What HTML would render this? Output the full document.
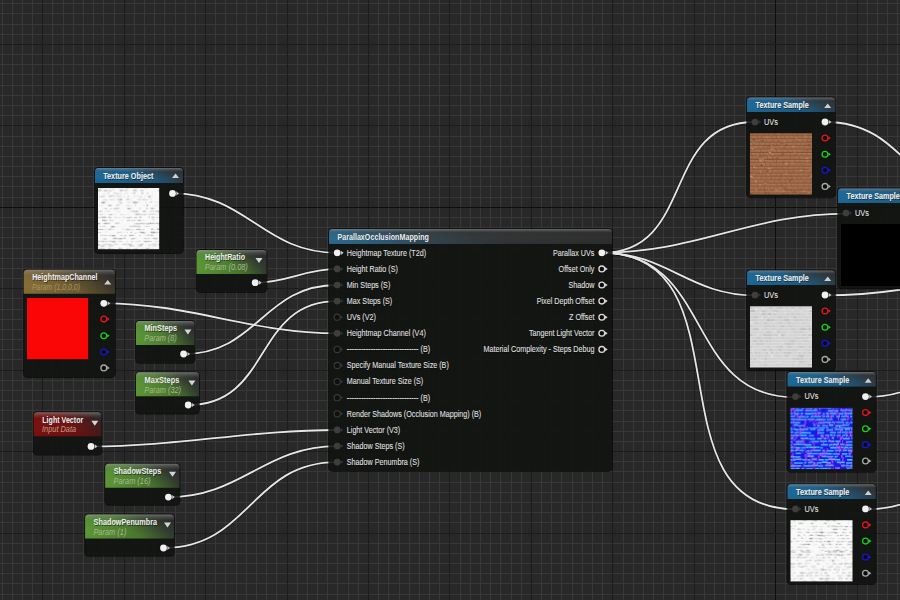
<!DOCTYPE html>
<html><head><meta charset="utf-8"><style>
html,body{margin:0;padding:0;width:900px;height:600px;overflow:hidden;background:#282828;}
svg{position:absolute;left:0;top:0;display:block}
</style></head><body>
<svg width="900" height="600" viewBox="0 0 900 600">
<defs><linearGradient id="gBlue" x1="0" y1="0.7" x2="1" y2="0.3">
<stop offset="0" stop-color="#1d6b9c"/><stop offset="0.5" stop-color="#1f5e86"/><stop offset="0.8" stop-color="#2a3e4a"/><stop offset="1" stop-color="#2e3032"/></linearGradient><linearGradient id="gBlueWide" x1="0" y1="0.6" x2="1" y2="0.4"><stop offset="0" stop-color="#2f6a8e"/><stop offset="0.12" stop-color="#2c5f7e"/><stop offset="0.33" stop-color="#34434c"/><stop offset="0.55" stop-color="#333536"/><stop offset="1" stop-color="#2d2d2d"/></linearGradient><linearGradient id="gGreen" x1="0" y1="0.7" x2="1" y2="0.3">
<stop offset="0" stop-color="#5e9c37"/><stop offset="0.45" stop-color="#4d7e30"/><stop offset="0.8" stop-color="#323c2e"/><stop offset="1" stop-color="#2a2b2a"/></linearGradient><linearGradient id="gGold" x1="0" y1="0.7" x2="1" y2="0.3">
<stop offset="0" stop-color="#8a7136"/><stop offset="0.45" stop-color="#705d32"/><stop offset="0.82" stop-color="#3c362a"/><stop offset="1" stop-color="#2c2b2a"/></linearGradient><linearGradient id="gRed" x1="0" y1="0.7" x2="1" y2="0.3">
<stop offset="0" stop-color="#801010"/><stop offset="0.5" stop-color="#6c1212"/><stop offset="0.85" stop-color="#421c1c"/><stop offset="1" stop-color="#2d2626"/></linearGradient><linearGradient id="gGloss" x1="0" y1="0" x2="0" y2="1">
<stop offset="0" stop-color="#a0a0a0" stop-opacity="0.55"/><stop offset="0.1" stop-color="#909090" stop-opacity="0.3"/><stop offset="0.25" stop-color="#808080" stop-opacity="0.0"/><stop offset="1" stop-color="#000000" stop-opacity="0.08"/></linearGradient><pattern id="tw" patternUnits="userSpaceOnUse" x="0" y="0" width="61.2" height="61.2"><rect width="62" height="62" fill="#f9f9f9"/><rect x="21.9" y="57.2" width="3.2" height="1.2" fill="#6f6f6f" fill-opacity="0.30"/><rect x="28.4" y="48.0" width="4.1" height="1.1" fill="#6f6f6f" fill-opacity="0.39"/><rect x="53.0" y="9.3" width="2.1" height="0.7" fill="#6f6f6f" fill-opacity="0.17"/><rect x="11.1" y="18.3" width="3.8" height="0.9" fill="#6f6f6f" fill-opacity="0.34"/><rect x="37.7" y="6.1" width="1.2" height="0.6" fill="#6f6f6f" fill-opacity="0.38"/><rect x="58.6" y="18.6" width="1.4" height="0.7" fill="#6f6f6f" fill-opacity="0.19"/><rect x="41.3" y="18.4" width="1.5" height="1.3" fill="#6f6f6f" fill-opacity="0.32"/><rect x="22.0" y="36.2" width="1.4" height="0.7" fill="#6f6f6f" fill-opacity="0.11"/><rect x="35.8" y="27.7" width="2.9" height="1.1" fill="#6f6f6f" fill-opacity="0.11"/><rect x="29.3" y="33.7" width="1.9" height="0.9" fill="#6f6f6f" fill-opacity="0.32"/><rect x="57.3" y="3.2" width="4.1" height="0.9" fill="#6f6f6f" fill-opacity="0.22"/><rect x="22.3" y="51.6" width="2.8" height="0.6" fill="#6f6f6f" fill-opacity="0.10"/><rect x="58.2" y="15.5" width="1.2" height="0.8" fill="#6f6f6f" fill-opacity="0.36"/><rect x="21.6" y="42.3" width="2.6" height="1.1" fill="#6f6f6f" fill-opacity="0.12"/><rect x="2.2" y="33.7" width="4.1" height="0.7" fill="#6f6f6f" fill-opacity="0.20"/><rect x="9.0" y="57.3" width="1.8" height="1.1" fill="#6f6f6f" fill-opacity="0.11"/><rect x="48.7" y="30.2" width="3.0" height="1.1" fill="#6f6f6f" fill-opacity="0.19"/><rect x="3.0" y="45.1" width="4.3" height="1.0" fill="#6f6f6f" fill-opacity="0.22"/><rect x="21.0" y="21.6" width="1.7" height="1.1" fill="#6f6f6f" fill-opacity="0.13"/><rect x="30.1" y="60.0" width="3.7" height="0.7" fill="#6f6f6f" fill-opacity="0.33"/><rect x="48.1" y="12.5" width="1.2" height="0.9" fill="#6f6f6f" fill-opacity="0.13"/><rect x="27.6" y="39.2" width="4.3" height="1.2" fill="#6f6f6f" fill-opacity="0.41"/><rect x="42.0" y="42.8" width="1.9" height="0.8" fill="#6f6f6f" fill-opacity="0.24"/><rect x="50.1" y="12.1" width="2.7" height="0.7" fill="#6f6f6f" fill-opacity="0.40"/><rect x="30.0" y="30.1" width="2.6" height="1.0" fill="#6f6f6f" fill-opacity="0.25"/><rect x="47.3" y="6.6" width="3.2" height="1.1" fill="#6f6f6f" fill-opacity="0.34"/><rect x="40.8" y="33.4" width="3.7" height="0.8" fill="#6f6f6f" fill-opacity="0.41"/><rect x="20.7" y="27.8" width="1.4" height="1.2" fill="#6f6f6f" fill-opacity="0.24"/><rect x="16.7" y="24.3" width="1.8" height="1.0" fill="#6f6f6f" fill-opacity="0.31"/><rect x="39.3" y="33.3" width="3.4" height="1.2" fill="#6f6f6f" fill-opacity="0.20"/><rect x="42.0" y="15.7" width="4.2" height="1.3" fill="#6f6f6f" fill-opacity="0.26"/><rect x="12.1" y="48.8" width="2.1" height="1.2" fill="#6f6f6f" fill-opacity="0.18"/><rect x="44.6" y="6.6" width="1.4" height="1.1" fill="#6f6f6f" fill-opacity="0.28"/><rect x="33.7" y="39.2" width="3.8" height="0.8" fill="#6f6f6f" fill-opacity="0.42"/><rect x="26.9" y="18.1" width="3.1" height="0.8" fill="#6f6f6f" fill-opacity="0.31"/><rect x="60.2" y="60.6" width="4.2" height="0.7" fill="#6f6f6f" fill-opacity="0.38"/><rect x="11.1" y="9.3" width="1.5" height="0.6" fill="#6f6f6f" fill-opacity="0.24"/><rect x="4.4" y="36.5" width="1.5" height="1.1" fill="#6f6f6f" fill-opacity="0.21"/><rect x="17.0" y="33.3" width="2.2" height="0.7" fill="#6f6f6f" fill-opacity="0.36"/><rect x="33.5" y="33.8" width="1.9" height="0.8" fill="#6f6f6f" fill-opacity="0.26"/><rect x="21.4" y="54.2" width="1.3" height="0.9" fill="#6f6f6f" fill-opacity="0.27"/><rect x="8.7" y="51.3" width="2.9" height="1.0" fill="#6f6f6f" fill-opacity="0.41"/><rect x="21.4" y="12.5" width="3.9" height="0.6" fill="#6f6f6f" fill-opacity="0.12"/><rect x="32.9" y="54.7" width="1.9" height="1.2" fill="#6f6f6f" fill-opacity="0.27"/><rect x="13.8" y="39.3" width="1.8" height="1.3" fill="#6f6f6f" fill-opacity="0.21"/><rect x="15.8" y="15.5" width="4.2" height="0.9" fill="#6f6f6f" fill-opacity="0.22"/><rect x="18.8" y="30.8" width="4.1" height="0.7" fill="#6f6f6f" fill-opacity="0.09"/><rect x="15.0" y="57.8" width="0.9" height="0.7" fill="#6f6f6f" fill-opacity="0.22"/><rect x="16.7" y="45.4" width="4.1" height="1.1" fill="#6f6f6f" fill-opacity="0.17"/><rect x="44.0" y="24.7" width="1.8" height="0.9" fill="#6f6f6f" fill-opacity="0.42"/><rect x="36.8" y="48.5" width="3.4" height="0.7" fill="#6f6f6f" fill-opacity="0.34"/><rect x="43.2" y="27.2" width="2.9" height="1.1" fill="#6f6f6f" fill-opacity="0.09"/><rect x="45.4" y="33.3" width="2.9" height="0.6" fill="#6f6f6f" fill-opacity="0.17"/><rect x="6.6" y="42.5" width="3.2" height="0.7" fill="#6f6f6f" fill-opacity="0.23"/><rect x="42.0" y="39.5" width="4.1" height="1.1" fill="#6f6f6f" fill-opacity="0.37"/><rect x="41.6" y="36.4" width="3.3" height="1.2" fill="#6f6f6f" fill-opacity="0.24"/><rect x="0.2" y="6.2" width="3.5" height="1.0" fill="#6f6f6f" fill-opacity="0.30"/><rect x="8.7" y="45.7" width="2.5" height="1.0" fill="#6f6f6f" fill-opacity="0.25"/><rect x="26.0" y="30.4" width="2.7" height="0.6" fill="#6f6f6f" fill-opacity="0.33"/><rect x="48.3" y="24.7" width="3.1" height="0.6" fill="#6f6f6f" fill-opacity="0.33"/><rect x="42.8" y="6.8" width="1.0" height="1.2" fill="#6f6f6f" fill-opacity="0.16"/><rect x="6.8" y="60.7" width="3.9" height="1.3" fill="#6f6f6f" fill-opacity="0.32"/><rect x="37.2" y="42.1" width="2.2" height="0.7" fill="#6f6f6f" fill-opacity="0.29"/><rect x="40.3" y="3.4" width="3.4" height="0.8" fill="#6f6f6f" fill-opacity="0.28"/><rect x="53.6" y="9.6" width="1.3" height="0.9" fill="#6f6f6f" fill-opacity="0.19"/><rect x="21.6" y="57.4" width="3.1" height="1.2" fill="#6f6f6f" fill-opacity="0.13"/><rect x="38.5" y="27.1" width="2.6" height="1.2" fill="#6f6f6f" fill-opacity="0.27"/><rect x="3.9" y="57.2" width="1.6" height="1.2" fill="#6f6f6f" fill-opacity="0.18"/><rect x="52.7" y="12.6" width="2.4" height="0.9" fill="#6f6f6f" fill-opacity="0.13"/><rect x="5.2" y="0.5" width="3.1" height="0.7" fill="#6f6f6f" fill-opacity="0.13"/><rect x="23.8" y="57.4" width="2.4" height="1.3" fill="#6f6f6f" fill-opacity="0.12"/><rect x="44.2" y="48.0" width="1.0" height="0.7" fill="#6f6f6f" fill-opacity="0.40"/><rect x="5.1" y="21.6" width="4.0" height="0.9" fill="#6f6f6f" fill-opacity="0.16"/><rect x="51.0" y="57.3" width="1.8" height="1.3" fill="#6f6f6f" fill-opacity="0.32"/><rect x="44.1" y="36.3" width="2.1" height="0.8" fill="#6f6f6f" fill-opacity="0.30"/><rect x="36.2" y="33.4" width="2.8" height="1.1" fill="#6f6f6f" fill-opacity="0.22"/><rect x="11.4" y="9.0" width="1.5" height="0.9" fill="#6f6f6f" fill-opacity="0.40"/><rect x="28.7" y="33.0" width="3.9" height="1.0" fill="#6f6f6f" fill-opacity="0.23"/><rect x="11.7" y="42.4" width="3.1" height="0.6" fill="#6f6f6f" fill-opacity="0.38"/><rect x="15.5" y="45.1" width="1.8" height="0.7" fill="#6f6f6f" fill-opacity="0.18"/><rect x="54.7" y="21.0" width="2.0" height="1.1" fill="#6f6f6f" fill-opacity="0.19"/><rect x="41.1" y="3.6" width="2.5" height="1.3" fill="#6f6f6f" fill-opacity="0.12"/><rect x="41.1" y="30.2" width="3.4" height="0.7" fill="#6f6f6f" fill-opacity="0.15"/><rect x="40.0" y="0.5" width="3.0" height="1.2" fill="#6f6f6f" fill-opacity="0.32"/><rect x="22.0" y="27.1" width="1.0" height="1.3" fill="#6f6f6f" fill-opacity="0.24"/><rect x="12.7" y="21.1" width="1.0" height="1.0" fill="#6f6f6f" fill-opacity="0.33"/><rect x="3.7" y="24.0" width="3.5" height="0.9" fill="#6f6f6f" fill-opacity="0.10"/><rect x="51.1" y="51.7" width="2.8" height="1.3" fill="#6f6f6f" fill-opacity="0.32"/><rect x="30.0" y="21.7" width="4.1" height="0.6" fill="#6f6f6f" fill-opacity="0.17"/><rect x="47.7" y="3.4" width="1.0" height="1.2" fill="#6f6f6f" fill-opacity="0.23"/><rect x="2.3" y="60.0" width="4.2" height="0.7" fill="#6f6f6f" fill-opacity="0.25"/><rect x="14.3" y="36.2" width="4.0" height="1.2" fill="#6f6f6f" fill-opacity="0.11"/><rect x="52.3" y="15.5" width="1.6" height="0.6" fill="#6f6f6f" fill-opacity="0.27"/><rect x="46.9" y="45.3" width="2.6" height="0.7" fill="#6f6f6f" fill-opacity="0.09"/><rect x="54.4" y="27.6" width="4.3" height="1.0" fill="#6f6f6f" fill-opacity="0.13"/><rect x="47.1" y="45.1" width="3.7" height="0.8" fill="#6f6f6f" fill-opacity="0.13"/><rect x="42.5" y="6.4" width="3.6" height="1.3" fill="#6f6f6f" fill-opacity="0.31"/><rect x="42.7" y="24.0" width="1.0" height="0.7" fill="#6f6f6f" fill-opacity="0.18"/><rect x="4.4" y="33.7" width="3.5" height="0.9" fill="#6f6f6f" fill-opacity="0.34"/><rect x="39.9" y="0.7" width="3.5" height="1.0" fill="#6f6f6f" fill-opacity="0.23"/><rect x="1.1" y="60.6" width="1.0" height="0.9" fill="#6f6f6f" fill-opacity="0.12"/><rect x="19.6" y="36.4" width="1.9" height="0.7" fill="#6f6f6f" fill-opacity="0.25"/><rect x="3.9" y="30.2" width="3.5" height="1.0" fill="#6f6f6f" fill-opacity="0.09"/><rect x="50.4" y="3.8" width="2.3" height="0.8" fill="#6f6f6f" fill-opacity="0.40"/><rect x="26.2" y="0.2" width="2.1" height="0.8" fill="#6f6f6f" fill-opacity="0.09"/><rect x="10.0" y="54.5" width="4.2" height="0.8" fill="#6f6f6f" fill-opacity="0.29"/><rect x="27.2" y="60.6" width="4.1" height="1.2" fill="#6f6f6f" fill-opacity="0.12"/><rect x="13.9" y="30.4" width="2.9" height="0.7" fill="#6f6f6f" fill-opacity="0.10"/><rect x="59.1" y="15.4" width="2.9" height="0.7" fill="#6f6f6f" fill-opacity="0.36"/><rect x="12.7" y="39.5" width="0.8" height="1.2" fill="#6f6f6f" fill-opacity="0.16"/><rect x="13.2" y="33.3" width="1.8" height="0.7" fill="#6f6f6f" fill-opacity="0.27"/><rect x="47.9" y="33.6" width="2.1" height="1.2" fill="#6f6f6f" fill-opacity="0.36"/><rect x="24.5" y="3.5" width="1.3" height="1.2" fill="#6f6f6f" fill-opacity="0.25"/><rect x="24.2" y="3.1" width="3.4" height="0.8" fill="#6f6f6f" fill-opacity="0.39"/><rect x="28.7" y="30.4" width="2.7" height="0.7" fill="#6f6f6f" fill-opacity="0.15"/><rect x="36.9" y="0.1" width="3.0" height="1.2" fill="#6f6f6f" fill-opacity="0.09"/><rect x="31.3" y="0.5" width="2.6" height="1.0" fill="#6f6f6f" fill-opacity="0.32"/><rect x="49.7" y="42.8" width="4.0" height="1.1" fill="#6f6f6f" fill-opacity="0.31"/><rect x="25.4" y="51.1" width="4.2" height="0.6" fill="#6f6f6f" fill-opacity="0.34"/><rect x="4.7" y="18.2" width="1.1" height="0.8" fill="#6f6f6f" fill-opacity="0.28"/><rect x="56.7" y="39.2" width="1.8" height="1.1" fill="#6f6f6f" fill-opacity="0.11"/><rect x="58.4" y="6.5" width="3.9" height="1.1" fill="#6f6f6f" fill-opacity="0.37"/><rect x="12.7" y="57.5" width="2.6" height="1.2" fill="#6f6f6f" fill-opacity="0.16"/><rect x="59.1" y="51.3" width="3.1" height="0.9" fill="#6f6f6f" fill-opacity="0.34"/><rect x="55.5" y="48.7" width="2.9" height="0.9" fill="#6f6f6f" fill-opacity="0.12"/><rect x="60.0" y="51.6" width="1.7" height="0.7" fill="#6f6f6f" fill-opacity="0.18"/><rect x="4.8" y="24.6" width="4.1" height="0.7" fill="#6f6f6f" fill-opacity="0.22"/><rect x="3.8" y="15.2" width="2.8" height="1.2" fill="#6f6f6f" fill-opacity="0.38"/><rect x="25.9" y="39.3" width="2.7" height="1.2" fill="#6f6f6f" fill-opacity="0.19"/><rect x="54.3" y="24.1" width="2.0" height="0.9" fill="#6f6f6f" fill-opacity="0.13"/><rect x="36.8" y="27.5" width="1.4" height="0.7" fill="#6f6f6f" fill-opacity="0.28"/><rect x="20.1" y="60.6" width="1.1" height="1.3" fill="#6f6f6f" fill-opacity="0.13"/><rect x="19.4" y="48.8" width="3.8" height="1.1" fill="#6f6f6f" fill-opacity="0.40"/><rect x="37.5" y="21.7" width="3.6" height="1.2" fill="#6f6f6f" fill-opacity="0.08"/><rect x="20.5" y="15.1" width="2.1" height="1.1" fill="#6f6f6f" fill-opacity="0.28"/><rect x="49.8" y="42.6" width="3.6" height="1.1" fill="#6f6f6f" fill-opacity="0.39"/><rect x="58.9" y="54.5" width="1.2" height="0.7" fill="#6f6f6f" fill-opacity="0.11"/><rect x="10.5" y="18.3" width="3.9" height="1.3" fill="#6f6f6f" fill-opacity="0.34"/><rect x="33.2" y="21.3" width="2.1" height="0.7" fill="#6f6f6f" fill-opacity="0.28"/><rect x="0.2" y="33.1" width="2.1" height="0.8" fill="#6f6f6f" fill-opacity="0.33"/><rect x="44.0" y="45.6" width="1.8" height="0.7" fill="#6f6f6f" fill-opacity="0.24"/><rect x="11.9" y="33.6" width="2.0" height="0.7" fill="#6f6f6f" fill-opacity="0.39"/><rect x="48.1" y="60.6" width="2.8" height="0.8" fill="#6f6f6f" fill-opacity="0.20"/><rect x="3.1" y="6.4" width="2.3" height="0.8" fill="#6f6f6f" fill-opacity="0.31"/><rect x="59.0" y="6.1" width="2.7" height="0.9" fill="#6f6f6f" fill-opacity="0.14"/><rect x="14.9" y="36.7" width="2.4" height="0.7" fill="#6f6f6f" fill-opacity="0.11"/><rect x="1.0" y="12.3" width="1.7" height="0.9" fill="#6f6f6f" fill-opacity="0.21"/><rect x="59.3" y="48.1" width="1.5" height="1.2" fill="#6f6f6f" fill-opacity="0.09"/><rect x="17.0" y="48.1" width="4.1" height="1.1" fill="#6f6f6f" fill-opacity="0.25"/><rect x="47.0" y="3.1" width="2.6" height="1.2" fill="#6f6f6f" fill-opacity="0.40"/><rect x="35.8" y="60.5" width="1.6" height="0.9" fill="#6f6f6f" fill-opacity="0.33"/><rect x="23.1" y="39.7" width="4.3" height="1.1" fill="#6f6f6f" fill-opacity="0.38"/><rect x="11.6" y="12.2" width="3.7" height="0.7" fill="#6f6f6f" fill-opacity="0.21"/><rect x="16.5" y="36.3" width="2.4" height="0.8" fill="#6f6f6f" fill-opacity="0.31"/><rect x="46.2" y="9.6" width="1.1" height="1.1" fill="#6f6f6f" fill-opacity="0.10"/><rect x="12.0" y="39.7" width="0.9" height="1.2" fill="#6f6f6f" fill-opacity="0.41"/><rect x="28.6" y="57.4" width="1.1" height="0.9" fill="#6f6f6f" fill-opacity="0.29"/><rect x="26.2" y="0.1" width="1.7" height="1.1" fill="#6f6f6f" fill-opacity="0.21"/><rect x="31.6" y="18.1" width="4.2" height="1.1" fill="#6f6f6f" fill-opacity="0.11"/><rect x="24.4" y="9.1" width="1.9" height="1.2" fill="#6f6f6f" fill-opacity="0.27"/><rect x="14.7" y="42.8" width="2.8" height="0.8" fill="#6f6f6f" fill-opacity="0.27"/><rect x="29.4" y="36.1" width="3.3" height="0.6" fill="#6f6f6f" fill-opacity="0.34"/><rect x="43.7" y="39.2" width="1.6" height="0.8" fill="#6f6f6f" fill-opacity="0.35"/><rect x="23.5" y="21.0" width="2.0" height="0.6" fill="#6f6f6f" fill-opacity="0.18"/><rect x="7.5" y="42.1" width="4.0" height="1.0" fill="#6f6f6f" fill-opacity="0.18"/><rect x="57.9" y="54.7" width="4.3" height="0.8" fill="#6f6f6f" fill-opacity="0.14"/><rect x="3.4" y="6.5" width="1.5" height="1.0" fill="#6f6f6f" fill-opacity="0.12"/><rect x="33.7" y="48.2" width="3.7" height="0.7" fill="#6f6f6f" fill-opacity="0.20"/><rect x="34.4" y="45.0" width="2.8" height="0.6" fill="#6f6f6f" fill-opacity="0.33"/><rect x="8.8" y="9.3" width="4.2" height="0.8" fill="#6f6f6f" fill-opacity="0.18"/><rect x="16.0" y="12.6" width="3.7" height="1.0" fill="#6f6f6f" fill-opacity="0.21"/><rect x="42.8" y="60.6" width="2.9" height="1.2" fill="#6f6f6f" fill-opacity="0.39"/><rect x="34.5" y="15.5" width="4.0" height="0.8" fill="#6f6f6f" fill-opacity="0.13"/><rect x="50.3" y="42.0" width="2.5" height="1.2" fill="#6f6f6f" fill-opacity="0.10"/><rect x="25.2" y="54.3" width="2.7" height="0.9" fill="#6f6f6f" fill-opacity="0.28"/><rect x="6.8" y="51.8" width="1.0" height="1.1" fill="#6f6f6f" fill-opacity="0.12"/><rect x="18.5" y="6.6" width="2.6" height="1.0" fill="#6f6f6f" fill-opacity="0.37"/><rect x="16.7" y="60.5" width="2.2" height="0.8" fill="#6f6f6f" fill-opacity="0.24"/><rect x="46.3" y="27.0" width="2.6" height="1.2" fill="#6f6f6f" fill-opacity="0.24"/><rect x="57.5" y="12.5" width="1.9" height="1.0" fill="#6f6f6f" fill-opacity="0.24"/><rect x="4.8" y="12.3" width="2.3" height="1.0" fill="#6f6f6f" fill-opacity="0.30"/><rect x="55.8" y="15.2" width="1.4" height="1.0" fill="#6f6f6f" fill-opacity="0.40"/><rect x="8.8" y="33.7" width="1.7" height="0.9" fill="#6f6f6f" fill-opacity="0.26"/><rect x="40.4" y="18.4" width="2.3" height="1.1" fill="#6f6f6f" fill-opacity="0.36"/><rect x="12.0" y="27.5" width="2.3" height="1.2" fill="#6f6f6f" fill-opacity="0.26"/><rect x="39.1" y="45.5" width="4.1" height="0.7" fill="#6f6f6f" fill-opacity="0.34"/><rect x="53.1" y="30.1" width="1.8" height="1.1" fill="#6f6f6f" fill-opacity="0.14"/><rect x="38.8" y="51.3" width="3.3" height="0.8" fill="#6f6f6f" fill-opacity="0.22"/><rect x="19.0" y="30.7" width="1.8" height="0.8" fill="#6f6f6f" fill-opacity="0.42"/><rect x="18.4" y="39.1" width="1.4" height="1.3" fill="#6f6f6f" fill-opacity="0.35"/><rect x="28.2" y="48.3" width="1.1" height="0.9" fill="#6f6f6f" fill-opacity="0.40"/><rect x="6.6" y="51.2" width="2.6" height="1.3" fill="#6f6f6f" fill-opacity="0.40"/><rect x="10.4" y="42.3" width="1.7" height="1.0" fill="#6f6f6f" fill-opacity="0.12"/><rect x="33.1" y="60.8" width="2.3" height="0.8" fill="#6f6f6f" fill-opacity="0.27"/><rect x="53.8" y="39.0" width="4.2" height="0.7" fill="#6f6f6f" fill-opacity="0.30"/><rect x="19.9" y="15.7" width="3.6" height="1.0" fill="#6f6f6f" fill-opacity="0.13"/><rect x="39.1" y="3.7" width="1.9" height="1.0" fill="#6f6f6f" fill-opacity="0.35"/><rect x="17.3" y="60.4" width="3.4" height="0.8" fill="#6f6f6f" fill-opacity="0.24"/><rect x="36.4" y="57.1" width="2.4" height="1.3" fill="#6f6f6f" fill-opacity="0.34"/><rect x="8.1" y="42.8" width="1.4" height="0.7" fill="#6f6f6f" fill-opacity="0.23"/><rect x="41.3" y="57.4" width="3.6" height="0.9" fill="#6f6f6f" fill-opacity="0.18"/><rect x="42.6" y="24.5" width="2.7" height="1.0" fill="#6f6f6f" fill-opacity="0.15"/><rect x="36.1" y="0.3" width="3.0" height="0.9" fill="#6f6f6f" fill-opacity="0.38"/><rect x="20.4" y="57.2" width="3.9" height="0.7" fill="#6f6f6f" fill-opacity="0.23"/><rect x="47.2" y="39.3" width="1.8" height="0.7" fill="#6f6f6f" fill-opacity="0.40"/><rect x="57.6" y="3.0" width="1.9" height="1.2" fill="#6f6f6f" fill-opacity="0.31"/><rect x="36.1" y="39.7" width="2.4" height="1.2" fill="#6f6f6f" fill-opacity="0.26"/><rect x="37.5" y="30.6" width="3.6" height="0.7" fill="#6f6f6f" fill-opacity="0.25"/><rect x="29.4" y="0.4" width="2.4" height="0.9" fill="#6f6f6f" fill-opacity="0.16"/><rect x="7.3" y="0.4" width="1.5" height="1.3" fill="#6f6f6f" fill-opacity="0.37"/><rect x="24.4" y="21.5" width="1.2" height="0.9" fill="#6f6f6f" fill-opacity="0.37"/><rect x="0.6" y="60.2" width="3.1" height="1.0" fill="#6f6f6f" fill-opacity="0.33"/><rect x="35.5" y="48.3" width="1.6" height="0.7" fill="#6f6f6f" fill-opacity="0.27"/><rect x="27.1" y="51.6" width="3.2" height="0.6" fill="#6f6f6f" fill-opacity="0.17"/><rect x="3.5" y="0.1" width="0.9" height="1.1" fill="#6f6f6f" fill-opacity="0.12"/><rect x="54.8" y="42.7" width="2.4" height="0.8" fill="#6f6f6f" fill-opacity="0.11"/><rect x="50.9" y="57.5" width="2.9" height="1.1" fill="#6f6f6f" fill-opacity="0.37"/><rect x="39.7" y="57.2" width="2.4" height="1.0" fill="#6f6f6f" fill-opacity="0.41"/><rect x="32.6" y="30.2" width="3.9" height="0.7" fill="#6f6f6f" fill-opacity="0.22"/><rect x="18.3" y="3.3" width="3.4" height="0.9" fill="#6f6f6f" fill-opacity="0.14"/><rect x="42.0" y="9.7" width="1.6" height="0.9" fill="#6f6f6f" fill-opacity="0.24"/><rect x="16.7" y="39.8" width="2.6" height="0.7" fill="#6f6f6f" fill-opacity="0.32"/><rect x="53.1" y="24.6" width="4.0" height="1.2" fill="#6f6f6f" fill-opacity="0.22"/><rect x="43.5" y="51.7" width="2.4" height="0.7" fill="#6f6f6f" fill-opacity="0.19"/><rect x="52.9" y="24.6" width="1.0" height="1.2" fill="#6f6f6f" fill-opacity="0.41"/><rect x="5.8" y="15.3" width="2.9" height="0.9" fill="#6f6f6f" fill-opacity="0.13"/><rect x="33.2" y="27.1" width="3.3" height="1.3" fill="#6f6f6f" fill-opacity="0.33"/><rect x="50.5" y="51.4" width="3.9" height="1.1" fill="#6f6f6f" fill-opacity="0.38"/><rect x="0.4" y="45.1" width="1.0" height="1.0" fill="#6f6f6f" fill-opacity="0.34"/><rect x="34.9" y="45.2" width="3.9" height="0.8" fill="#6f6f6f" fill-opacity="0.41"/><rect x="26.0" y="39.1" width="2.3" height="1.2" fill="#6f6f6f" fill-opacity="0.16"/><rect x="31.4" y="27.1" width="3.5" height="0.9" fill="#6f6f6f" fill-opacity="0.11"/><rect x="5.8" y="60.5" width="3.4" height="0.9" fill="#6f6f6f" fill-opacity="0.19"/><rect x="41.3" y="3.2" width="1.2" height="1.0" fill="#6f6f6f" fill-opacity="0.11"/><rect x="41.6" y="60.7" width="1.1" height="0.9" fill="#6f6f6f" fill-opacity="0.38"/><rect x="9.2" y="18.4" width="1.8" height="0.9" fill="#6f6f6f" fill-opacity="0.11"/><rect x="17.7" y="48.2" width="1.1" height="0.8" fill="#6f6f6f" fill-opacity="0.40"/><rect x="9.7" y="27.3" width="3.0" height="0.9" fill="#6f6f6f" fill-opacity="0.42"/><rect x="6.3" y="18.3" width="1.9" height="1.2" fill="#6f6f6f" fill-opacity="0.25"/><rect x="27.6" y="3.5" width="3.9" height="0.6" fill="#6f6f6f" fill-opacity="0.16"/><rect x="28.1" y="27.2" width="3.9" height="1.0" fill="#6f6f6f" fill-opacity="0.26"/><rect x="34.8" y="6.7" width="2.4" height="1.1" fill="#6f6f6f" fill-opacity="0.29"/><rect x="7.6" y="36.7" width="1.0" height="0.8" fill="#6f6f6f" fill-opacity="0.10"/><rect x="57.3" y="33.3" width="1.2" height="0.6" fill="#6f6f6f" fill-opacity="0.13"/><rect x="6.6" y="27.0" width="3.4" height="1.2" fill="#6f6f6f" fill-opacity="0.11"/><rect x="17.8" y="6.2" width="2.3" height="0.8" fill="#6f6f6f" fill-opacity="0.23"/><rect x="20.3" y="27.1" width="3.2" height="1.0" fill="#6f6f6f" fill-opacity="0.37"/><rect x="51.7" y="42.5" width="1.4" height="0.9" fill="#6f6f6f" fill-opacity="0.19"/><rect x="26.7" y="57.1" width="1.8" height="1.2" fill="#6f6f6f" fill-opacity="0.20"/><rect x="23.8" y="60.8" width="3.8" height="1.3" fill="#6f6f6f" fill-opacity="0.13"/><rect x="17.0" y="51.4" width="1.4" height="0.9" fill="#6f6f6f" fill-opacity="0.40"/><rect x="11.9" y="36.3" width="1.3" height="1.2" fill="#6f6f6f" fill-opacity="0.26"/><rect x="2.2" y="9.2" width="3.7" height="1.1" fill="#6f6f6f" fill-opacity="0.17"/><rect x="40.7" y="45.7" width="0.9" height="0.7" fill="#6f6f6f" fill-opacity="0.27"/><rect x="37.3" y="9.3" width="1.4" height="1.3" fill="#6f6f6f" fill-opacity="0.10"/><rect x="29.0" y="45.0" width="1.5" height="1.2" fill="#6f6f6f" fill-opacity="0.42"/><rect x="13.5" y="30.6" width="2.4" height="0.6" fill="#6f6f6f" fill-opacity="0.12"/><rect x="42.3" y="18.1" width="1.2" height="1.2" fill="#6f6f6f" fill-opacity="0.30"/><rect x="51.0" y="54.7" width="3.5" height="0.8" fill="#6f6f6f" fill-opacity="0.14"/><rect x="23.9" y="24.2" width="1.6" height="1.3" fill="#6f6f6f" fill-opacity="0.37"/><rect x="14.2" y="27.4" width="1.0" height="1.1" fill="#6f6f6f" fill-opacity="0.34"/><rect x="40.6" y="51.2" width="1.1" height="0.9" fill="#6f6f6f" fill-opacity="0.32"/><rect x="7.3" y="0.4" width="1.1" height="0.8" fill="#6f6f6f" fill-opacity="0.21"/><rect x="51.1" y="57.4" width="3.4" height="1.0" fill="#6f6f6f" fill-opacity="0.19"/><rect x="16.3" y="36.3" width="1.6" height="1.2" fill="#6f6f6f" fill-opacity="0.28"/><rect x="0.5" y="42.1" width="2.8" height="0.8" fill="#6f6f6f" fill-opacity="0.09"/><rect x="14.5" y="27.1" width="2.1" height="1.1" fill="#6f6f6f" fill-opacity="0.16"/><rect x="56.2" y="12.2" width="1.2" height="1.0" fill="#6f6f6f" fill-opacity="0.32"/><rect x="53.2" y="57.4" width="3.0" height="1.1" fill="#6f6f6f" fill-opacity="0.11"/><rect x="48.8" y="15.5" width="3.1" height="1.1" fill="#6f6f6f" fill-opacity="0.30"/><rect x="31.8" y="54.4" width="3.7" height="0.8" fill="#6f6f6f" fill-opacity="0.27"/><rect x="48.0" y="57.1" width="2.1" height="1.2" fill="#6f6f6f" fill-opacity="0.37"/><rect x="8.2" y="57.5" width="2.4" height="1.0" fill="#6f6f6f" fill-opacity="0.15"/><rect x="51.4" y="9.5" width="4.0" height="0.7" fill="#6f6f6f" fill-opacity="0.27"/><rect x="9.8" y="18.2" width="2.2" height="1.2" fill="#6f6f6f" fill-opacity="0.11"/><rect x="6.9" y="33.2" width="1.7" height="1.0" fill="#6f6f6f" fill-opacity="0.40"/><rect x="15.7" y="36.4" width="2.5" height="0.9" fill="#6f6f6f" fill-opacity="0.13"/><rect x="3.8" y="45.8" width="4.3" height="0.9" fill="#6f6f6f" fill-opacity="0.29"/><rect x="40.4" y="18.4" width="2.0" height="1.1" fill="#6f6f6f" fill-opacity="0.21"/><rect x="41.3" y="57.6" width="1.4" height="0.9" fill="#6f6f6f" fill-opacity="0.36"/><rect x="47.9" y="21.5" width="3.1" height="0.8" fill="#6f6f6f" fill-opacity="0.41"/><rect x="31.9" y="39.4" width="3.3" height="1.1" fill="#6f6f6f" fill-opacity="0.24"/><rect x="34.6" y="45.4" width="4.3" height="0.8" fill="#6f6f6f" fill-opacity="0.32"/><rect x="47.4" y="12.1" width="3.1" height="1.0" fill="#6f6f6f" fill-opacity="0.35"/><rect x="42.6" y="12.0" width="3.2" height="0.7" fill="#6f6f6f" fill-opacity="0.12"/><rect x="3.9" y="3.7" width="2.3" height="1.2" fill="#6f6f6f" fill-opacity="0.40"/><rect x="47.0" y="0.3" width="2.7" height="1.1" fill="#6f6f6f" fill-opacity="0.30"/><rect x="59.2" y="30.6" width="2.5" height="0.9" fill="#6f6f6f" fill-opacity="0.30"/><rect x="47.0" y="51.3" width="2.9" height="0.6" fill="#6f6f6f" fill-opacity="0.42"/><rect x="56.7" y="18.2" width="1.8" height="0.8" fill="#6f6f6f" fill-opacity="0.36"/><rect x="4.1" y="21.4" width="2.5" height="1.2" fill="#6f6f6f" fill-opacity="0.16"/><rect x="22.2" y="39.2" width="0.8" height="0.7" fill="#6f6f6f" fill-opacity="0.13"/><rect x="14.3" y="30.2" width="4.0" height="1.1" fill="#6f6f6f" fill-opacity="0.42"/><rect x="29.2" y="9.5" width="1.2" height="1.0" fill="#6f6f6f" fill-opacity="0.17"/><rect x="52.7" y="12.5" width="1.2" height="0.8" fill="#6f6f6f" fill-opacity="0.13"/><rect x="57.7" y="21.3" width="1.0" height="1.2" fill="#6f6f6f" fill-opacity="0.23"/><rect x="50.9" y="0.1" width="2.6" height="0.9" fill="#6f6f6f" fill-opacity="0.11"/><rect x="18.7" y="9.0" width="2.4" height="1.2" fill="#6f6f6f" fill-opacity="0.39"/><rect x="58.8" y="12.3" width="3.8" height="0.8" fill="#6f6f6f" fill-opacity="0.23"/><rect x="29.3" y="48.0" width="3.4" height="1.3" fill="#6f6f6f" fill-opacity="0.12"/><rect x="14.9" y="48.6" width="2.3" height="0.7" fill="#6f6f6f" fill-opacity="0.16"/><rect x="31.9" y="48.5" width="3.2" height="1.1" fill="#6f6f6f" fill-opacity="0.26"/><rect x="43.4" y="33.2" width="0.9" height="1.0" fill="#6f6f6f" fill-opacity="0.22"/><rect x="14.2" y="42.3" width="1.9" height="0.9" fill="#6f6f6f" fill-opacity="0.15"/><rect x="4.2" y="45.4" width="1.1" height="1.2" fill="#6f6f6f" fill-opacity="0.28"/><rect x="26.4" y="27.8" width="3.2" height="0.9" fill="#6f6f6f" fill-opacity="0.10"/><rect x="26.0" y="15.0" width="3.7" height="1.0" fill="#6f6f6f" fill-opacity="0.15"/><rect x="47.3" y="21.5" width="2.3" height="0.8" fill="#6f6f6f" fill-opacity="0.40"/><rect x="47.8" y="60.4" width="1.3" height="1.3" fill="#6f6f6f" fill-opacity="0.37"/><rect x="28.6" y="45.1" width="1.1" height="0.9" fill="#6f6f6f" fill-opacity="0.31"/><rect x="57.0" y="33.7" width="3.3" height="0.7" fill="#6f6f6f" fill-opacity="0.18"/><rect x="18.7" y="60.3" width="2.6" height="1.1" fill="#6f6f6f" fill-opacity="0.21"/><rect x="23.2" y="15.7" width="2.2" height="1.0" fill="#6f6f6f" fill-opacity="0.23"/><rect x="45.9" y="21.5" width="4.1" height="0.6" fill="#6f6f6f" fill-opacity="0.38"/><rect x="55.5" y="9.6" width="2.3" height="1.0" fill="#6f6f6f" fill-opacity="0.38"/><rect x="11.9" y="9.3" width="1.6" height="0.7" fill="#6f6f6f" fill-opacity="0.10"/><rect x="21.3" y="30.8" width="2.2" height="0.8" fill="#6f6f6f" fill-opacity="0.35"/><rect x="14.1" y="45.3" width="3.9" height="1.2" fill="#6f6f6f" fill-opacity="0.34"/><rect x="39.0" y="30.2" width="2.1" height="0.8" fill="#6f6f6f" fill-opacity="0.19"/><rect x="42.6" y="57.3" width="3.5" height="0.7" fill="#6f6f6f" fill-opacity="0.15"/><rect x="48.3" y="36.4" width="4.1" height="1.0" fill="#6f6f6f" fill-opacity="0.28"/><rect x="25.4" y="57.2" width="1.3" height="0.6" fill="#6f6f6f" fill-opacity="0.31"/><rect x="47.0" y="30.6" width="3.8" height="1.2" fill="#6f6f6f" fill-opacity="0.27"/><rect x="54.3" y="39.5" width="1.2" height="1.0" fill="#6f6f6f" fill-opacity="0.31"/><rect x="60.0" y="15.6" width="1.9" height="1.1" fill="#6f6f6f" fill-opacity="0.15"/><rect x="8.5" y="36.6" width="3.7" height="0.8" fill="#6f6f6f" fill-opacity="0.29"/><rect x="16.2" y="42.3" width="2.0" height="1.3" fill="#6f6f6f" fill-opacity="0.30"/><rect x="47.3" y="45.5" width="1.6" height="1.1" fill="#6f6f6f" fill-opacity="0.35"/><rect x="36.5" y="6.5" width="4.2" height="1.0" fill="#6f6f6f" fill-opacity="0.37"/><rect x="25.7" y="12.4" width="2.4" height="0.9" fill="#6f6f6f" fill-opacity="0.34"/><rect x="51.7" y="54.2" width="4.3" height="1.2" fill="#6f6f6f" fill-opacity="0.30"/><rect x="35.1" y="18.5" width="1.2" height="0.7" fill="#6f6f6f" fill-opacity="0.33"/><rect x="38.2" y="33.2" width="2.9" height="0.8" fill="#6f6f6f" fill-opacity="0.10"/><rect x="46.3" y="9.1" width="1.6" height="1.1" fill="#6f6f6f" fill-opacity="0.32"/><rect x="6.1" y="24.6" width="2.6" height="0.7" fill="#6f6f6f" fill-opacity="0.29"/><rect x="54.5" y="21.5" width="2.6" height="0.9" fill="#6f6f6f" fill-opacity="0.12"/><rect x="37.1" y="12.4" width="4.0" height="1.0" fill="#6f6f6f" fill-opacity="0.25"/><rect x="52.7" y="60.1" width="3.0" height="0.7" fill="#6f6f6f" fill-opacity="0.10"/><rect x="60.3" y="3.3" width="2.9" height="0.9" fill="#6f6f6f" fill-opacity="0.25"/><rect x="19.9" y="39.7" width="2.0" height="1.1" fill="#6f6f6f" fill-opacity="0.31"/><rect x="44.1" y="39.1" width="4.1" height="1.1" fill="#6f6f6f" fill-opacity="0.32"/><rect x="49.2" y="0.2" width="2.7" height="1.3" fill="#6f6f6f" fill-opacity="0.19"/><rect x="4.9" y="60.3" width="1.8" height="0.7" fill="#6f6f6f" fill-opacity="0.11"/><rect x="51.8" y="6.1" width="1.3" height="0.7" fill="#6f6f6f" fill-opacity="0.40"/><rect x="51.0" y="45.3" width="2.1" height="1.0" fill="#6f6f6f" fill-opacity="0.15"/><rect x="40.4" y="18.1" width="4.2" height="0.8" fill="#6f6f6f" fill-opacity="0.10"/><rect x="36.2" y="39.7" width="1.6" height="1.0" fill="#6f6f6f" fill-opacity="0.41"/><rect x="0.7" y="54.5" width="2.3" height="0.7" fill="#6f6f6f" fill-opacity="0.37"/><rect x="30.2" y="33.6" width="2.5" height="0.9" fill="#6f6f6f" fill-opacity="0.11"/><rect x="49.2" y="30.1" width="0.9" height="1.2" fill="#6f6f6f" fill-opacity="0.11"/><rect x="50.2" y="0.5" width="1.1" height="0.7" fill="#6f6f6f" fill-opacity="0.37"/><rect x="14.4" y="0.4" width="2.4" height="0.6" fill="#6f6f6f" fill-opacity="0.16"/><rect x="46.6" y="33.1" width="3.3" height="0.9" fill="#6f6f6f" fill-opacity="0.17"/><rect x="34.5" y="33.8" width="2.9" height="0.8" fill="#6f6f6f" fill-opacity="0.15"/><rect x="7.6" y="15.7" width="2.9" height="1.0" fill="#6f6f6f" fill-opacity="0.09"/><rect x="29.3" y="24.7" width="0.9" height="0.6" fill="#6f6f6f" fill-opacity="0.34"/><rect x="55.9" y="12.1" width="1.7" height="0.8" fill="#6f6f6f" fill-opacity="0.12"/><rect x="12.3" y="30.2" width="3.1" height="1.0" fill="#6f6f6f" fill-opacity="0.31"/><rect x="26.3" y="33.1" width="1.4" height="0.8" fill="#6f6f6f" fill-opacity="0.20"/><rect x="57.8" y="15.8" width="2.7" height="1.3" fill="#6f6f6f" fill-opacity="0.35"/><rect x="59.1" y="9.7" width="1.2" height="0.7" fill="#6f6f6f" fill-opacity="0.33"/><rect x="52.2" y="33.2" width="4.1" height="1.3" fill="#6f6f6f" fill-opacity="0.16"/><rect x="14.3" y="45.6" width="1.4" height="0.7" fill="#6f6f6f" fill-opacity="0.37"/><rect x="12.3" y="33.5" width="3.1" height="1.3" fill="#6f6f6f" fill-opacity="0.10"/><rect x="22.6" y="30.3" width="2.8" height="0.6" fill="#6f6f6f" fill-opacity="0.24"/><rect x="42.0" y="54.8" width="3.2" height="1.0" fill="#6f6f6f" fill-opacity="0.42"/><rect x="23.7" y="42.6" width="3.5" height="0.7" fill="#6f6f6f" fill-opacity="0.33"/><rect x="57.6" y="54.4" width="4.3" height="1.3" fill="#6f6f6f" fill-opacity="0.40"/><rect x="22.1" y="3.7" width="2.3" height="0.9" fill="#6f6f6f" fill-opacity="0.42"/><rect x="15.3" y="18.1" width="1.2" height="0.7" fill="#6f6f6f" fill-opacity="0.33"/><rect x="22.7" y="18.1" width="1.1" height="1.2" fill="#6f6f6f" fill-opacity="0.27"/><rect x="44.3" y="57.7" width="3.4" height="0.8" fill="#6f6f6f" fill-opacity="0.23"/><rect x="60.3" y="36.2" width="2.3" height="0.8" fill="#6f6f6f" fill-opacity="0.41"/><rect x="59.4" y="6.1" width="2.1" height="1.2" fill="#6f6f6f" fill-opacity="0.25"/><rect x="28.0" y="24.3" width="2.3" height="1.2" fill="#6f6f6f" fill-opacity="0.29"/><rect x="4.8" y="24.6" width="2.0" height="1.1" fill="#6f6f6f" fill-opacity="0.36"/><rect x="54.8" y="60.7" width="2.9" height="0.9" fill="#6f6f6f" fill-opacity="0.27"/><rect x="1.7" y="51.2" width="3.1" height="1.0" fill="#6f6f6f" fill-opacity="0.09"/><rect x="39.1" y="45.7" width="2.0" height="0.8" fill="#6f6f6f" fill-opacity="0.30"/><rect x="9.6" y="51.0" width="1.1" height="1.1" fill="#6f6f6f" fill-opacity="0.20"/><rect x="32.8" y="57.3" width="2.8" height="1.1" fill="#6f6f6f" fill-opacity="0.17"/><rect x="55.3" y="21.1" width="3.3" height="0.7" fill="#6f6f6f" fill-opacity="0.23"/><rect x="14.6" y="60.4" width="1.4" height="1.3" fill="#6f6f6f" fill-opacity="0.10"/><rect x="48.1" y="12.1" width="2.9" height="0.6" fill="#6f6f6f" fill-opacity="0.18"/><rect x="59.0" y="18.7" width="3.0" height="1.3" fill="#6f6f6f" fill-opacity="0.29"/><rect x="26.9" y="0.1" width="3.3" height="0.7" fill="#6f6f6f" fill-opacity="0.11"/><rect x="39.7" y="42.7" width="1.0" height="1.1" fill="#6f6f6f" fill-opacity="0.42"/><rect x="41.7" y="42.2" width="2.0" height="0.9" fill="#6f6f6f" fill-opacity="0.28"/><rect x="57.1" y="24.6" width="1.3" height="0.7" fill="#6f6f6f" fill-opacity="0.31"/><rect x="13.8" y="39.7" width="4.1" height="1.2" fill="#6f6f6f" fill-opacity="0.31"/><rect x="29.9" y="45.3" width="2.2" height="0.9" fill="#6f6f6f" fill-opacity="0.19"/><rect x="61.0" y="45.0" width="3.5" height="0.6" fill="#6f6f6f" fill-opacity="0.37"/><rect x="54.2" y="24.3" width="4.1" height="0.6" fill="#6f6f6f" fill-opacity="0.29"/><rect x="5.2" y="36.2" width="2.7" height="1.0" fill="#6f6f6f" fill-opacity="0.36"/><rect x="48.6" y="45.2" width="2.2" height="0.7" fill="#6f6f6f" fill-opacity="0.35"/><rect x="56.1" y="54.7" width="1.5" height="1.0" fill="#6f6f6f" fill-opacity="0.11"/><rect x="26.3" y="30.5" width="3.7" height="0.7" fill="#6f6f6f" fill-opacity="0.17"/><rect x="41.7" y="33.2" width="3.0" height="0.9" fill="#6f6f6f" fill-opacity="0.31"/><rect x="40.7" y="36.1" width="2.8" height="1.2" fill="#6f6f6f" fill-opacity="0.38"/><rect x="7.7" y="0.3" width="3.9" height="1.3" fill="#6f6f6f" fill-opacity="0.22"/><rect x="24.1" y="21.3" width="1.7" height="1.0" fill="#6f6f6f" fill-opacity="0.40"/><rect x="40.0" y="12.4" width="3.2" height="1.2" fill="#6f6f6f" fill-opacity="0.32"/><rect x="55.8" y="48.2" width="4.2" height="1.1" fill="#6f6f6f" fill-opacity="0.18"/><rect x="53.1" y="54.3" width="2.3" height="1.1" fill="#6f6f6f" fill-opacity="0.34"/><rect x="20.9" y="45.6" width="1.3" height="0.9" fill="#6f6f6f" fill-opacity="0.41"/><rect x="57.6" y="3.1" width="3.9" height="0.7" fill="#6f6f6f" fill-opacity="0.09"/><rect x="1.1" y="54.1" width="2.0" height="1.1" fill="#6f6f6f" fill-opacity="0.24"/><rect x="36.1" y="60.2" width="2.2" height="1.2" fill="#6f6f6f" fill-opacity="0.36"/><rect x="6.0" y="24.6" width="1.5" height="1.1" fill="#6f6f6f" fill-opacity="0.25"/><rect x="8.9" y="0.6" width="3.7" height="0.7" fill="#6f6f6f" fill-opacity="0.13"/><rect x="23.5" y="51.2" width="3.4" height="0.8" fill="#6f6f6f" fill-opacity="0.23"/><rect x="57.5" y="15.1" width="3.9" height="1.3" fill="#6f6f6f" fill-opacity="0.17"/><rect x="43.0" y="18.6" width="1.6" height="1.0" fill="#6f6f6f" fill-opacity="0.28"/><rect x="30.4" y="54.4" width="4.1" height="0.7" fill="#6f6f6f" fill-opacity="0.16"/><rect x="8.6" y="54.6" width="3.3" height="1.2" fill="#6f6f6f" fill-opacity="0.36"/><rect x="13.4" y="27.4" width="1.9" height="1.2" fill="#6f6f6f" fill-opacity="0.26"/><rect x="11.1" y="3.7" width="2.9" height="0.8" fill="#6f6f6f" fill-opacity="0.35"/><rect x="37.5" y="3.5" width="2.5" height="1.2" fill="#6f6f6f" fill-opacity="0.38"/><rect x="43.8" y="0.6" width="1.5" height="0.9" fill="#6f6f6f" fill-opacity="0.17"/><rect x="45.8" y="18.1" width="1.5" height="0.8" fill="#6f6f6f" fill-opacity="0.15"/><rect x="10.8" y="42.0" width="3.1" height="1.1" fill="#6f6f6f" fill-opacity="0.20"/><rect x="25.5" y="57.3" width="1.7" height="1.0" fill="#6f6f6f" fill-opacity="0.39"/><rect x="0.1" y="48.5" width="1.7" height="0.9" fill="#6f6f6f" fill-opacity="0.11"/><rect x="36.6" y="6.1" width="3.2" height="0.7" fill="#6f6f6f" fill-opacity="0.39"/><rect x="26.0" y="12.5" width="2.2" height="1.3" fill="#6f6f6f" fill-opacity="0.40"/><rect x="27.5" y="12.1" width="2.9" height="0.6" fill="#6f6f6f" fill-opacity="0.18"/><rect x="35.7" y="27.4" width="1.0" height="1.2" fill="#6f6f6f" fill-opacity="0.41"/><rect x="44.1" y="33.2" width="1.2" height="1.0" fill="#6f6f6f" fill-opacity="0.20"/><rect x="13.1" y="45.7" width="1.0" height="0.7" fill="#6f6f6f" fill-opacity="0.25"/><rect x="1.3" y="30.6" width="1.1" height="1.1" fill="#6f6f6f" fill-opacity="0.20"/><rect x="7.4" y="24.3" width="2.3" height="1.0" fill="#6f6f6f" fill-opacity="0.10"/><rect x="1.8" y="51.5" width="2.1" height="1.2" fill="#6f6f6f" fill-opacity="0.33"/><rect x="37.2" y="39.3" width="2.0" height="1.0" fill="#6f6f6f" fill-opacity="0.36"/><rect x="26.1" y="33.1" width="1.5" height="1.2" fill="#6f6f6f" fill-opacity="0.26"/><rect x="29.2" y="24.3" width="3.0" height="1.3" fill="#6f6f6f" fill-opacity="0.32"/><rect x="18.6" y="48.2" width="2.9" height="1.1" fill="#6f6f6f" fill-opacity="0.35"/><rect x="11.8" y="18.6" width="3.0" height="0.8" fill="#6f6f6f" fill-opacity="0.39"/><rect x="22.4" y="54.4" width="2.4" height="1.1" fill="#6f6f6f" fill-opacity="0.25"/><rect x="42.1" y="36.6" width="2.7" height="1.0" fill="#6f6f6f" fill-opacity="0.27"/><rect x="38.9" y="27.3" width="1.5" height="0.9" fill="#6f6f6f" fill-opacity="0.25"/><rect x="17.0" y="0.0" width="3.0" height="1.3" fill="#6f6f6f" fill-opacity="0.22"/><rect x="59.0" y="9.6" width="1.5" height="0.7" fill="#6f6f6f" fill-opacity="0.13"/><rect x="19.3" y="60.2" width="1.3" height="1.2" fill="#6f6f6f" fill-opacity="0.15"/><rect x="39.1" y="21.3" width="3.6" height="1.0" fill="#6f6f6f" fill-opacity="0.09"/><rect x="42.7" y="51.4" width="3.3" height="0.9" fill="#6f6f6f" fill-opacity="0.22"/><rect x="57.0" y="3.5" width="1.5" height="1.3" fill="#6f6f6f" fill-opacity="0.11"/><rect x="44.7" y="60.7" width="3.2" height="0.8" fill="#6f6f6f" fill-opacity="0.33"/><rect x="5.9" y="60.7" width="2.7" height="0.7" fill="#6f6f6f" fill-opacity="0.39"/><rect x="28.9" y="48.7" width="3.4" height="1.2" fill="#6f6f6f" fill-opacity="0.26"/><rect x="30.9" y="54.6" width="2.0" height="1.2" fill="#6f6f6f" fill-opacity="0.12"/><rect x="28.7" y="18.0" width="1.1" height="0.9" fill="#6f6f6f" fill-opacity="0.20"/><rect x="11.6" y="21.5" width="1.7" height="0.7" fill="#6f6f6f" fill-opacity="0.16"/><rect x="57.4" y="57.4" width="4.2" height="0.9" fill="#6f6f6f" fill-opacity="0.34"/><rect x="39.7" y="18.8" width="3.8" height="1.2" fill="#6f6f6f" fill-opacity="0.23"/><rect x="3.6" y="48.5" width="2.1" height="0.7" fill="#6f6f6f" fill-opacity="0.25"/><rect x="16.2" y="57.2" width="1.7" height="1.1" fill="#6f6f6f" fill-opacity="0.30"/><rect x="29.5" y="54.5" width="3.9" height="0.7" fill="#6f6f6f" fill-opacity="0.28"/><rect x="9.3" y="57.3" width="1.2" height="0.6" fill="#6f6f6f" fill-opacity="0.33"/><rect x="54.2" y="39.6" width="4.2" height="1.1" fill="#6f6f6f" fill-opacity="0.12"/><rect x="1.8" y="54.2" width="1.7" height="0.8" fill="#6f6f6f" fill-opacity="0.24"/><rect x="29.2" y="48.6" width="4.2" height="1.0" fill="#6f6f6f" fill-opacity="0.18"/><rect x="42.6" y="51.4" width="0.9" height="0.7" fill="#6f6f6f" fill-opacity="0.24"/><rect x="17.0" y="33.1" width="1.7" height="1.1" fill="#6f6f6f" fill-opacity="0.34"/><rect x="50.3" y="51.3" width="2.2" height="0.9" fill="#6f6f6f" fill-opacity="0.14"/><rect x="23.5" y="3.3" width="3.5" height="0.8" fill="#6f6f6f" fill-opacity="0.11"/><rect x="53.3" y="60.0" width="2.0" height="0.9" fill="#6f6f6f" fill-opacity="0.35"/><rect x="7.9" y="48.3" width="1.8" height="1.0" fill="#6f6f6f" fill-opacity="0.39"/><rect x="24.9" y="54.8" width="1.0" height="0.8" fill="#6f6f6f" fill-opacity="0.21"/><rect x="6.8" y="3.3" width="0.9" height="0.9" fill="#6f6f6f" fill-opacity="0.41"/><rect x="10.2" y="12.8" width="1.9" height="0.8" fill="#6f6f6f" fill-opacity="0.15"/><rect x="15.5" y="0.6" width="3.9" height="1.1" fill="#6f6f6f" fill-opacity="0.27"/><rect x="55.2" y="54.6" width="3.9" height="1.0" fill="#6f6f6f" fill-opacity="0.13"/><rect x="10.5" y="6.5" width="4.0" height="1.1" fill="#6f6f6f" fill-opacity="0.38"/><rect x="14.6" y="18.4" width="2.5" height="0.9" fill="#6f6f6f" fill-opacity="0.14"/><rect x="28.5" y="51.3" width="2.6" height="1.2" fill="#6f6f6f" fill-opacity="0.33"/><rect x="14.6" y="15.4" width="3.6" height="0.7" fill="#6f6f6f" fill-opacity="0.18"/><rect x="11.1" y="6.0" width="2.9" height="1.0" fill="#6f6f6f" fill-opacity="0.22"/><rect x="13.2" y="3.2" width="2.2" height="1.2" fill="#6f6f6f" fill-opacity="0.33"/><rect x="20.4" y="39.4" width="2.6" height="0.6" fill="#6f6f6f" fill-opacity="0.31"/><rect x="49.1" y="51.5" width="1.8" height="1.0" fill="#6f6f6f" fill-opacity="0.14"/></pattern><pattern id="tw2" patternUnits="userSpaceOnUse" x="0" y="0" width="61.2" height="61.2"><rect width="62" height="62" fill="#f9f9f9"/><rect x="16.3" y="42.5" width="1.5" height="1.1" fill="#6f6f6f" fill-opacity="0.20"/><rect x="4.9" y="42.7" width="2.7" height="1.0" fill="#6f6f6f" fill-opacity="0.10"/><rect x="57.7" y="36.1" width="4.1" height="0.9" fill="#6f6f6f" fill-opacity="0.14"/><rect x="30.9" y="3.1" width="4.0" height="1.0" fill="#6f6f6f" fill-opacity="0.34"/><rect x="54.1" y="36.6" width="4.0" height="0.7" fill="#6f6f6f" fill-opacity="0.16"/><rect x="47.1" y="39.7" width="4.0" height="0.9" fill="#6f6f6f" fill-opacity="0.20"/><rect x="54.1" y="3.2" width="3.9" height="0.6" fill="#6f6f6f" fill-opacity="0.21"/><rect x="14.4" y="45.1" width="3.4" height="1.2" fill="#6f6f6f" fill-opacity="0.41"/><rect x="35.3" y="0.1" width="3.9" height="0.7" fill="#6f6f6f" fill-opacity="0.09"/><rect x="56.0" y="6.1" width="2.6" height="1.0" fill="#6f6f6f" fill-opacity="0.26"/><rect x="24.3" y="18.3" width="3.0" height="0.7" fill="#6f6f6f" fill-opacity="0.28"/><rect x="43.9" y="15.8" width="0.9" height="0.8" fill="#6f6f6f" fill-opacity="0.31"/><rect x="44.9" y="12.6" width="2.8" height="0.6" fill="#6f6f6f" fill-opacity="0.38"/><rect x="14.4" y="36.8" width="2.9" height="0.6" fill="#6f6f6f" fill-opacity="0.21"/><rect x="47.3" y="48.5" width="1.1" height="0.8" fill="#6f6f6f" fill-opacity="0.37"/><rect x="12.8" y="54.3" width="1.5" height="1.3" fill="#6f6f6f" fill-opacity="0.33"/><rect x="20.1" y="36.6" width="2.3" height="0.7" fill="#6f6f6f" fill-opacity="0.23"/><rect x="18.7" y="30.7" width="1.8" height="1.0" fill="#6f6f6f" fill-opacity="0.10"/><rect x="49.3" y="36.6" width="2.5" height="1.1" fill="#6f6f6f" fill-opacity="0.17"/><rect x="14.1" y="6.3" width="4.2" height="0.9" fill="#6f6f6f" fill-opacity="0.21"/><rect x="40.7" y="51.3" width="1.4" height="1.2" fill="#6f6f6f" fill-opacity="0.17"/><rect x="49.4" y="3.8" width="1.7" height="0.7" fill="#6f6f6f" fill-opacity="0.12"/><rect x="3.7" y="12.0" width="1.5" height="0.9" fill="#6f6f6f" fill-opacity="0.29"/><rect x="29.3" y="33.2" width="1.8" height="1.3" fill="#6f6f6f" fill-opacity="0.34"/><rect x="4.0" y="27.6" width="2.4" height="1.1" fill="#6f6f6f" fill-opacity="0.34"/><rect x="49.0" y="36.5" width="3.1" height="0.8" fill="#6f6f6f" fill-opacity="0.28"/><rect x="6.1" y="57.4" width="1.0" height="1.0" fill="#6f6f6f" fill-opacity="0.14"/><rect x="9.9" y="60.7" width="3.6" height="1.2" fill="#6f6f6f" fill-opacity="0.15"/><rect x="34.1" y="45.4" width="2.2" height="0.7" fill="#6f6f6f" fill-opacity="0.25"/><rect x="57.4" y="24.4" width="0.9" height="1.3" fill="#6f6f6f" fill-opacity="0.38"/><rect x="32.1" y="51.2" width="3.0" height="1.2" fill="#6f6f6f" fill-opacity="0.38"/><rect x="18.3" y="54.4" width="3.3" height="1.1" fill="#6f6f6f" fill-opacity="0.12"/><rect x="29.9" y="45.4" width="3.0" height="0.6" fill="#6f6f6f" fill-opacity="0.29"/><rect x="28.0" y="33.2" width="2.1" height="1.3" fill="#6f6f6f" fill-opacity="0.28"/><rect x="2.2" y="45.7" width="2.9" height="1.0" fill="#6f6f6f" fill-opacity="0.31"/><rect x="4.9" y="39.5" width="0.9" height="1.1" fill="#6f6f6f" fill-opacity="0.11"/><rect x="28.7" y="0.3" width="2.7" height="0.6" fill="#6f6f6f" fill-opacity="0.34"/><rect x="19.6" y="30.1" width="2.4" height="0.9" fill="#6f6f6f" fill-opacity="0.13"/><rect x="50.8" y="36.8" width="1.2" height="0.8" fill="#6f6f6f" fill-opacity="0.16"/><rect x="13.5" y="12.2" width="1.2" height="0.7" fill="#6f6f6f" fill-opacity="0.40"/><rect x="45.2" y="6.3" width="2.4" height="1.0" fill="#6f6f6f" fill-opacity="0.21"/><rect x="0.3" y="60.1" width="3.5" height="1.1" fill="#6f6f6f" fill-opacity="0.09"/><rect x="1.4" y="24.8" width="1.2" height="1.2" fill="#6f6f6f" fill-opacity="0.10"/><rect x="19.2" y="24.4" width="3.9" height="1.0" fill="#6f6f6f" fill-opacity="0.31"/><rect x="48.8" y="12.2" width="4.2" height="1.2" fill="#6f6f6f" fill-opacity="0.39"/><rect x="56.1" y="0.7" width="4.2" height="0.7" fill="#6f6f6f" fill-opacity="0.19"/><rect x="19.6" y="21.3" width="2.8" height="1.2" fill="#6f6f6f" fill-opacity="0.38"/><rect x="16.9" y="39.2" width="2.4" height="1.0" fill="#6f6f6f" fill-opacity="0.27"/><rect x="20.1" y="42.3" width="1.0" height="0.7" fill="#6f6f6f" fill-opacity="0.19"/><rect x="43.4" y="0.2" width="3.1" height="0.7" fill="#6f6f6f" fill-opacity="0.29"/><rect x="58.7" y="30.8" width="2.9" height="1.3" fill="#6f6f6f" fill-opacity="0.31"/><rect x="33.1" y="36.2" width="2.0" height="0.6" fill="#6f6f6f" fill-opacity="0.27"/><rect x="44.4" y="45.2" width="3.5" height="1.2" fill="#6f6f6f" fill-opacity="0.25"/><rect x="17.4" y="42.6" width="2.7" height="0.6" fill="#6f6f6f" fill-opacity="0.09"/><rect x="9.1" y="30.0" width="1.4" height="0.7" fill="#6f6f6f" fill-opacity="0.36"/><rect x="24.1" y="36.5" width="3.9" height="1.0" fill="#6f6f6f" fill-opacity="0.13"/><rect x="16.5" y="33.3" width="1.9" height="0.9" fill="#6f6f6f" fill-opacity="0.15"/><rect x="10.9" y="57.6" width="1.4" height="0.8" fill="#6f6f6f" fill-opacity="0.38"/><rect x="52.8" y="24.4" width="3.2" height="1.2" fill="#6f6f6f" fill-opacity="0.34"/><rect x="31.5" y="24.2" width="2.5" height="1.3" fill="#6f6f6f" fill-opacity="0.14"/><rect x="21.2" y="12.6" width="2.9" height="1.0" fill="#6f6f6f" fill-opacity="0.40"/><rect x="32.8" y="0.5" width="4.1" height="1.1" fill="#6f6f6f" fill-opacity="0.24"/><rect x="33.1" y="30.2" width="4.0" height="0.8" fill="#6f6f6f" fill-opacity="0.15"/><rect x="51.6" y="54.3" width="4.3" height="1.3" fill="#6f6f6f" fill-opacity="0.32"/><rect x="22.7" y="45.3" width="3.6" height="1.2" fill="#6f6f6f" fill-opacity="0.23"/><rect x="56.0" y="18.4" width="4.2" height="0.7" fill="#6f6f6f" fill-opacity="0.20"/><rect x="59.1" y="21.6" width="1.5" height="1.0" fill="#6f6f6f" fill-opacity="0.40"/><rect x="13.6" y="51.3" width="4.3" height="0.6" fill="#6f6f6f" fill-opacity="0.32"/><rect x="12.2" y="54.5" width="3.7" height="0.8" fill="#6f6f6f" fill-opacity="0.13"/><rect x="4.7" y="27.3" width="3.7" height="0.8" fill="#6f6f6f" fill-opacity="0.24"/><rect x="51.2" y="3.3" width="3.9" height="1.1" fill="#6f6f6f" fill-opacity="0.30"/><rect x="23.3" y="48.7" width="3.4" height="1.2" fill="#6f6f6f" fill-opacity="0.25"/><rect x="60.9" y="36.0" width="1.3" height="0.9" fill="#6f6f6f" fill-opacity="0.34"/><rect x="31.3" y="60.5" width="2.5" height="0.8" fill="#6f6f6f" fill-opacity="0.21"/><rect x="60.9" y="33.4" width="3.4" height="1.1" fill="#6f6f6f" fill-opacity="0.24"/><rect x="0.9" y="9.2" width="2.4" height="0.7" fill="#6f6f6f" fill-opacity="0.19"/><rect x="40.8" y="21.0" width="2.3" height="0.8" fill="#6f6f6f" fill-opacity="0.40"/><rect x="55.8" y="33.3" width="2.7" height="0.6" fill="#6f6f6f" fill-opacity="0.33"/><rect x="12.8" y="18.1" width="1.7" height="1.2" fill="#6f6f6f" fill-opacity="0.23"/><rect x="43.0" y="33.4" width="1.1" height="1.1" fill="#6f6f6f" fill-opacity="0.32"/><rect x="34.9" y="15.0" width="2.6" height="1.2" fill="#6f6f6f" fill-opacity="0.21"/><rect x="21.3" y="18.7" width="2.6" height="1.2" fill="#6f6f6f" fill-opacity="0.10"/><rect x="27.9" y="51.3" width="1.8" height="1.2" fill="#6f6f6f" fill-opacity="0.26"/><rect x="21.9" y="9.0" width="3.3" height="1.1" fill="#6f6f6f" fill-opacity="0.22"/><rect x="4.0" y="33.4" width="4.1" height="0.9" fill="#6f6f6f" fill-opacity="0.40"/><rect x="7.2" y="15.1" width="3.3" height="0.8" fill="#6f6f6f" fill-opacity="0.25"/><rect x="23.8" y="27.3" width="4.1" height="1.3" fill="#6f6f6f" fill-opacity="0.41"/><rect x="1.8" y="45.1" width="1.8" height="0.6" fill="#6f6f6f" fill-opacity="0.12"/><rect x="26.9" y="54.0" width="1.2" height="1.0" fill="#6f6f6f" fill-opacity="0.32"/><rect x="4.5" y="15.8" width="2.6" height="0.8" fill="#6f6f6f" fill-opacity="0.37"/><rect x="12.1" y="39.7" width="2.5" height="1.1" fill="#6f6f6f" fill-opacity="0.24"/><rect x="19.2" y="48.5" width="3.2" height="1.1" fill="#6f6f6f" fill-opacity="0.24"/><rect x="43.3" y="54.4" width="3.7" height="0.7" fill="#6f6f6f" fill-opacity="0.34"/><rect x="29.2" y="30.1" width="2.9" height="1.0" fill="#6f6f6f" fill-opacity="0.13"/><rect x="25.2" y="60.4" width="2.5" height="0.7" fill="#6f6f6f" fill-opacity="0.26"/><rect x="35.6" y="27.4" width="3.8" height="1.0" fill="#6f6f6f" fill-opacity="0.17"/><rect x="0.4" y="51.1" width="3.9" height="1.0" fill="#6f6f6f" fill-opacity="0.23"/><rect x="60.9" y="48.8" width="1.9" height="0.7" fill="#6f6f6f" fill-opacity="0.32"/><rect x="19.4" y="30.6" width="2.5" height="1.2" fill="#6f6f6f" fill-opacity="0.19"/><rect x="58.6" y="27.7" width="1.7" height="1.2" fill="#6f6f6f" fill-opacity="0.29"/><rect x="25.2" y="45.1" width="2.4" height="1.2" fill="#6f6f6f" fill-opacity="0.24"/><rect x="10.0" y="3.8" width="3.2" height="0.7" fill="#6f6f6f" fill-opacity="0.11"/><rect x="52.8" y="6.6" width="1.8" height="0.9" fill="#6f6f6f" fill-opacity="0.18"/><rect x="10.4" y="3.4" width="3.7" height="0.8" fill="#6f6f6f" fill-opacity="0.42"/><rect x="49.7" y="9.6" width="1.7" height="0.9" fill="#6f6f6f" fill-opacity="0.16"/><rect x="32.8" y="18.4" width="2.2" height="1.1" fill="#6f6f6f" fill-opacity="0.17"/><rect x="5.4" y="21.3" width="1.7" height="0.7" fill="#6f6f6f" fill-opacity="0.33"/><rect x="23.3" y="0.5" width="2.4" height="0.7" fill="#6f6f6f" fill-opacity="0.12"/><rect x="33.3" y="57.3" width="3.7" height="0.7" fill="#6f6f6f" fill-opacity="0.20"/><rect x="56.8" y="21.3" width="1.1" height="0.7" fill="#6f6f6f" fill-opacity="0.21"/><rect x="39.4" y="42.8" width="3.2" height="1.0" fill="#6f6f6f" fill-opacity="0.30"/><rect x="15.7" y="0.5" width="2.8" height="0.7" fill="#6f6f6f" fill-opacity="0.11"/><rect x="9.8" y="18.2" width="3.7" height="0.7" fill="#6f6f6f" fill-opacity="0.16"/><rect x="1.1" y="12.6" width="3.2" height="1.0" fill="#6f6f6f" fill-opacity="0.29"/><rect x="43.6" y="36.1" width="3.2" height="1.0" fill="#6f6f6f" fill-opacity="0.24"/><rect x="6.6" y="39.1" width="2.6" height="0.7" fill="#6f6f6f" fill-opacity="0.26"/><rect x="54.3" y="0.3" width="2.8" height="1.1" fill="#6f6f6f" fill-opacity="0.30"/><rect x="29.3" y="0.2" width="2.8" height="0.7" fill="#6f6f6f" fill-opacity="0.31"/><rect x="16.9" y="33.8" width="1.4" height="0.8" fill="#6f6f6f" fill-opacity="0.09"/><rect x="11.7" y="21.7" width="3.5" height="1.1" fill="#6f6f6f" fill-opacity="0.33"/><rect x="43.5" y="0.7" width="1.0" height="1.1" fill="#6f6f6f" fill-opacity="0.15"/><rect x="4.4" y="60.2" width="2.7" height="1.2" fill="#6f6f6f" fill-opacity="0.31"/><rect x="5.7" y="48.2" width="1.6" height="0.6" fill="#6f6f6f" fill-opacity="0.36"/><rect x="40.4" y="15.6" width="2.9" height="0.7" fill="#6f6f6f" fill-opacity="0.39"/><rect x="15.7" y="24.6" width="1.0" height="0.9" fill="#6f6f6f" fill-opacity="0.11"/><rect x="42.5" y="12.6" width="4.1" height="1.2" fill="#6f6f6f" fill-opacity="0.27"/><rect x="3.2" y="15.0" width="0.8" height="1.1" fill="#6f6f6f" fill-opacity="0.32"/><rect x="8.7" y="12.2" width="3.4" height="1.1" fill="#6f6f6f" fill-opacity="0.26"/><rect x="36.6" y="30.8" width="2.9" height="0.8" fill="#6f6f6f" fill-opacity="0.24"/><rect x="28.7" y="24.4" width="1.5" height="0.9" fill="#6f6f6f" fill-opacity="0.24"/><rect x="11.4" y="39.3" width="2.4" height="0.7" fill="#6f6f6f" fill-opacity="0.10"/><rect x="4.3" y="6.7" width="1.7" height="1.2" fill="#6f6f6f" fill-opacity="0.12"/><rect x="13.0" y="24.4" width="3.5" height="0.9" fill="#6f6f6f" fill-opacity="0.18"/><rect x="31.4" y="36.7" width="1.9" height="0.7" fill="#6f6f6f" fill-opacity="0.11"/><rect x="20.3" y="3.7" width="3.9" height="1.2" fill="#6f6f6f" fill-opacity="0.35"/><rect x="25.3" y="42.8" width="2.1" height="1.2" fill="#6f6f6f" fill-opacity="0.31"/><rect x="44.4" y="30.1" width="2.3" height="0.6" fill="#6f6f6f" fill-opacity="0.10"/><rect x="1.6" y="24.4" width="4.3" height="1.3" fill="#6f6f6f" fill-opacity="0.10"/><rect x="3.4" y="39.1" width="2.2" height="0.9" fill="#6f6f6f" fill-opacity="0.11"/><rect x="15.1" y="48.2" width="3.3" height="1.2" fill="#6f6f6f" fill-opacity="0.22"/><rect x="26.1" y="3.6" width="2.0" height="1.0" fill="#6f6f6f" fill-opacity="0.33"/><rect x="57.4" y="60.6" width="2.3" height="1.1" fill="#6f6f6f" fill-opacity="0.25"/><rect x="7.4" y="30.2" width="2.1" height="0.8" fill="#6f6f6f" fill-opacity="0.21"/><rect x="25.7" y="60.1" width="3.1" height="1.3" fill="#6f6f6f" fill-opacity="0.15"/><rect x="15.0" y="33.7" width="2.8" height="0.9" fill="#6f6f6f" fill-opacity="0.39"/><rect x="36.2" y="27.1" width="1.9" height="1.0" fill="#6f6f6f" fill-opacity="0.15"/><rect x="19.7" y="18.4" width="2.9" height="1.0" fill="#6f6f6f" fill-opacity="0.15"/><rect x="3.5" y="3.1" width="2.4" height="1.2" fill="#6f6f6f" fill-opacity="0.39"/><rect x="8.4" y="57.2" width="2.0" height="0.8" fill="#6f6f6f" fill-opacity="0.34"/><rect x="10.2" y="33.7" width="1.2" height="0.7" fill="#6f6f6f" fill-opacity="0.09"/><rect x="46.4" y="18.4" width="3.1" height="1.1" fill="#6f6f6f" fill-opacity="0.22"/><rect x="6.1" y="3.2" width="1.0" height="1.2" fill="#6f6f6f" fill-opacity="0.35"/><rect x="13.8" y="48.6" width="2.1" height="0.8" fill="#6f6f6f" fill-opacity="0.37"/><rect x="4.9" y="0.3" width="3.8" height="1.0" fill="#6f6f6f" fill-opacity="0.41"/><rect x="13.4" y="9.1" width="2.6" height="0.6" fill="#6f6f6f" fill-opacity="0.36"/><rect x="39.1" y="42.6" width="2.4" height="1.3" fill="#6f6f6f" fill-opacity="0.37"/><rect x="31.4" y="36.2" width="2.8" height="1.1" fill="#6f6f6f" fill-opacity="0.27"/><rect x="32.6" y="54.0" width="2.6" height="1.0" fill="#6f6f6f" fill-opacity="0.12"/><rect x="2.8" y="30.1" width="1.0" height="1.3" fill="#6f6f6f" fill-opacity="0.14"/><rect x="36.9" y="51.0" width="1.6" height="1.0" fill="#6f6f6f" fill-opacity="0.33"/><rect x="43.9" y="51.8" width="1.6" height="0.7" fill="#6f6f6f" fill-opacity="0.15"/><rect x="1.6" y="6.6" width="1.5" height="1.0" fill="#6f6f6f" fill-opacity="0.19"/><rect x="5.6" y="6.0" width="4.1" height="0.7" fill="#6f6f6f" fill-opacity="0.17"/><rect x="15.0" y="51.6" width="3.4" height="1.2" fill="#6f6f6f" fill-opacity="0.09"/><rect x="23.0" y="57.1" width="1.4" height="0.7" fill="#6f6f6f" fill-opacity="0.39"/><rect x="40.1" y="54.1" width="3.0" height="0.7" fill="#6f6f6f" fill-opacity="0.36"/><rect x="28.8" y="30.1" width="2.9" height="0.6" fill="#6f6f6f" fill-opacity="0.26"/><rect x="30.2" y="27.3" width="4.1" height="1.2" fill="#6f6f6f" fill-opacity="0.40"/><rect x="6.5" y="6.3" width="3.2" height="1.2" fill="#6f6f6f" fill-opacity="0.19"/><rect x="9.4" y="54.1" width="2.4" height="0.8" fill="#6f6f6f" fill-opacity="0.16"/><rect x="1.3" y="6.2" width="4.2" height="0.7" fill="#6f6f6f" fill-opacity="0.35"/><rect x="37.2" y="0.3" width="1.6" height="0.8" fill="#6f6f6f" fill-opacity="0.38"/><rect x="27.9" y="6.6" width="0.9" height="1.1" fill="#6f6f6f" fill-opacity="0.41"/><rect x="41.9" y="30.5" width="1.1" height="1.3" fill="#6f6f6f" fill-opacity="0.10"/><rect x="41.2" y="45.6" width="2.3" height="1.0" fill="#6f6f6f" fill-opacity="0.40"/><rect x="21.7" y="45.4" width="1.9" height="1.1" fill="#6f6f6f" fill-opacity="0.32"/><rect x="30.5" y="12.6" width="2.4" height="0.7" fill="#6f6f6f" fill-opacity="0.30"/><rect x="56.7" y="39.0" width="4.0" height="0.7" fill="#6f6f6f" fill-opacity="0.34"/><rect x="44.4" y="0.7" width="3.6" height="0.7" fill="#6f6f6f" fill-opacity="0.18"/><rect x="31.3" y="51.4" width="2.3" height="1.1" fill="#6f6f6f" fill-opacity="0.37"/><rect x="35.1" y="39.2" width="3.1" height="0.7" fill="#6f6f6f" fill-opacity="0.10"/><rect x="49.3" y="48.7" width="1.2" height="0.8" fill="#6f6f6f" fill-opacity="0.24"/><rect x="41.1" y="3.6" width="1.7" height="0.7" fill="#6f6f6f" fill-opacity="0.29"/><rect x="39.8" y="9.2" width="3.9" height="0.6" fill="#6f6f6f" fill-opacity="0.11"/><rect x="48.4" y="6.6" width="1.5" height="1.2" fill="#6f6f6f" fill-opacity="0.15"/><rect x="7.6" y="30.5" width="3.7" height="0.8" fill="#6f6f6f" fill-opacity="0.36"/><rect x="44.9" y="48.5" width="4.2" height="1.1" fill="#6f6f6f" fill-opacity="0.22"/><rect x="13.6" y="51.6" width="4.2" height="0.8" fill="#6f6f6f" fill-opacity="0.13"/><rect x="47.9" y="39.7" width="3.4" height="0.7" fill="#6f6f6f" fill-opacity="0.24"/><rect x="35.4" y="9.0" width="2.8" height="0.8" fill="#6f6f6f" fill-opacity="0.20"/><rect x="9.2" y="24.5" width="3.1" height="0.6" fill="#6f6f6f" fill-opacity="0.16"/><rect x="46.0" y="3.3" width="3.4" height="1.0" fill="#6f6f6f" fill-opacity="0.24"/><rect x="15.0" y="21.1" width="3.1" height="1.0" fill="#6f6f6f" fill-opacity="0.35"/><rect x="27.6" y="57.5" width="4.2" height="1.1" fill="#6f6f6f" fill-opacity="0.11"/><rect x="25.9" y="57.3" width="3.9" height="0.9" fill="#6f6f6f" fill-opacity="0.22"/><rect x="24.1" y="48.7" width="3.2" height="1.3" fill="#6f6f6f" fill-opacity="0.11"/><rect x="26.9" y="27.6" width="0.9" height="0.9" fill="#6f6f6f" fill-opacity="0.14"/><rect x="41.1" y="18.3" width="3.3" height="1.2" fill="#6f6f6f" fill-opacity="0.27"/><rect x="58.5" y="51.3" width="1.5" height="0.9" fill="#6f6f6f" fill-opacity="0.16"/><rect x="55.5" y="57.1" width="3.1" height="1.2" fill="#6f6f6f" fill-opacity="0.12"/><rect x="24.3" y="51.7" width="2.3" height="1.0" fill="#6f6f6f" fill-opacity="0.40"/><rect x="16.9" y="18.3" width="0.8" height="1.0" fill="#6f6f6f" fill-opacity="0.11"/><rect x="11.1" y="24.6" width="1.7" height="0.8" fill="#6f6f6f" fill-opacity="0.12"/><rect x="31.3" y="51.4" width="1.5" height="0.8" fill="#6f6f6f" fill-opacity="0.23"/><rect x="37.1" y="3.6" width="4.3" height="1.0" fill="#6f6f6f" fill-opacity="0.20"/><rect x="57.1" y="60.1" width="3.7" height="1.2" fill="#6f6f6f" fill-opacity="0.10"/><rect x="45.9" y="27.5" width="1.2" height="1.1" fill="#6f6f6f" fill-opacity="0.22"/><rect x="25.6" y="18.2" width="3.0" height="1.2" fill="#6f6f6f" fill-opacity="0.38"/><rect x="32.7" y="48.3" width="1.0" height="1.0" fill="#6f6f6f" fill-opacity="0.17"/><rect x="40.2" y="60.6" width="1.6" height="1.1" fill="#6f6f6f" fill-opacity="0.25"/><rect x="49.6" y="27.3" width="3.1" height="1.1" fill="#6f6f6f" fill-opacity="0.39"/><rect x="24.0" y="39.4" width="2.8" height="0.7" fill="#6f6f6f" fill-opacity="0.33"/><rect x="28.5" y="9.2" width="2.4" height="1.0" fill="#6f6f6f" fill-opacity="0.09"/><rect x="23.3" y="57.5" width="1.3" height="1.0" fill="#6f6f6f" fill-opacity="0.26"/><rect x="1.8" y="6.0" width="2.2" height="0.8" fill="#6f6f6f" fill-opacity="0.32"/><rect x="60.2" y="3.7" width="4.2" height="0.8" fill="#6f6f6f" fill-opacity="0.27"/><rect x="50.1" y="12.6" width="0.8" height="0.8" fill="#6f6f6f" fill-opacity="0.10"/><rect x="37.7" y="39.2" width="4.3" height="1.1" fill="#6f6f6f" fill-opacity="0.40"/><rect x="49.8" y="24.0" width="3.9" height="1.1" fill="#6f6f6f" fill-opacity="0.12"/><rect x="45.3" y="51.4" width="1.9" height="1.2" fill="#6f6f6f" fill-opacity="0.29"/><rect x="52.6" y="24.2" width="1.4" height="0.7" fill="#6f6f6f" fill-opacity="0.21"/><rect x="45.4" y="42.4" width="2.6" height="0.6" fill="#6f6f6f" fill-opacity="0.12"/><rect x="44.1" y="45.3" width="1.9" height="0.7" fill="#6f6f6f" fill-opacity="0.32"/><rect x="40.5" y="57.3" width="1.1" height="0.7" fill="#6f6f6f" fill-opacity="0.22"/><rect x="23.6" y="51.6" width="1.7" height="1.0" fill="#6f6f6f" fill-opacity="0.23"/><rect x="28.7" y="21.6" width="2.7" height="1.0" fill="#6f6f6f" fill-opacity="0.20"/><rect x="47.6" y="42.8" width="2.7" height="1.0" fill="#6f6f6f" fill-opacity="0.15"/><rect x="35.6" y="36.2" width="3.7" height="0.7" fill="#6f6f6f" fill-opacity="0.39"/><rect x="28.8" y="21.7" width="3.2" height="0.8" fill="#6f6f6f" fill-opacity="0.42"/><rect x="46.1" y="21.5" width="4.0" height="1.3" fill="#6f6f6f" fill-opacity="0.28"/><rect x="10.7" y="0.7" width="4.2" height="0.9" fill="#6f6f6f" fill-opacity="0.38"/><rect x="18.6" y="15.4" width="1.7" height="1.0" fill="#6f6f6f" fill-opacity="0.34"/><rect x="22.9" y="45.3" width="2.0" height="0.8" fill="#6f6f6f" fill-opacity="0.34"/><rect x="24.2" y="3.5" width="3.5" height="0.9" fill="#6f6f6f" fill-opacity="0.31"/><rect x="44.4" y="0.4" width="1.4" height="1.0" fill="#6f6f6f" fill-opacity="0.17"/><rect x="46.8" y="0.1" width="1.1" height="1.0" fill="#6f6f6f" fill-opacity="0.15"/><rect x="31.3" y="30.6" width="2.8" height="1.2" fill="#6f6f6f" fill-opacity="0.16"/><rect x="44.0" y="36.5" width="4.0" height="0.7" fill="#6f6f6f" fill-opacity="0.22"/><rect x="6.2" y="51.1" width="1.6" height="0.8" fill="#6f6f6f" fill-opacity="0.30"/><rect x="17.1" y="30.5" width="3.5" height="0.8" fill="#6f6f6f" fill-opacity="0.28"/><rect x="47.6" y="12.4" width="3.1" height="1.0" fill="#6f6f6f" fill-opacity="0.09"/><rect x="37.4" y="42.3" width="2.8" height="1.0" fill="#6f6f6f" fill-opacity="0.39"/><rect x="50.1" y="18.1" width="3.8" height="0.6" fill="#6f6f6f" fill-opacity="0.27"/><rect x="9.4" y="54.3" width="4.1" height="0.8" fill="#6f6f6f" fill-opacity="0.42"/><rect x="5.1" y="30.6" width="0.9" height="1.1" fill="#6f6f6f" fill-opacity="0.16"/><rect x="14.0" y="9.0" width="2.1" height="0.7" fill="#6f6f6f" fill-opacity="0.40"/><rect x="28.8" y="48.0" width="3.0" height="0.7" fill="#6f6f6f" fill-opacity="0.29"/><rect x="52.6" y="30.6" width="3.8" height="0.9" fill="#6f6f6f" fill-opacity="0.16"/><rect x="48.0" y="6.8" width="2.5" height="1.2" fill="#6f6f6f" fill-opacity="0.17"/><rect x="57.8" y="0.7" width="4.1" height="1.2" fill="#6f6f6f" fill-opacity="0.33"/><rect x="13.5" y="45.1" width="2.8" height="1.2" fill="#6f6f6f" fill-opacity="0.20"/><rect x="43.5" y="54.7" width="1.6" height="0.8" fill="#6f6f6f" fill-opacity="0.40"/><rect x="32.5" y="0.7" width="2.8" height="0.9" fill="#6f6f6f" fill-opacity="0.32"/><rect x="24.8" y="24.1" width="2.6" height="0.8" fill="#6f6f6f" fill-opacity="0.37"/><rect x="39.6" y="45.6" width="0.9" height="0.7" fill="#6f6f6f" fill-opacity="0.15"/><rect x="53.0" y="21.1" width="1.9" height="1.0" fill="#6f6f6f" fill-opacity="0.26"/><rect x="11.4" y="60.7" width="3.1" height="1.0" fill="#6f6f6f" fill-opacity="0.35"/><rect x="34.1" y="48.2" width="4.1" height="0.9" fill="#6f6f6f" fill-opacity="0.15"/><rect x="42.1" y="60.7" width="1.4" height="0.8" fill="#6f6f6f" fill-opacity="0.39"/><rect x="43.1" y="3.8" width="4.3" height="1.2" fill="#6f6f6f" fill-opacity="0.41"/><rect x="26.7" y="15.4" width="1.7" height="0.8" fill="#6f6f6f" fill-opacity="0.32"/><rect x="1.6" y="24.6" width="3.7" height="0.7" fill="#6f6f6f" fill-opacity="0.11"/><rect x="8.3" y="45.2" width="1.1" height="1.0" fill="#6f6f6f" fill-opacity="0.39"/><rect x="52.0" y="33.3" width="1.3" height="0.7" fill="#6f6f6f" fill-opacity="0.28"/><rect x="55.4" y="51.4" width="2.4" height="1.3" fill="#6f6f6f" fill-opacity="0.36"/><rect x="24.3" y="21.5" width="2.1" height="0.8" fill="#6f6f6f" fill-opacity="0.31"/><rect x="29.9" y="33.2" width="1.8" height="0.8" fill="#6f6f6f" fill-opacity="0.15"/><rect x="54.4" y="42.7" width="1.6" height="1.0" fill="#6f6f6f" fill-opacity="0.29"/><rect x="18.7" y="42.3" width="1.0" height="1.2" fill="#6f6f6f" fill-opacity="0.34"/><rect x="13.5" y="0.7" width="1.4" height="1.0" fill="#6f6f6f" fill-opacity="0.42"/><rect x="29.4" y="27.5" width="3.0" height="0.6" fill="#6f6f6f" fill-opacity="0.24"/><rect x="39.1" y="36.4" width="3.8" height="1.2" fill="#6f6f6f" fill-opacity="0.35"/><rect x="54.1" y="57.5" width="2.1" height="1.1" fill="#6f6f6f" fill-opacity="0.25"/><rect x="37.2" y="39.3" width="4.2" height="1.2" fill="#6f6f6f" fill-opacity="0.32"/><rect x="51.4" y="15.8" width="4.3" height="0.9" fill="#6f6f6f" fill-opacity="0.42"/><rect x="46.8" y="51.5" width="3.9" height="0.6" fill="#6f6f6f" fill-opacity="0.38"/><rect x="43.3" y="27.2" width="1.4" height="1.2" fill="#6f6f6f" fill-opacity="0.36"/><rect x="9.5" y="42.2" width="1.4" height="0.8" fill="#6f6f6f" fill-opacity="0.15"/><rect x="2.4" y="57.0" width="4.0" height="1.0" fill="#6f6f6f" fill-opacity="0.25"/><rect x="32.0" y="15.7" width="3.8" height="1.2" fill="#6f6f6f" fill-opacity="0.23"/><rect x="19.9" y="36.1" width="1.5" height="1.2" fill="#6f6f6f" fill-opacity="0.24"/><rect x="44.6" y="0.6" width="4.0" height="1.2" fill="#6f6f6f" fill-opacity="0.12"/><rect x="15.0" y="27.1" width="3.3" height="1.0" fill="#6f6f6f" fill-opacity="0.22"/><rect x="13.5" y="12.5" width="0.9" height="0.9" fill="#6f6f6f" fill-opacity="0.18"/><rect x="40.3" y="57.3" width="2.8" height="0.9" fill="#6f6f6f" fill-opacity="0.21"/><rect x="28.3" y="27.7" width="3.3" height="1.3" fill="#6f6f6f" fill-opacity="0.16"/><rect x="32.5" y="3.3" width="1.2" height="0.7" fill="#6f6f6f" fill-opacity="0.20"/><rect x="36.3" y="36.1" width="2.5" height="0.9" fill="#6f6f6f" fill-opacity="0.25"/><rect x="41.2" y="51.3" width="1.4" height="0.8" fill="#6f6f6f" fill-opacity="0.20"/><rect x="42.2" y="33.5" width="2.6" height="1.1" fill="#6f6f6f" fill-opacity="0.24"/><rect x="43.9" y="0.3" width="3.9" height="1.1" fill="#6f6f6f" fill-opacity="0.30"/><rect x="40.2" y="18.0" width="1.0" height="0.7" fill="#6f6f6f" fill-opacity="0.23"/><rect x="31.0" y="6.3" width="3.0" height="0.6" fill="#6f6f6f" fill-opacity="0.22"/><rect x="50.5" y="45.7" width="3.3" height="0.7" fill="#6f6f6f" fill-opacity="0.26"/><rect x="39.1" y="60.6" width="3.5" height="1.1" fill="#6f6f6f" fill-opacity="0.22"/><rect x="37.9" y="60.2" width="2.5" height="1.1" fill="#6f6f6f" fill-opacity="0.23"/><rect x="10.4" y="51.5" width="3.5" height="0.8" fill="#6f6f6f" fill-opacity="0.20"/><rect x="17.3" y="18.2" width="3.1" height="0.7" fill="#6f6f6f" fill-opacity="0.25"/><rect x="42.2" y="24.7" width="3.7" height="0.8" fill="#6f6f6f" fill-opacity="0.15"/><rect x="45.4" y="12.3" width="1.8" height="0.7" fill="#6f6f6f" fill-opacity="0.20"/><rect x="27.3" y="3.4" width="4.1" height="0.6" fill="#6f6f6f" fill-opacity="0.28"/><rect x="19.2" y="9.8" width="1.9" height="1.1" fill="#6f6f6f" fill-opacity="0.24"/><rect x="34.4" y="3.2" width="2.1" height="1.2" fill="#6f6f6f" fill-opacity="0.39"/><rect x="25.0" y="30.2" width="2.2" height="0.9" fill="#6f6f6f" fill-opacity="0.17"/><rect x="29.4" y="33.4" width="1.0" height="1.0" fill="#6f6f6f" fill-opacity="0.16"/><rect x="56.5" y="12.5" width="4.1" height="1.2" fill="#6f6f6f" fill-opacity="0.38"/><rect x="15.8" y="15.3" width="2.5" height="1.0" fill="#6f6f6f" fill-opacity="0.38"/><rect x="42.1" y="48.6" width="1.9" height="1.1" fill="#6f6f6f" fill-opacity="0.16"/><rect x="34.4" y="42.3" width="3.3" height="1.2" fill="#6f6f6f" fill-opacity="0.23"/><rect x="38.4" y="6.1" width="3.0" height="0.6" fill="#6f6f6f" fill-opacity="0.20"/><rect x="6.6" y="27.5" width="1.0" height="0.6" fill="#6f6f6f" fill-opacity="0.23"/><rect x="14.9" y="33.1" width="1.7" height="0.7" fill="#6f6f6f" fill-opacity="0.31"/><rect x="3.1" y="3.7" width="3.5" height="1.2" fill="#6f6f6f" fill-opacity="0.32"/><rect x="7.4" y="0.8" width="3.5" height="0.8" fill="#6f6f6f" fill-opacity="0.34"/><rect x="41.0" y="33.7" width="2.6" height="0.7" fill="#6f6f6f" fill-opacity="0.37"/><rect x="23.4" y="48.2" width="0.8" height="1.0" fill="#6f6f6f" fill-opacity="0.38"/><rect x="26.8" y="6.1" width="2.5" height="1.1" fill="#6f6f6f" fill-opacity="0.30"/><rect x="51.7" y="36.8" width="1.8" height="0.9" fill="#6f6f6f" fill-opacity="0.10"/><rect x="13.3" y="48.2" width="3.4" height="0.9" fill="#6f6f6f" fill-opacity="0.34"/><rect x="2.1" y="42.2" width="1.2" height="1.3" fill="#6f6f6f" fill-opacity="0.17"/><rect x="40.9" y="60.1" width="3.0" height="1.3" fill="#6f6f6f" fill-opacity="0.37"/><rect x="0.6" y="51.2" width="1.0" height="1.3" fill="#6f6f6f" fill-opacity="0.22"/><rect x="60.9" y="48.4" width="2.9" height="1.0" fill="#6f6f6f" fill-opacity="0.13"/><rect x="7.7" y="45.2" width="1.7" height="0.8" fill="#6f6f6f" fill-opacity="0.13"/><rect x="39.6" y="57.1" width="1.1" height="0.8" fill="#6f6f6f" fill-opacity="0.27"/><rect x="51.3" y="48.4" width="1.7" height="1.2" fill="#6f6f6f" fill-opacity="0.32"/><rect x="48.8" y="36.5" width="3.7" height="0.7" fill="#6f6f6f" fill-opacity="0.40"/><rect x="60.4" y="36.1" width="0.8" height="1.1" fill="#6f6f6f" fill-opacity="0.41"/><rect x="7.1" y="54.4" width="3.3" height="1.0" fill="#6f6f6f" fill-opacity="0.18"/><rect x="58.4" y="48.5" width="3.1" height="1.1" fill="#6f6f6f" fill-opacity="0.29"/><rect x="30.4" y="54.5" width="2.2" height="0.9" fill="#6f6f6f" fill-opacity="0.10"/><rect x="6.0" y="30.7" width="1.5" height="1.2" fill="#6f6f6f" fill-opacity="0.09"/><rect x="26.3" y="45.8" width="3.5" height="1.0" fill="#6f6f6f" fill-opacity="0.38"/><rect x="14.2" y="51.2" width="1.7" height="0.8" fill="#6f6f6f" fill-opacity="0.33"/><rect x="5.9" y="21.7" width="4.3" height="1.1" fill="#6f6f6f" fill-opacity="0.34"/><rect x="0.0" y="27.2" width="3.5" height="1.0" fill="#6f6f6f" fill-opacity="0.14"/><rect x="9.9" y="0.2" width="3.6" height="1.1" fill="#6f6f6f" fill-opacity="0.14"/><rect x="23.0" y="27.7" width="4.2" height="0.7" fill="#6f6f6f" fill-opacity="0.24"/><rect x="10.0" y="42.2" width="3.3" height="1.0" fill="#6f6f6f" fill-opacity="0.26"/><rect x="28.6" y="51.3" width="1.8" height="0.7" fill="#6f6f6f" fill-opacity="0.42"/><rect x="26.1" y="9.3" width="2.6" height="1.1" fill="#6f6f6f" fill-opacity="0.21"/><rect x="51.8" y="48.4" width="3.1" height="0.9" fill="#6f6f6f" fill-opacity="0.16"/><rect x="24.3" y="57.5" width="1.2" height="0.7" fill="#6f6f6f" fill-opacity="0.30"/><rect x="33.7" y="18.7" width="1.1" height="1.1" fill="#6f6f6f" fill-opacity="0.38"/><rect x="23.2" y="6.7" width="3.6" height="1.0" fill="#6f6f6f" fill-opacity="0.11"/><rect x="2.2" y="24.7" width="1.3" height="0.8" fill="#6f6f6f" fill-opacity="0.24"/><rect x="14.7" y="48.8" width="1.7" height="1.3" fill="#6f6f6f" fill-opacity="0.42"/><rect x="30.5" y="24.3" width="3.2" height="1.0" fill="#6f6f6f" fill-opacity="0.38"/><rect x="46.0" y="57.6" width="4.1" height="0.7" fill="#6f6f6f" fill-opacity="0.28"/><rect x="36.6" y="9.6" width="2.3" height="1.2" fill="#6f6f6f" fill-opacity="0.38"/><rect x="15.2" y="15.2" width="0.9" height="0.8" fill="#6f6f6f" fill-opacity="0.18"/><rect x="10.5" y="36.8" width="2.7" height="0.7" fill="#6f6f6f" fill-opacity="0.11"/><rect x="36.9" y="0.6" width="3.8" height="1.2" fill="#6f6f6f" fill-opacity="0.23"/><rect x="2.6" y="42.0" width="3.1" height="1.1" fill="#6f6f6f" fill-opacity="0.29"/><rect x="4.1" y="54.3" width="3.1" height="0.9" fill="#6f6f6f" fill-opacity="0.24"/><rect x="23.6" y="24.3" width="0.9" height="0.9" fill="#6f6f6f" fill-opacity="0.10"/><rect x="47.4" y="39.1" width="2.9" height="1.0" fill="#6f6f6f" fill-opacity="0.16"/><rect x="54.1" y="42.2" width="1.3" height="1.0" fill="#6f6f6f" fill-opacity="0.40"/><rect x="6.3" y="54.5" width="4.1" height="1.0" fill="#6f6f6f" fill-opacity="0.12"/><rect x="42.1" y="51.8" width="2.5" height="0.8" fill="#6f6f6f" fill-opacity="0.39"/><rect x="29.0" y="27.7" width="1.0" height="1.1" fill="#6f6f6f" fill-opacity="0.22"/><rect x="31.4" y="42.7" width="3.3" height="1.2" fill="#6f6f6f" fill-opacity="0.21"/><rect x="38.8" y="6.4" width="2.0" height="1.0" fill="#6f6f6f" fill-opacity="0.30"/><rect x="49.7" y="45.5" width="2.1" height="1.2" fill="#6f6f6f" fill-opacity="0.31"/><rect x="23.6" y="9.3" width="3.4" height="0.7" fill="#6f6f6f" fill-opacity="0.18"/><rect x="1.4" y="39.0" width="3.3" height="1.1" fill="#6f6f6f" fill-opacity="0.37"/><rect x="51.9" y="51.6" width="3.8" height="1.3" fill="#6f6f6f" fill-opacity="0.39"/><rect x="25.9" y="42.3" width="3.3" height="1.2" fill="#6f6f6f" fill-opacity="0.26"/><rect x="60.4" y="12.3" width="1.0" height="0.9" fill="#6f6f6f" fill-opacity="0.14"/><rect x="54.9" y="27.1" width="1.9" height="1.2" fill="#6f6f6f" fill-opacity="0.23"/><rect x="10.3" y="51.4" width="2.1" height="0.9" fill="#6f6f6f" fill-opacity="0.35"/><rect x="57.1" y="6.6" width="2.6" height="0.8" fill="#6f6f6f" fill-opacity="0.09"/><rect x="48.9" y="15.2" width="1.6" height="0.8" fill="#6f6f6f" fill-opacity="0.31"/><rect x="11.7" y="54.1" width="2.9" height="1.0" fill="#6f6f6f" fill-opacity="0.37"/><rect x="5.7" y="48.0" width="1.4" height="1.2" fill="#6f6f6f" fill-opacity="0.40"/><rect x="19.6" y="45.0" width="3.5" height="0.8" fill="#6f6f6f" fill-opacity="0.39"/><rect x="17.3" y="36.5" width="2.0" height="1.2" fill="#6f6f6f" fill-opacity="0.34"/><rect x="37.1" y="48.6" width="1.2" height="1.0" fill="#6f6f6f" fill-opacity="0.18"/><rect x="54.9" y="27.8" width="2.4" height="1.1" fill="#6f6f6f" fill-opacity="0.32"/><rect x="53.8" y="12.4" width="3.5" height="1.3" fill="#6f6f6f" fill-opacity="0.33"/><rect x="61.0" y="6.5" width="1.6" height="1.1" fill="#6f6f6f" fill-opacity="0.36"/><rect x="35.4" y="54.7" width="1.8" height="0.7" fill="#6f6f6f" fill-opacity="0.27"/><rect x="52.1" y="3.1" width="4.0" height="0.8" fill="#6f6f6f" fill-opacity="0.25"/><rect x="56.9" y="15.6" width="3.7" height="1.1" fill="#6f6f6f" fill-opacity="0.30"/><rect x="10.7" y="60.6" width="2.7" height="1.1" fill="#6f6f6f" fill-opacity="0.21"/><rect x="25.8" y="54.8" width="3.1" height="1.3" fill="#6f6f6f" fill-opacity="0.39"/><rect x="60.0" y="27.3" width="3.2" height="0.8" fill="#6f6f6f" fill-opacity="0.27"/><rect x="11.6" y="42.2" width="1.7" height="1.2" fill="#6f6f6f" fill-opacity="0.27"/><rect x="47.0" y="0.1" width="2.8" height="1.0" fill="#6f6f6f" fill-opacity="0.24"/><rect x="14.5" y="24.1" width="1.7" height="0.7" fill="#6f6f6f" fill-opacity="0.33"/><rect x="30.8" y="3.8" width="2.8" height="0.8" fill="#6f6f6f" fill-opacity="0.18"/><rect x="59.3" y="6.0" width="1.2" height="0.8" fill="#6f6f6f" fill-opacity="0.27"/><rect x="20.2" y="42.1" width="4.0" height="1.0" fill="#6f6f6f" fill-opacity="0.14"/><rect x="6.7" y="24.5" width="1.4" height="0.7" fill="#6f6f6f" fill-opacity="0.33"/><rect x="19.9" y="6.7" width="2.6" height="1.0" fill="#6f6f6f" fill-opacity="0.16"/><rect x="32.1" y="51.4" width="3.8" height="1.3" fill="#6f6f6f" fill-opacity="0.21"/><rect x="60.1" y="6.8" width="2.7" height="1.0" fill="#6f6f6f" fill-opacity="0.13"/><rect x="1.4" y="15.0" width="3.8" height="1.0" fill="#6f6f6f" fill-opacity="0.15"/><rect x="41.3" y="3.4" width="2.0" height="1.0" fill="#6f6f6f" fill-opacity="0.17"/><rect x="40.0" y="0.4" width="1.0" height="1.1" fill="#6f6f6f" fill-opacity="0.27"/><rect x="43.8" y="27.0" width="3.0" height="0.8" fill="#6f6f6f" fill-opacity="0.37"/><rect x="4.5" y="21.4" width="1.9" height="1.3" fill="#6f6f6f" fill-opacity="0.41"/><rect x="36.8" y="9.1" width="1.1" height="1.3" fill="#6f6f6f" fill-opacity="0.39"/><rect x="17.7" y="39.1" width="2.9" height="0.7" fill="#6f6f6f" fill-opacity="0.17"/><rect x="47.2" y="42.2" width="4.0" height="1.2" fill="#6f6f6f" fill-opacity="0.11"/><rect x="31.5" y="27.0" width="1.5" height="0.9" fill="#6f6f6f" fill-opacity="0.10"/><rect x="19.0" y="9.5" width="2.9" height="0.7" fill="#6f6f6f" fill-opacity="0.39"/><rect x="23.8" y="45.7" width="2.3" height="1.0" fill="#6f6f6f" fill-opacity="0.25"/><rect x="2.0" y="33.5" width="2.9" height="1.2" fill="#6f6f6f" fill-opacity="0.09"/><rect x="37.3" y="30.8" width="3.6" height="1.0" fill="#6f6f6f" fill-opacity="0.36"/><rect x="10.6" y="24.3" width="2.6" height="1.0" fill="#6f6f6f" fill-opacity="0.35"/><rect x="6.1" y="15.5" width="2.1" height="0.9" fill="#6f6f6f" fill-opacity="0.31"/><rect x="0.1" y="0.5" width="1.1" height="1.0" fill="#6f6f6f" fill-opacity="0.14"/><rect x="55.6" y="51.0" width="1.7" height="0.8" fill="#6f6f6f" fill-opacity="0.24"/><rect x="13.1" y="27.2" width="1.9" height="0.6" fill="#6f6f6f" fill-opacity="0.19"/><rect x="25.8" y="30.5" width="1.5" height="0.7" fill="#6f6f6f" fill-opacity="0.10"/><rect x="40.6" y="3.6" width="4.0" height="1.1" fill="#6f6f6f" fill-opacity="0.34"/><rect x="32.2" y="30.7" width="3.1" height="0.6" fill="#6f6f6f" fill-opacity="0.28"/><rect x="2.8" y="33.0" width="3.3" height="0.8" fill="#6f6f6f" fill-opacity="0.33"/><rect x="9.2" y="48.2" width="1.2" height="1.2" fill="#6f6f6f" fill-opacity="0.10"/><rect x="13.0" y="42.6" width="1.2" height="1.0" fill="#6f6f6f" fill-opacity="0.30"/><rect x="7.5" y="54.6" width="1.6" height="1.0" fill="#6f6f6f" fill-opacity="0.39"/><rect x="42.9" y="39.1" width="3.6" height="0.8" fill="#6f6f6f" fill-opacity="0.13"/><rect x="45.7" y="24.5" width="2.4" height="0.7" fill="#6f6f6f" fill-opacity="0.28"/><rect x="36.8" y="12.4" width="3.7" height="1.1" fill="#6f6f6f" fill-opacity="0.37"/><rect x="43.1" y="60.2" width="2.8" height="0.9" fill="#6f6f6f" fill-opacity="0.18"/><rect x="22.7" y="42.1" width="4.3" height="1.2" fill="#6f6f6f" fill-opacity="0.31"/><rect x="26.9" y="57.1" width="1.6" height="0.7" fill="#6f6f6f" fill-opacity="0.21"/><rect x="38.1" y="18.0" width="2.2" height="1.2" fill="#6f6f6f" fill-opacity="0.36"/><rect x="54.9" y="0.3" width="3.6" height="1.1" fill="#6f6f6f" fill-opacity="0.16"/><rect x="9.0" y="6.3" width="3.2" height="0.7" fill="#6f6f6f" fill-opacity="0.41"/><rect x="33.1" y="33.7" width="1.8" height="1.2" fill="#6f6f6f" fill-opacity="0.13"/><rect x="49.2" y="60.0" width="3.4" height="1.3" fill="#6f6f6f" fill-opacity="0.26"/><rect x="19.7" y="51.3" width="3.3" height="0.8" fill="#6f6f6f" fill-opacity="0.37"/><rect x="2.1" y="45.1" width="1.9" height="0.9" fill="#6f6f6f" fill-opacity="0.35"/><rect x="32.5" y="45.3" width="1.7" height="1.1" fill="#6f6f6f" fill-opacity="0.12"/><rect x="53.8" y="15.0" width="3.3" height="1.3" fill="#6f6f6f" fill-opacity="0.15"/><rect x="3.6" y="12.3" width="1.2" height="0.8" fill="#6f6f6f" fill-opacity="0.37"/><rect x="54.0" y="36.8" width="3.0" height="0.9" fill="#6f6f6f" fill-opacity="0.29"/><rect x="38.0" y="3.3" width="2.3" height="0.7" fill="#6f6f6f" fill-opacity="0.24"/><rect x="32.2" y="0.4" width="2.4" height="0.9" fill="#6f6f6f" fill-opacity="0.39"/><rect x="20.8" y="42.3" width="0.9" height="1.0" fill="#6f6f6f" fill-opacity="0.38"/><rect x="4.0" y="12.5" width="3.2" height="0.7" fill="#6f6f6f" fill-opacity="0.22"/><rect x="39.9" y="54.5" width="2.3" height="1.0" fill="#6f6f6f" fill-opacity="0.34"/><rect x="21.8" y="9.1" width="3.2" height="0.6" fill="#6f6f6f" fill-opacity="0.21"/><rect x="15.4" y="30.1" width="4.0" height="0.8" fill="#6f6f6f" fill-opacity="0.39"/><rect x="33.4" y="54.1" width="2.1" height="1.3" fill="#6f6f6f" fill-opacity="0.38"/><rect x="54.7" y="21.2" width="1.2" height="1.2" fill="#6f6f6f" fill-opacity="0.19"/><rect x="27.3" y="18.6" width="2.9" height="1.1" fill="#6f6f6f" fill-opacity="0.38"/><rect x="30.8" y="54.0" width="3.7" height="0.7" fill="#6f6f6f" fill-opacity="0.17"/><rect x="46.1" y="42.5" width="2.7" height="0.7" fill="#6f6f6f" fill-opacity="0.25"/><rect x="25.0" y="18.3" width="3.2" height="0.9" fill="#6f6f6f" fill-opacity="0.26"/><rect x="30.2" y="18.5" width="2.1" height="1.0" fill="#6f6f6f" fill-opacity="0.29"/><rect x="51.5" y="24.5" width="2.0" height="1.3" fill="#6f6f6f" fill-opacity="0.24"/><rect x="1.4" y="57.2" width="2.5" height="1.0" fill="#6f6f6f" fill-opacity="0.14"/><rect x="10.1" y="9.5" width="3.3" height="1.0" fill="#6f6f6f" fill-opacity="0.34"/><rect x="52.1" y="21.6" width="3.7" height="1.1" fill="#6f6f6f" fill-opacity="0.16"/><rect x="41.4" y="24.4" width="3.7" height="1.1" fill="#6f6f6f" fill-opacity="0.20"/><rect x="42.7" y="15.6" width="1.8" height="1.3" fill="#6f6f6f" fill-opacity="0.10"/><rect x="35.8" y="36.7" width="1.4" height="0.8" fill="#6f6f6f" fill-opacity="0.14"/><rect x="0.7" y="3.6" width="3.0" height="1.0" fill="#6f6f6f" fill-opacity="0.18"/><rect x="36.7" y="21.7" width="4.2" height="1.2" fill="#6f6f6f" fill-opacity="0.11"/><rect x="58.7" y="3.4" width="1.3" height="1.0" fill="#6f6f6f" fill-opacity="0.17"/><rect x="15.3" y="24.3" width="1.5" height="0.7" fill="#6f6f6f" fill-opacity="0.28"/><rect x="32.9" y="6.2" width="1.9" height="1.1" fill="#6f6f6f" fill-opacity="0.33"/><rect x="56.4" y="36.5" width="0.8" height="1.1" fill="#6f6f6f" fill-opacity="0.11"/><rect x="24.9" y="42.3" width="2.0" height="0.8" fill="#6f6f6f" fill-opacity="0.19"/><rect x="52.0" y="39.0" width="1.5" height="0.9" fill="#6f6f6f" fill-opacity="0.10"/><rect x="0.8" y="3.4" width="3.9" height="0.7" fill="#6f6f6f" fill-opacity="0.16"/><rect x="24.9" y="42.1" width="2.6" height="1.2" fill="#6f6f6f" fill-opacity="0.36"/><rect x="47.2" y="39.2" width="1.7" height="0.9" fill="#6f6f6f" fill-opacity="0.10"/><rect x="5.0" y="24.3" width="2.8" height="1.2" fill="#6f6f6f" fill-opacity="0.32"/><rect x="39.0" y="15.6" width="0.9" height="1.0" fill="#6f6f6f" fill-opacity="0.11"/><rect x="8.4" y="15.4" width="4.1" height="0.6" fill="#6f6f6f" fill-opacity="0.28"/><rect x="38.7" y="0.1" width="3.8" height="1.1" fill="#6f6f6f" fill-opacity="0.29"/><rect x="33.7" y="9.1" width="1.7" height="1.3" fill="#6f6f6f" fill-opacity="0.17"/><rect x="10.8" y="60.7" width="3.8" height="0.6" fill="#6f6f6f" fill-opacity="0.25"/><rect x="34.1" y="3.3" width="3.9" height="0.6" fill="#6f6f6f" fill-opacity="0.14"/><rect x="19.7" y="24.5" width="1.2" height="0.7" fill="#6f6f6f" fill-opacity="0.24"/><rect x="30.2" y="30.2" width="2.5" height="1.0" fill="#6f6f6f" fill-opacity="0.36"/></pattern><pattern id="tg" patternUnits="userSpaceOnUse" width="61.2" height="61.2"><rect width="62" height="62" fill="#dcdcdc"/><rect x="0" y="1.5" width="62" height="1" fill="#bdbdbd" fill-opacity="0.5"/><rect x="0" y="4.5" width="62" height="1" fill="#bdbdbd" fill-opacity="0.5"/><rect x="0" y="7.5" width="62" height="1" fill="#bdbdbd" fill-opacity="0.5"/><rect x="0" y="10.5" width="62" height="1" fill="#bdbdbd" fill-opacity="0.5"/><rect x="0" y="13.5" width="62" height="1" fill="#bdbdbd" fill-opacity="0.5"/><rect x="0" y="16.5" width="62" height="1" fill="#bdbdbd" fill-opacity="0.5"/><rect x="0" y="19.5" width="62" height="1" fill="#bdbdbd" fill-opacity="0.5"/><rect x="0" y="22.5" width="62" height="1" fill="#bdbdbd" fill-opacity="0.5"/><rect x="0" y="25.5" width="62" height="1" fill="#bdbdbd" fill-opacity="0.5"/><rect x="0" y="28.5" width="62" height="1" fill="#bdbdbd" fill-opacity="0.5"/><rect x="0" y="31.5" width="62" height="1" fill="#bdbdbd" fill-opacity="0.5"/><rect x="0" y="34.5" width="62" height="1" fill="#bdbdbd" fill-opacity="0.5"/><rect x="0" y="37.5" width="62" height="1" fill="#bdbdbd" fill-opacity="0.5"/><rect x="0" y="40.5" width="62" height="1" fill="#bdbdbd" fill-opacity="0.5"/><rect x="0" y="43.5" width="62" height="1" fill="#bdbdbd" fill-opacity="0.5"/><rect x="0" y="46.5" width="62" height="1" fill="#bdbdbd" fill-opacity="0.5"/><rect x="0" y="49.5" width="62" height="1" fill="#bdbdbd" fill-opacity="0.5"/><rect x="0" y="52.5" width="62" height="1" fill="#bdbdbd" fill-opacity="0.5"/><rect x="0" y="55.5" width="62" height="1" fill="#bdbdbd" fill-opacity="0.5"/><rect x="0" y="58.5" width="62" height="1" fill="#bdbdbd" fill-opacity="0.5"/><rect x="0" y="61.5" width="62" height="1" fill="#bdbdbd" fill-opacity="0.5"/><rect x="19.8" y="13.5" width="2.2" height="1" fill="#a8a8a8" fill-opacity="0.32"/><rect x="50.1" y="10.5" width="2.1" height="1" fill="#a8a8a8" fill-opacity="0.32"/><rect x="31.0" y="4.5" width="1.3" height="1" fill="#a8a8a8" fill-opacity="0.47"/><rect x="14.7" y="52.5" width="2.3" height="1" fill="#a8a8a8" fill-opacity="0.63"/><rect x="7.6" y="22.5" width="2.9" height="1" fill="#a8a8a8" fill-opacity="0.53"/><rect x="3.8" y="55.5" width="2.2" height="1" fill="#a8a8a8" fill-opacity="0.69"/><rect x="2.8" y="13.5" width="1.9" height="1" fill="#a8a8a8" fill-opacity="0.36"/><rect x="7.2" y="28.5" width="2.7" height="1" fill="#a8a8a8" fill-opacity="0.57"/><rect x="6.3" y="55.5" width="2.9" height="1" fill="#a8a8a8" fill-opacity="0.45"/><rect x="33.4" y="7.5" width="2.7" height="1" fill="#a8a8a8" fill-opacity="0.55"/><rect x="30.3" y="52.5" width="2.3" height="1" fill="#a8a8a8" fill-opacity="0.43"/><rect x="35.7" y="43.5" width="2.1" height="1" fill="#a8a8a8" fill-opacity="0.40"/><rect x="11.0" y="22.5" width="1.2" height="1" fill="#a8a8a8" fill-opacity="0.42"/><rect x="30.2" y="31.5" width="3.2" height="1" fill="#a8a8a8" fill-opacity="0.42"/><rect x="59.8" y="10.5" width="2.5" height="1" fill="#a8a8a8" fill-opacity="0.37"/><rect x="20.9" y="46.5" width="2.3" height="1" fill="#a8a8a8" fill-opacity="0.68"/><rect x="4.7" y="52.5" width="2.7" height="1" fill="#a8a8a8" fill-opacity="0.65"/><rect x="19.1" y="34.5" width="2.8" height="1" fill="#a8a8a8" fill-opacity="0.53"/><rect x="27.8" y="7.5" width="3.8" height="1" fill="#a8a8a8" fill-opacity="0.49"/><rect x="40.5" y="4.5" width="3.2" height="1" fill="#a8a8a8" fill-opacity="0.42"/><rect x="35.3" y="43.5" width="1.9" height="1" fill="#a8a8a8" fill-opacity="0.45"/><rect x="40.8" y="1.5" width="3.8" height="1" fill="#a8a8a8" fill-opacity="0.44"/><rect x="37.3" y="46.5" width="1.2" height="1" fill="#a8a8a8" fill-opacity="0.61"/><rect x="7.9" y="22.5" width="2.2" height="1" fill="#a8a8a8" fill-opacity="0.67"/><rect x="30.3" y="16.5" width="2.3" height="1" fill="#a8a8a8" fill-opacity="0.52"/><rect x="53.9" y="40.5" width="3.6" height="1" fill="#a8a8a8" fill-opacity="0.41"/><rect x="25.3" y="34.5" width="3.0" height="1" fill="#a8a8a8" fill-opacity="0.45"/><rect x="14.1" y="7.5" width="1.5" height="1" fill="#a8a8a8" fill-opacity="0.39"/><rect x="14.2" y="46.5" width="3.5" height="1" fill="#a8a8a8" fill-opacity="0.37"/><rect x="17.2" y="13.5" width="2.3" height="1" fill="#a8a8a8" fill-opacity="0.45"/><rect x="34.5" y="13.5" width="3.1" height="1" fill="#a8a8a8" fill-opacity="0.51"/><rect x="37.7" y="4.5" width="2.4" height="1" fill="#a8a8a8" fill-opacity="0.65"/><rect x="58.1" y="52.5" width="2.2" height="1" fill="#a8a8a8" fill-opacity="0.46"/><rect x="6.3" y="61.5" width="2.2" height="1" fill="#a8a8a8" fill-opacity="0.38"/><rect x="60.1" y="43.5" width="1.5" height="1" fill="#a8a8a8" fill-opacity="0.44"/><rect x="3.2" y="1.5" width="2.7" height="1" fill="#a8a8a8" fill-opacity="0.51"/><rect x="57.9" y="58.5" width="1.1" height="1" fill="#a8a8a8" fill-opacity="0.65"/><rect x="37.5" y="13.5" width="2.9" height="1" fill="#a8a8a8" fill-opacity="0.68"/><rect x="36.7" y="46.5" width="1.4" height="1" fill="#a8a8a8" fill-opacity="0.64"/><rect x="60.6" y="43.5" width="2.4" height="1" fill="#a8a8a8" fill-opacity="0.42"/><rect x="8.8" y="31.5" width="3.2" height="1" fill="#a8a8a8" fill-opacity="0.49"/><rect x="42.2" y="49.5" width="1.1" height="1" fill="#a8a8a8" fill-opacity="0.68"/><rect x="32.2" y="13.5" width="3.1" height="1" fill="#a8a8a8" fill-opacity="0.67"/><rect x="46.2" y="28.5" width="3.9" height="1" fill="#a8a8a8" fill-opacity="0.65"/><rect x="42.5" y="25.5" width="2.6" height="1" fill="#a8a8a8" fill-opacity="0.66"/><rect x="21.7" y="22.5" width="2.6" height="1" fill="#a8a8a8" fill-opacity="0.61"/><rect x="20.1" y="22.5" width="2.8" height="1" fill="#a8a8a8" fill-opacity="0.62"/><rect x="46.3" y="19.5" width="3.4" height="1" fill="#a8a8a8" fill-opacity="0.63"/><rect x="45.1" y="22.5" width="1.6" height="1" fill="#a8a8a8" fill-opacity="0.50"/><rect x="44.6" y="1.5" width="3.4" height="1" fill="#a8a8a8" fill-opacity="0.49"/><rect x="11.8" y="58.5" width="3.9" height="1" fill="#a8a8a8" fill-opacity="0.48"/><rect x="57.2" y="34.5" width="3.9" height="1" fill="#a8a8a8" fill-opacity="0.45"/><rect x="13.4" y="22.5" width="2.4" height="1" fill="#a8a8a8" fill-opacity="0.44"/><rect x="29.4" y="58.5" width="3.5" height="1" fill="#a8a8a8" fill-opacity="0.49"/><rect x="39.8" y="61.5" width="1.3" height="1" fill="#a8a8a8" fill-opacity="0.56"/><rect x="55.5" y="19.5" width="2.4" height="1" fill="#a8a8a8" fill-opacity="0.37"/><rect x="48.1" y="31.5" width="1.3" height="1" fill="#a8a8a8" fill-opacity="0.68"/><rect x="44.0" y="43.5" width="2.2" height="1" fill="#a8a8a8" fill-opacity="0.68"/><rect x="44.2" y="16.5" width="4.0" height="1" fill="#a8a8a8" fill-opacity="0.31"/><rect x="36.0" y="43.5" width="3.4" height="1" fill="#a8a8a8" fill-opacity="0.36"/><rect x="50.4" y="46.5" width="3.0" height="1" fill="#a8a8a8" fill-opacity="0.44"/><rect x="33.5" y="13.5" width="1.1" height="1" fill="#a8a8a8" fill-opacity="0.62"/><rect x="44.3" y="10.5" width="2.6" height="1" fill="#a8a8a8" fill-opacity="0.67"/><rect x="26.5" y="19.5" width="3.5" height="1" fill="#a8a8a8" fill-opacity="0.38"/><rect x="15.4" y="28.5" width="2.5" height="1" fill="#a8a8a8" fill-opacity="0.61"/><rect x="19.9" y="52.5" width="2.3" height="1" fill="#a8a8a8" fill-opacity="0.35"/><rect x="55.5" y="34.5" width="3.7" height="1" fill="#a8a8a8" fill-opacity="0.56"/><rect x="49.7" y="49.5" width="2.3" height="1" fill="#a8a8a8" fill-opacity="0.67"/><rect x="30.6" y="52.5" width="1.5" height="1" fill="#a8a8a8" fill-opacity="0.50"/><rect x="53.2" y="16.5" width="2.8" height="1" fill="#a8a8a8" fill-opacity="0.61"/><rect x="9.1" y="13.5" width="2.4" height="1" fill="#a8a8a8" fill-opacity="0.59"/><rect x="33.9" y="31.5" width="3.0" height="1" fill="#a8a8a8" fill-opacity="0.51"/><rect x="29.4" y="10.5" width="3.6" height="1" fill="#a8a8a8" fill-opacity="0.32"/><rect x="11.7" y="4.5" width="3.3" height="1" fill="#a8a8a8" fill-opacity="0.50"/><rect x="34.3" y="7.5" width="2.3" height="1" fill="#a8a8a8" fill-opacity="0.55"/><rect x="30.8" y="49.5" width="1.6" height="1" fill="#a8a8a8" fill-opacity="0.41"/><rect x="31.0" y="46.5" width="2.5" height="1" fill="#a8a8a8" fill-opacity="0.40"/><rect x="31.9" y="25.5" width="3.8" height="1" fill="#a8a8a8" fill-opacity="0.66"/><rect x="12.4" y="43.5" width="1.4" height="1" fill="#a8a8a8" fill-opacity="0.35"/><rect x="27.0" y="7.5" width="3.0" height="1" fill="#a8a8a8" fill-opacity="0.47"/><rect x="13.0" y="28.5" width="3.4" height="1" fill="#a8a8a8" fill-opacity="0.66"/><rect x="9.4" y="61.5" width="3.0" height="1" fill="#a8a8a8" fill-opacity="0.36"/><rect x="53.9" y="43.5" width="1.7" height="1" fill="#a8a8a8" fill-opacity="0.68"/><rect x="24.3" y="46.5" width="1.5" height="1" fill="#a8a8a8" fill-opacity="0.57"/><rect x="13.6" y="40.5" width="4.0" height="1" fill="#a8a8a8" fill-opacity="0.46"/><rect x="25.7" y="34.5" width="2.0" height="1" fill="#a8a8a8" fill-opacity="0.59"/><rect x="1.2" y="52.5" width="2.4" height="1" fill="#a8a8a8" fill-opacity="0.58"/><rect x="23.4" y="49.5" width="2.9" height="1" fill="#a8a8a8" fill-opacity="0.50"/><rect x="3.9" y="22.5" width="3.9" height="1" fill="#a8a8a8" fill-opacity="0.34"/><rect x="16.2" y="4.5" width="3.7" height="1" fill="#a8a8a8" fill-opacity="0.37"/><rect x="46.1" y="40.5" width="3.5" height="1" fill="#a8a8a8" fill-opacity="0.57"/><rect x="57.7" y="37.5" width="1.4" height="1" fill="#a8a8a8" fill-opacity="0.67"/><rect x="34.8" y="31.5" width="1.3" height="1" fill="#a8a8a8" fill-opacity="0.32"/><rect x="42.0" y="40.5" width="3.7" height="1" fill="#a8a8a8" fill-opacity="0.41"/><rect x="1.0" y="7.5" width="3.4" height="1" fill="#a8a8a8" fill-opacity="0.33"/><rect x="52.2" y="7.5" width="1.8" height="1" fill="#a8a8a8" fill-opacity="0.35"/><rect x="0.7" y="52.5" width="2.3" height="1" fill="#a8a8a8" fill-opacity="0.67"/><rect x="37.9" y="4.5" width="2.6" height="1" fill="#a8a8a8" fill-opacity="0.40"/><rect x="6.7" y="16.5" width="1.8" height="1" fill="#a8a8a8" fill-opacity="0.37"/><rect x="56.9" y="61.5" width="1.9" height="1" fill="#a8a8a8" fill-opacity="0.60"/><rect x="17.7" y="49.5" width="3.0" height="1" fill="#a8a8a8" fill-opacity="0.41"/><rect x="49.0" y="25.5" width="1.1" height="1" fill="#a8a8a8" fill-opacity="0.31"/><rect x="30.8" y="19.5" width="2.5" height="1" fill="#a8a8a8" fill-opacity="0.40"/><rect x="27.3" y="61.5" width="2.3" height="1" fill="#a8a8a8" fill-opacity="0.50"/><rect x="50.9" y="37.5" width="3.9" height="1" fill="#a8a8a8" fill-opacity="0.42"/><rect x="13.1" y="22.5" width="2.0" height="1" fill="#a8a8a8" fill-opacity="0.63"/><rect x="43.1" y="61.5" width="1.4" height="1" fill="#a8a8a8" fill-opacity="0.70"/><rect x="59.9" y="13.5" width="1.0" height="1" fill="#a8a8a8" fill-opacity="0.55"/><rect x="53.7" y="40.5" width="1.5" height="1" fill="#a8a8a8" fill-opacity="0.33"/><rect x="51.3" y="49.5" width="3.0" height="1" fill="#a8a8a8" fill-opacity="0.41"/><rect x="14.8" y="28.5" width="1.1" height="1" fill="#a8a8a8" fill-opacity="0.37"/><rect x="16.4" y="1.5" width="1.8" height="1" fill="#a8a8a8" fill-opacity="0.68"/><rect x="59.3" y="52.5" width="2.0" height="1" fill="#a8a8a8" fill-opacity="0.31"/><rect x="53.8" y="19.5" width="2.1" height="1" fill="#a8a8a8" fill-opacity="0.30"/><rect x="23.3" y="46.5" width="1.8" height="1" fill="#a8a8a8" fill-opacity="0.56"/><rect x="15.1" y="1.5" width="1.3" height="1" fill="#a8a8a8" fill-opacity="0.63"/><rect x="8.8" y="55.5" width="1.1" height="1" fill="#a8a8a8" fill-opacity="0.31"/><rect x="18.6" y="22.5" width="1.3" height="1" fill="#a8a8a8" fill-opacity="0.68"/><rect x="52.0" y="13.5" width="3.0" height="1" fill="#a8a8a8" fill-opacity="0.59"/><rect x="53.6" y="37.5" width="3.3" height="1" fill="#a8a8a8" fill-opacity="0.59"/><rect x="30.1" y="28.5" width="3.2" height="1" fill="#a8a8a8" fill-opacity="0.56"/><rect x="2.7" y="49.5" width="2.9" height="1" fill="#a8a8a8" fill-opacity="0.59"/><rect x="49.5" y="13.5" width="3.7" height="1" fill="#a8a8a8" fill-opacity="0.60"/><rect x="34.7" y="1.5" width="3.5" height="1" fill="#a8a8a8" fill-opacity="0.53"/><rect x="54.5" y="61.5" width="1.7" height="1" fill="#a8a8a8" fill-opacity="0.31"/><rect x="8.1" y="34.5" width="3.9" height="1" fill="#a8a8a8" fill-opacity="0.45"/><rect x="27.5" y="4.5" width="2.9" height="1" fill="#a8a8a8" fill-opacity="0.55"/><rect x="41.5" y="46.5" width="1.8" height="1" fill="#a8a8a8" fill-opacity="0.48"/><rect x="4.3" y="49.5" width="3.7" height="1" fill="#a8a8a8" fill-opacity="0.34"/><rect x="32.1" y="46.5" width="1.8" height="1" fill="#a8a8a8" fill-opacity="0.33"/><rect x="16.2" y="19.5" width="1.7" height="1" fill="#a8a8a8" fill-opacity="0.56"/><rect x="28.1" y="37.5" width="1.2" height="1" fill="#a8a8a8" fill-opacity="0.66"/><rect x="17.5" y="4.5" width="2.9" height="1" fill="#a8a8a8" fill-opacity="0.56"/><rect x="4.7" y="13.5" width="2.0" height="1" fill="#a8a8a8" fill-opacity="0.56"/><rect x="42.3" y="58.5" width="2.7" height="1" fill="#a8a8a8" fill-opacity="0.30"/><rect x="3.7" y="25.5" width="3.9" height="1" fill="#a8a8a8" fill-opacity="0.34"/><rect x="13.3" y="46.5" width="1.9" height="1" fill="#a8a8a8" fill-opacity="0.51"/><rect x="28.3" y="43.5" width="3.3" height="1" fill="#a8a8a8" fill-opacity="0.70"/><rect x="33.5" y="28.5" width="3.9" height="1" fill="#a8a8a8" fill-opacity="0.67"/><rect x="1.1" y="43.5" width="1.2" height="1" fill="#a8a8a8" fill-opacity="0.50"/><rect x="60.7" y="25.5" width="2.2" height="1" fill="#a8a8a8" fill-opacity="0.67"/><rect x="56.8" y="7.5" width="2.7" height="1" fill="#a8a8a8" fill-opacity="0.36"/><rect x="32.0" y="34.5" width="1.4" height="1" fill="#a8a8a8" fill-opacity="0.63"/><rect x="31.0" y="10.5" width="3.1" height="1" fill="#a8a8a8" fill-opacity="0.39"/><rect x="54.8" y="46.5" width="2.2" height="1" fill="#a8a8a8" fill-opacity="0.36"/><rect x="57.9" y="43.5" width="2.2" height="1" fill="#a8a8a8" fill-opacity="0.59"/><rect x="25.4" y="37.5" width="1.9" height="1" fill="#a8a8a8" fill-opacity="0.64"/><rect x="0.1" y="31.5" width="3.5" height="1" fill="#a8a8a8" fill-opacity="0.35"/><rect x="56.5" y="1.5" width="3.7" height="1" fill="#a8a8a8" fill-opacity="0.42"/><rect x="22.7" y="37.5" width="2.2" height="1" fill="#a8a8a8" fill-opacity="0.65"/><rect x="4.7" y="40.5" width="3.3" height="1" fill="#a8a8a8" fill-opacity="0.64"/><rect x="17.1" y="4.5" width="3.5" height="1" fill="#a8a8a8" fill-opacity="0.41"/><rect x="57.1" y="22.5" width="3.9" height="1" fill="#a8a8a8" fill-opacity="0.47"/><rect x="19.3" y="34.5" width="3.4" height="1" fill="#a8a8a8" fill-opacity="0.47"/><rect x="1.8" y="61.5" width="2.2" height="1" fill="#a8a8a8" fill-opacity="0.65"/><rect x="33.8" y="19.5" width="3.2" height="1" fill="#a8a8a8" fill-opacity="0.32"/><rect x="44.7" y="43.5" width="2.8" height="1" fill="#a8a8a8" fill-opacity="0.36"/><rect x="53.0" y="46.5" width="1.1" height="1" fill="#a8a8a8" fill-opacity="0.67"/><rect x="7.8" y="46.5" width="2.2" height="1" fill="#a8a8a8" fill-opacity="0.41"/><rect x="15.6" y="61.5" width="1.8" height="1" fill="#a8a8a8" fill-opacity="0.56"/><rect x="18.4" y="52.5" width="3.0" height="1" fill="#a8a8a8" fill-opacity="0.35"/><rect x="39.2" y="7.5" width="1.6" height="1" fill="#a8a8a8" fill-opacity="0.66"/><rect x="30.3" y="22.5" width="2.4" height="1" fill="#a8a8a8" fill-opacity="0.43"/><rect x="46.3" y="40.5" width="1.4" height="1" fill="#a8a8a8" fill-opacity="0.38"/><rect x="5.5" y="31.5" width="2.7" height="1" fill="#a8a8a8" fill-opacity="0.43"/><rect x="22.5" y="55.5" width="1.6" height="1" fill="#a8a8a8" fill-opacity="0.31"/><rect x="53.1" y="37.5" width="2.2" height="1" fill="#a8a8a8" fill-opacity="0.51"/><rect x="23.0" y="31.5" width="3.3" height="1" fill="#a8a8a8" fill-opacity="0.50"/><rect x="35.0" y="34.5" width="1.4" height="1" fill="#a8a8a8" fill-opacity="0.50"/><rect x="38.4" y="19.5" width="1.3" height="1" fill="#a8a8a8" fill-opacity="0.66"/><rect x="23.5" y="61.5" width="2.3" height="1" fill="#a8a8a8" fill-opacity="0.68"/><rect x="51.8" y="1.5" width="1.4" height="1" fill="#a8a8a8" fill-opacity="0.47"/><rect x="46.6" y="46.5" width="3.9" height="1" fill="#a8a8a8" fill-opacity="0.50"/><rect x="4.5" y="49.5" width="3.6" height="1" fill="#a8a8a8" fill-opacity="0.69"/><rect x="15.2" y="10.5" width="1.7" height="1" fill="#a8a8a8" fill-opacity="0.36"/><rect x="59.3" y="10.5" width="3.8" height="1" fill="#a8a8a8" fill-opacity="0.59"/><rect x="39.5" y="43.5" width="1.3" height="1" fill="#a8a8a8" fill-opacity="0.61"/><rect x="0.1" y="13.5" width="1.7" height="1" fill="#a8a8a8" fill-opacity="0.67"/><rect x="39.4" y="28.5" width="3.9" height="1" fill="#a8a8a8" fill-opacity="0.55"/><rect x="32.2" y="40.5" width="3.1" height="1" fill="#a8a8a8" fill-opacity="0.34"/><rect x="4.3" y="49.5" width="3.8" height="1" fill="#a8a8a8" fill-opacity="0.38"/><rect x="15.9" y="58.5" width="1.0" height="1" fill="#a8a8a8" fill-opacity="0.51"/><rect x="60.8" y="25.5" width="3.9" height="1" fill="#a8a8a8" fill-opacity="0.56"/><rect x="53.9" y="46.5" width="2.6" height="1" fill="#a8a8a8" fill-opacity="0.52"/><rect x="1.8" y="40.5" width="3.1" height="1" fill="#a8a8a8" fill-opacity="0.42"/><rect x="1.3" y="46.5" width="3.7" height="1" fill="#a8a8a8" fill-opacity="0.56"/><rect x="4.9" y="22.5" width="3.0" height="1" fill="#a8a8a8" fill-opacity="0.67"/><rect x="13.8" y="4.5" width="3.1" height="1" fill="#a8a8a8" fill-opacity="0.59"/><rect x="22.1" y="37.5" width="1.6" height="1" fill="#a8a8a8" fill-opacity="0.62"/><rect x="45.1" y="49.5" width="1.2" height="1" fill="#a8a8a8" fill-opacity="0.50"/><rect x="12.2" y="19.5" width="1.7" height="1" fill="#a8a8a8" fill-opacity="0.39"/><rect x="46.4" y="28.5" width="1.3" height="1" fill="#a8a8a8" fill-opacity="0.55"/><rect x="37.2" y="22.5" width="2.5" height="1" fill="#a8a8a8" fill-opacity="0.66"/><rect x="3.4" y="58.5" width="1.4" height="1" fill="#a8a8a8" fill-opacity="0.46"/><rect x="13.0" y="58.5" width="1.4" height="1" fill="#a8a8a8" fill-opacity="0.32"/><rect x="3.7" y="37.5" width="2.3" height="1" fill="#a8a8a8" fill-opacity="0.58"/><rect x="19.2" y="10.5" width="4.0" height="1" fill="#a8a8a8" fill-opacity="0.67"/><rect x="20.1" y="16.5" width="3.0" height="1" fill="#a8a8a8" fill-opacity="0.51"/><rect x="28.5" y="28.5" width="3.0" height="1" fill="#a8a8a8" fill-opacity="0.45"/><rect x="22.8" y="31.5" width="2.3" height="1" fill="#a8a8a8" fill-opacity="0.34"/><rect x="4.8" y="4.9" width="1.5" height="1" fill="#f2f2f2" fill-opacity="0.7"/><rect x="25.6" y="54.0" width="1.5" height="1" fill="#f2f2f2" fill-opacity="0.7"/><rect x="34.2" y="46.3" width="1.5" height="1" fill="#f2f2f2" fill-opacity="0.7"/><rect x="23.2" y="46.9" width="1.5" height="1" fill="#f2f2f2" fill-opacity="0.7"/><rect x="18.8" y="49.0" width="1.5" height="1" fill="#f2f2f2" fill-opacity="0.7"/><rect x="5.4" y="43.0" width="1.5" height="1" fill="#f2f2f2" fill-opacity="0.7"/><rect x="11.9" y="33.0" width="1.5" height="1" fill="#f2f2f2" fill-opacity="0.7"/><rect x="27.2" y="19.7" width="1.5" height="1" fill="#f2f2f2" fill-opacity="0.7"/><rect x="45.0" y="28.9" width="1.5" height="1" fill="#f2f2f2" fill-opacity="0.7"/><rect x="38.5" y="15.1" width="1.5" height="1" fill="#f2f2f2" fill-opacity="0.7"/><rect x="38.1" y="24.7" width="1.5" height="1" fill="#f2f2f2" fill-opacity="0.7"/><rect x="22.9" y="28.3" width="1.5" height="1" fill="#f2f2f2" fill-opacity="0.7"/><rect x="49.0" y="3.8" width="1.5" height="1" fill="#f2f2f2" fill-opacity="0.7"/><rect x="11.9" y="3.8" width="1.5" height="1" fill="#f2f2f2" fill-opacity="0.7"/><rect x="36.9" y="22.1" width="1.5" height="1" fill="#f2f2f2" fill-opacity="0.7"/><rect x="20.4" y="58.2" width="1.5" height="1" fill="#f2f2f2" fill-opacity="0.7"/><rect x="2.7" y="45.5" width="1.5" height="1" fill="#f2f2f2" fill-opacity="0.7"/><rect x="42.1" y="56.4" width="1.5" height="1" fill="#f2f2f2" fill-opacity="0.7"/><rect x="18.1" y="44.0" width="1.5" height="1" fill="#f2f2f2" fill-opacity="0.7"/><rect x="36.3" y="49.1" width="1.5" height="1" fill="#f2f2f2" fill-opacity="0.7"/><rect x="57.7" y="4.0" width="1.5" height="1" fill="#f2f2f2" fill-opacity="0.7"/><rect x="50.4" y="6.5" width="1.5" height="1" fill="#f2f2f2" fill-opacity="0.7"/><rect x="43.6" y="28.4" width="1.5" height="1" fill="#f2f2f2" fill-opacity="0.7"/><rect x="47.4" y="48.2" width="1.5" height="1" fill="#f2f2f2" fill-opacity="0.7"/><rect x="55.7" y="49.7" width="1.5" height="1" fill="#f2f2f2" fill-opacity="0.7"/><rect x="8.1" y="30.3" width="1.5" height="1" fill="#f2f2f2" fill-opacity="0.7"/><rect x="0.5" y="56.8" width="1.5" height="1" fill="#f2f2f2" fill-opacity="0.7"/><rect x="18.5" y="42.2" width="1.5" height="1" fill="#f2f2f2" fill-opacity="0.7"/><rect x="9.2" y="14.4" width="1.5" height="1" fill="#f2f2f2" fill-opacity="0.7"/><rect x="52.5" y="28.1" width="1.5" height="1" fill="#f2f2f2" fill-opacity="0.7"/><rect x="47.8" y="36.3" width="1.5" height="1" fill="#f2f2f2" fill-opacity="0.7"/><rect x="31.2" y="23.9" width="1.5" height="1" fill="#f2f2f2" fill-opacity="0.7"/><rect x="9.8" y="24.9" width="1.5" height="1" fill="#f2f2f2" fill-opacity="0.7"/><rect x="39.6" y="29.4" width="1.5" height="1" fill="#f2f2f2" fill-opacity="0.7"/><rect x="33.2" y="9.8" width="1.5" height="1" fill="#f2f2f2" fill-opacity="0.7"/><rect x="26.0" y="6.4" width="1.5" height="1" fill="#f2f2f2" fill-opacity="0.7"/><rect x="4.4" y="38.1" width="1.5" height="1" fill="#f2f2f2" fill-opacity="0.7"/><rect x="12.7" y="25.7" width="1.5" height="1" fill="#f2f2f2" fill-opacity="0.7"/><rect x="60.3" y="59.3" width="1.5" height="1" fill="#f2f2f2" fill-opacity="0.7"/><rect x="10.6" y="8.1" width="1.5" height="1" fill="#f2f2f2" fill-opacity="0.7"/><rect x="28.1" y="54.4" width="1.5" height="1" fill="#f2f2f2" fill-opacity="0.7"/><rect x="14.3" y="32.9" width="1.5" height="1" fill="#f2f2f2" fill-opacity="0.7"/><rect x="47.2" y="46.3" width="1.5" height="1" fill="#f2f2f2" fill-opacity="0.7"/><rect x="47.6" y="17.9" width="1.5" height="1" fill="#f2f2f2" fill-opacity="0.7"/><rect x="17.0" y="16.3" width="1.5" height="1" fill="#f2f2f2" fill-opacity="0.7"/><rect x="15.5" y="15.9" width="1.5" height="1" fill="#f2f2f2" fill-opacity="0.7"/><rect x="26.8" y="11.3" width="1.5" height="1" fill="#f2f2f2" fill-opacity="0.7"/><rect x="14.4" y="17.2" width="1.5" height="1" fill="#f2f2f2" fill-opacity="0.7"/><rect x="55.4" y="11.5" width="1.5" height="1" fill="#f2f2f2" fill-opacity="0.7"/><rect x="4.0" y="15.4" width="1.5" height="1" fill="#f2f2f2" fill-opacity="0.7"/><rect x="15.0" y="32.1" width="1.5" height="1" fill="#f2f2f2" fill-opacity="0.7"/><rect x="39.6" y="6.1" width="1.5" height="1" fill="#f2f2f2" fill-opacity="0.7"/><rect x="28.3" y="2.3" width="1.5" height="1" fill="#f2f2f2" fill-opacity="0.7"/><rect x="0.3" y="53.9" width="1.5" height="1" fill="#f2f2f2" fill-opacity="0.7"/><rect x="14.1" y="27.3" width="1.5" height="1" fill="#f2f2f2" fill-opacity="0.7"/><rect x="22.8" y="53.5" width="1.5" height="1" fill="#f2f2f2" fill-opacity="0.7"/><rect x="14.2" y="3.1" width="1.5" height="1" fill="#f2f2f2" fill-opacity="0.7"/><rect x="36.6" y="50.5" width="1.5" height="1" fill="#f2f2f2" fill-opacity="0.7"/><rect x="11.8" y="4.6" width="1.5" height="1" fill="#f2f2f2" fill-opacity="0.7"/><rect x="31.3" y="10.8" width="1.5" height="1" fill="#f2f2f2" fill-opacity="0.7"/><rect x="36.8" y="47.3" width="1.5" height="1" fill="#f2f2f2" fill-opacity="0.7"/><rect x="40.6" y="0.4" width="1.5" height="1" fill="#f2f2f2" fill-opacity="0.7"/><rect x="38.9" y="43.3" width="1.5" height="1" fill="#f2f2f2" fill-opacity="0.7"/><rect x="21.3" y="2.3" width="1.5" height="1" fill="#f2f2f2" fill-opacity="0.7"/><rect x="20.7" y="2.7" width="1.5" height="1" fill="#f2f2f2" fill-opacity="0.7"/><rect x="61.0" y="2.3" width="1.5" height="1" fill="#f2f2f2" fill-opacity="0.7"/><rect x="44.7" y="55.8" width="1.5" height="1" fill="#f2f2f2" fill-opacity="0.7"/><rect x="49.7" y="49.9" width="1.5" height="1" fill="#f2f2f2" fill-opacity="0.7"/><rect x="24.9" y="22.7" width="1.5" height="1" fill="#f2f2f2" fill-opacity="0.7"/><rect x="37.9" y="4.8" width="1.5" height="1" fill="#f2f2f2" fill-opacity="0.7"/><rect x="1.9" y="30.2" width="1.5" height="1" fill="#f2f2f2" fill-opacity="0.7"/><rect x="29.5" y="24.9" width="1.5" height="1" fill="#f2f2f2" fill-opacity="0.7"/><rect x="48.5" y="40.5" width="1.5" height="1" fill="#f2f2f2" fill-opacity="0.7"/><rect x="9.4" y="32.6" width="1.5" height="1" fill="#f2f2f2" fill-opacity="0.7"/><rect x="39.8" y="24.3" width="1.5" height="1" fill="#f2f2f2" fill-opacity="0.7"/><rect x="16.5" y="60.3" width="1.5" height="1" fill="#f2f2f2" fill-opacity="0.7"/><rect x="40.7" y="25.5" width="1.5" height="1" fill="#f2f2f2" fill-opacity="0.7"/><rect x="3.1" y="45.5" width="1.5" height="1" fill="#f2f2f2" fill-opacity="0.7"/><rect x="53.9" y="25.3" width="1.5" height="1" fill="#f2f2f2" fill-opacity="0.7"/><rect x="1.1" y="46.8" width="1.5" height="1" fill="#f2f2f2" fill-opacity="0.7"/></pattern><pattern id="tb" patternUnits="userSpaceOnUse" width="61.2" height="61.2"><rect width="62" height="62" fill="#a46c4a"/><rect x="0" y="2.5" width="62" height="1.0" fill="#5e3622" fill-opacity="0.55"/><rect x="0" y="0.0" width="62" height="0.8" fill="#cf9a70" fill-opacity="0.35"/><rect x="1.8" y="0.0" width="0.8" height="2.8" fill="#6e4630" fill-opacity="0.42"/><rect x="8.1" y="0.0" width="0.8" height="2.8" fill="#6e4630" fill-opacity="0.39"/><rect x="13.1" y="0.0" width="0.8" height="2.8" fill="#6e4630" fill-opacity="0.43"/><rect x="17.2" y="0.0" width="0.8" height="2.8" fill="#6e4630" fill-opacity="0.40"/><rect x="22.5" y="0.0" width="0.8" height="2.8" fill="#6e4630" fill-opacity="0.49"/><rect x="26.3" y="0.0" width="0.8" height="2.8" fill="#6e4630" fill-opacity="0.34"/><rect x="30.1" y="0.0" width="0.8" height="2.8" fill="#6e4630" fill-opacity="0.49"/><rect x="35.7" y="0.0" width="0.8" height="2.8" fill="#6e4630" fill-opacity="0.26"/><rect x="42.1" y="0.0" width="0.8" height="2.8" fill="#6e4630" fill-opacity="0.54"/><rect x="47.6" y="0.0" width="0.8" height="2.8" fill="#6e4630" fill-opacity="0.43"/><rect x="51.6" y="0.0" width="0.8" height="2.8" fill="#6e4630" fill-opacity="0.25"/><rect x="56.6" y="0.0" width="0.8" height="2.8" fill="#6e4630" fill-opacity="0.27"/><rect x="60.7" y="0.0" width="0.8" height="2.8" fill="#6e4630" fill-opacity="0.32"/><rect x="0" y="5.9" width="62" height="1.0" fill="#5e3622" fill-opacity="0.55"/><rect x="0" y="3.4" width="62" height="0.8" fill="#cf9a70" fill-opacity="0.35"/><rect x="1.9" y="3.4" width="0.8" height="2.8" fill="#6e4630" fill-opacity="0.38"/><rect x="7.9" y="3.4" width="0.8" height="2.8" fill="#6e4630" fill-opacity="0.41"/><rect x="13.3" y="3.4" width="0.8" height="2.8" fill="#6e4630" fill-opacity="0.40"/><rect x="18.8" y="3.4" width="0.8" height="2.8" fill="#6e4630" fill-opacity="0.39"/><rect x="23.1" y="3.4" width="0.8" height="2.8" fill="#6e4630" fill-opacity="0.55"/><rect x="29.6" y="3.4" width="0.8" height="2.8" fill="#6e4630" fill-opacity="0.50"/><rect x="35.2" y="3.4" width="0.8" height="2.8" fill="#6e4630" fill-opacity="0.34"/><rect x="39.4" y="3.4" width="0.8" height="2.8" fill="#6e4630" fill-opacity="0.34"/><rect x="43.1" y="3.4" width="0.8" height="2.8" fill="#6e4630" fill-opacity="0.48"/><rect x="47.8" y="3.4" width="0.8" height="2.8" fill="#6e4630" fill-opacity="0.50"/><rect x="52.5" y="3.4" width="0.8" height="2.8" fill="#6e4630" fill-opacity="0.54"/><rect x="58.5" y="3.4" width="0.8" height="2.8" fill="#6e4630" fill-opacity="0.25"/><rect x="0" y="9.3" width="62" height="1.0" fill="#5e3622" fill-opacity="0.55"/><rect x="0" y="6.8" width="62" height="0.8" fill="#cf9a70" fill-opacity="0.35"/><rect x="3.6" y="6.8" width="0.8" height="2.8" fill="#6e4630" fill-opacity="0.39"/><rect x="10.1" y="6.8" width="0.8" height="2.8" fill="#6e4630" fill-opacity="0.37"/><rect x="13.8" y="6.8" width="0.8" height="2.8" fill="#6e4630" fill-opacity="0.44"/><rect x="19.6" y="6.8" width="0.8" height="2.8" fill="#6e4630" fill-opacity="0.33"/><rect x="23.4" y="6.8" width="0.8" height="2.8" fill="#6e4630" fill-opacity="0.35"/><rect x="29.8" y="6.8" width="0.8" height="2.8" fill="#6e4630" fill-opacity="0.48"/><rect x="33.6" y="6.8" width="0.8" height="2.8" fill="#6e4630" fill-opacity="0.32"/><rect x="37.4" y="6.8" width="0.8" height="2.8" fill="#6e4630" fill-opacity="0.27"/><rect x="43.3" y="6.8" width="0.8" height="2.8" fill="#6e4630" fill-opacity="0.30"/><rect x="48.5" y="6.8" width="0.8" height="2.8" fill="#6e4630" fill-opacity="0.38"/><rect x="52.6" y="6.8" width="0.8" height="2.8" fill="#6e4630" fill-opacity="0.47"/><rect x="56.5" y="6.8" width="0.8" height="2.8" fill="#6e4630" fill-opacity="0.44"/><rect x="60.3" y="6.8" width="0.8" height="2.8" fill="#6e4630" fill-opacity="0.38"/><rect x="0" y="12.7" width="62" height="1.0" fill="#5e3622" fill-opacity="0.55"/><rect x="0" y="10.2" width="62" height="0.8" fill="#cf9a70" fill-opacity="0.35"/><rect x="1.1" y="10.2" width="0.8" height="2.8" fill="#6e4630" fill-opacity="0.54"/><rect x="7.0" y="10.2" width="0.8" height="2.8" fill="#6e4630" fill-opacity="0.34"/><rect x="13.1" y="10.2" width="0.8" height="2.8" fill="#6e4630" fill-opacity="0.31"/><rect x="17.8" y="10.2" width="0.8" height="2.8" fill="#6e4630" fill-opacity="0.51"/><rect x="23.3" y="10.2" width="0.8" height="2.8" fill="#6e4630" fill-opacity="0.28"/><rect x="29.7" y="10.2" width="0.8" height="2.8" fill="#6e4630" fill-opacity="0.31"/><rect x="34.0" y="10.2" width="0.8" height="2.8" fill="#6e4630" fill-opacity="0.48"/><rect x="38.5" y="10.2" width="0.8" height="2.8" fill="#6e4630" fill-opacity="0.34"/><rect x="42.2" y="10.2" width="0.8" height="2.8" fill="#6e4630" fill-opacity="0.28"/><rect x="47.5" y="10.2" width="0.8" height="2.8" fill="#6e4630" fill-opacity="0.32"/><rect x="52.8" y="10.2" width="0.8" height="2.8" fill="#6e4630" fill-opacity="0.36"/><rect x="57.6" y="10.2" width="0.8" height="2.8" fill="#6e4630" fill-opacity="0.54"/><rect x="0" y="16.1" width="62" height="1.0" fill="#5e3622" fill-opacity="0.55"/><rect x="0" y="13.6" width="62" height="0.8" fill="#cf9a70" fill-opacity="0.35"/><rect x="2.3" y="13.6" width="0.8" height="2.8" fill="#6e4630" fill-opacity="0.51"/><rect x="6.3" y="13.6" width="0.8" height="2.8" fill="#6e4630" fill-opacity="0.30"/><rect x="12.6" y="13.6" width="0.8" height="2.8" fill="#6e4630" fill-opacity="0.50"/><rect x="16.8" y="13.6" width="0.8" height="2.8" fill="#6e4630" fill-opacity="0.31"/><rect x="22.5" y="13.6" width="0.8" height="2.8" fill="#6e4630" fill-opacity="0.53"/><rect x="26.6" y="13.6" width="0.8" height="2.8" fill="#6e4630" fill-opacity="0.54"/><rect x="32.8" y="13.6" width="0.8" height="2.8" fill="#6e4630" fill-opacity="0.43"/><rect x="37.5" y="13.6" width="0.8" height="2.8" fill="#6e4630" fill-opacity="0.28"/><rect x="41.2" y="13.6" width="0.8" height="2.8" fill="#6e4630" fill-opacity="0.54"/><rect x="45.4" y="13.6" width="0.8" height="2.8" fill="#6e4630" fill-opacity="0.46"/><rect x="49.6" y="13.6" width="0.8" height="2.8" fill="#6e4630" fill-opacity="0.50"/><rect x="54.9" y="13.6" width="0.8" height="2.8" fill="#6e4630" fill-opacity="0.34"/><rect x="59.0" y="13.6" width="0.8" height="2.8" fill="#6e4630" fill-opacity="0.47"/><rect x="0" y="19.5" width="62" height="1.0" fill="#5e3622" fill-opacity="0.55"/><rect x="0" y="17.0" width="62" height="0.8" fill="#cf9a70" fill-opacity="0.35"/><rect x="0.9" y="17.0" width="0.8" height="2.8" fill="#6e4630" fill-opacity="0.42"/><rect x="7.0" y="17.0" width="0.8" height="2.8" fill="#6e4630" fill-opacity="0.43"/><rect x="11.3" y="17.0" width="0.8" height="2.8" fill="#6e4630" fill-opacity="0.53"/><rect x="15.4" y="17.0" width="0.8" height="2.8" fill="#6e4630" fill-opacity="0.25"/><rect x="19.7" y="17.0" width="0.8" height="2.8" fill="#6e4630" fill-opacity="0.38"/><rect x="23.4" y="17.0" width="0.8" height="2.8" fill="#6e4630" fill-opacity="0.30"/><rect x="28.0" y="17.0" width="0.8" height="2.8" fill="#6e4630" fill-opacity="0.42"/><rect x="31.9" y="17.0" width="0.8" height="2.8" fill="#6e4630" fill-opacity="0.36"/><rect x="38.1" y="17.0" width="0.8" height="2.8" fill="#6e4630" fill-opacity="0.54"/><rect x="43.6" y="17.0" width="0.8" height="2.8" fill="#6e4630" fill-opacity="0.46"/><rect x="48.8" y="17.0" width="0.8" height="2.8" fill="#6e4630" fill-opacity="0.29"/><rect x="52.4" y="17.0" width="0.8" height="2.8" fill="#6e4630" fill-opacity="0.26"/><rect x="58.6" y="17.0" width="0.8" height="2.8" fill="#6e4630" fill-opacity="0.46"/><rect x="0" y="22.9" width="62" height="1.0" fill="#5e3622" fill-opacity="0.55"/><rect x="0" y="20.4" width="62" height="0.8" fill="#cf9a70" fill-opacity="0.35"/><rect x="0.1" y="20.4" width="0.8" height="2.8" fill="#6e4630" fill-opacity="0.44"/><rect x="5.0" y="20.4" width="0.8" height="2.8" fill="#6e4630" fill-opacity="0.47"/><rect x="9.5" y="20.4" width="0.8" height="2.8" fill="#6e4630" fill-opacity="0.55"/><rect x="13.2" y="20.4" width="0.8" height="2.8" fill="#6e4630" fill-opacity="0.41"/><rect x="18.9" y="20.4" width="0.8" height="2.8" fill="#6e4630" fill-opacity="0.52"/><rect x="24.6" y="20.4" width="0.8" height="2.8" fill="#6e4630" fill-opacity="0.46"/><rect x="30.5" y="20.4" width="0.8" height="2.8" fill="#6e4630" fill-opacity="0.52"/><rect x="35.1" y="20.4" width="0.8" height="2.8" fill="#6e4630" fill-opacity="0.46"/><rect x="41.3" y="20.4" width="0.8" height="2.8" fill="#6e4630" fill-opacity="0.51"/><rect x="46.0" y="20.4" width="0.8" height="2.8" fill="#6e4630" fill-opacity="0.49"/><rect x="52.1" y="20.4" width="0.8" height="2.8" fill="#6e4630" fill-opacity="0.42"/><rect x="57.5" y="20.4" width="0.8" height="2.8" fill="#6e4630" fill-opacity="0.36"/><rect x="0" y="26.3" width="62" height="1.0" fill="#5e3622" fill-opacity="0.55"/><rect x="0" y="23.8" width="62" height="0.8" fill="#cf9a70" fill-opacity="0.35"/><rect x="2.4" y="23.8" width="0.8" height="2.8" fill="#6e4630" fill-opacity="0.27"/><rect x="7.9" y="23.8" width="0.8" height="2.8" fill="#6e4630" fill-opacity="0.55"/><rect x="14.0" y="23.8" width="0.8" height="2.8" fill="#6e4630" fill-opacity="0.47"/><rect x="18.7" y="23.8" width="0.8" height="2.8" fill="#6e4630" fill-opacity="0.47"/><rect x="23.9" y="23.8" width="0.8" height="2.8" fill="#6e4630" fill-opacity="0.38"/><rect x="29.9" y="23.8" width="0.8" height="2.8" fill="#6e4630" fill-opacity="0.28"/><rect x="35.7" y="23.8" width="0.8" height="2.8" fill="#6e4630" fill-opacity="0.26"/><rect x="41.0" y="23.8" width="0.8" height="2.8" fill="#6e4630" fill-opacity="0.39"/><rect x="45.2" y="23.8" width="0.8" height="2.8" fill="#6e4630" fill-opacity="0.46"/><rect x="50.2" y="23.8" width="0.8" height="2.8" fill="#6e4630" fill-opacity="0.43"/><rect x="56.4" y="23.8" width="0.8" height="2.8" fill="#6e4630" fill-opacity="0.33"/><rect x="59.9" y="23.8" width="0.8" height="2.8" fill="#6e4630" fill-opacity="0.34"/><rect x="0" y="29.7" width="62" height="1.0" fill="#5e3622" fill-opacity="0.55"/><rect x="0" y="27.2" width="62" height="0.8" fill="#cf9a70" fill-opacity="0.35"/><rect x="0.8" y="27.2" width="0.8" height="2.8" fill="#6e4630" fill-opacity="0.30"/><rect x="7.0" y="27.2" width="0.8" height="2.8" fill="#6e4630" fill-opacity="0.45"/><rect x="11.9" y="27.2" width="0.8" height="2.8" fill="#6e4630" fill-opacity="0.52"/><rect x="16.3" y="27.2" width="0.8" height="2.8" fill="#6e4630" fill-opacity="0.45"/><rect x="20.4" y="27.2" width="0.8" height="2.8" fill="#6e4630" fill-opacity="0.38"/><rect x="26.3" y="27.2" width="0.8" height="2.8" fill="#6e4630" fill-opacity="0.52"/><rect x="32.5" y="27.2" width="0.8" height="2.8" fill="#6e4630" fill-opacity="0.37"/><rect x="37.7" y="27.2" width="0.8" height="2.8" fill="#6e4630" fill-opacity="0.34"/><rect x="41.6" y="27.2" width="0.8" height="2.8" fill="#6e4630" fill-opacity="0.40"/><rect x="47.7" y="27.2" width="0.8" height="2.8" fill="#6e4630" fill-opacity="0.50"/><rect x="53.3" y="27.2" width="0.8" height="2.8" fill="#6e4630" fill-opacity="0.54"/><rect x="57.6" y="27.2" width="0.8" height="2.8" fill="#6e4630" fill-opacity="0.30"/><rect x="0" y="33.1" width="62" height="1.0" fill="#5e3622" fill-opacity="0.55"/><rect x="0" y="30.6" width="62" height="0.8" fill="#cf9a70" fill-opacity="0.35"/><rect x="1.1" y="30.6" width="0.8" height="2.8" fill="#6e4630" fill-opacity="0.31"/><rect x="5.8" y="30.6" width="0.8" height="2.8" fill="#6e4630" fill-opacity="0.44"/><rect x="10.8" y="30.6" width="0.8" height="2.8" fill="#6e4630" fill-opacity="0.34"/><rect x="16.8" y="30.6" width="0.8" height="2.8" fill="#6e4630" fill-opacity="0.54"/><rect x="21.7" y="30.6" width="0.8" height="2.8" fill="#6e4630" fill-opacity="0.27"/><rect x="25.3" y="30.6" width="0.8" height="2.8" fill="#6e4630" fill-opacity="0.51"/><rect x="28.9" y="30.6" width="0.8" height="2.8" fill="#6e4630" fill-opacity="0.46"/><rect x="34.1" y="30.6" width="0.8" height="2.8" fill="#6e4630" fill-opacity="0.34"/><rect x="40.0" y="30.6" width="0.8" height="2.8" fill="#6e4630" fill-opacity="0.26"/><rect x="43.9" y="30.6" width="0.8" height="2.8" fill="#6e4630" fill-opacity="0.39"/><rect x="47.5" y="30.6" width="0.8" height="2.8" fill="#6e4630" fill-opacity="0.50"/><rect x="51.7" y="30.6" width="0.8" height="2.8" fill="#6e4630" fill-opacity="0.29"/><rect x="55.3" y="30.6" width="0.8" height="2.8" fill="#6e4630" fill-opacity="0.44"/><rect x="60.2" y="30.6" width="0.8" height="2.8" fill="#6e4630" fill-opacity="0.44"/><rect x="0" y="36.5" width="62" height="1.0" fill="#5e3622" fill-opacity="0.55"/><rect x="0" y="34.0" width="62" height="0.8" fill="#cf9a70" fill-opacity="0.35"/><rect x="3.2" y="34.0" width="0.8" height="2.8" fill="#6e4630" fill-opacity="0.54"/><rect x="8.8" y="34.0" width="0.8" height="2.8" fill="#6e4630" fill-opacity="0.31"/><rect x="13.7" y="34.0" width="0.8" height="2.8" fill="#6e4630" fill-opacity="0.30"/><rect x="17.2" y="34.0" width="0.8" height="2.8" fill="#6e4630" fill-opacity="0.39"/><rect x="22.9" y="34.0" width="0.8" height="2.8" fill="#6e4630" fill-opacity="0.30"/><rect x="27.2" y="34.0" width="0.8" height="2.8" fill="#6e4630" fill-opacity="0.35"/><rect x="32.8" y="34.0" width="0.8" height="2.8" fill="#6e4630" fill-opacity="0.41"/><rect x="38.1" y="34.0" width="0.8" height="2.8" fill="#6e4630" fill-opacity="0.48"/><rect x="42.8" y="34.0" width="0.8" height="2.8" fill="#6e4630" fill-opacity="0.49"/><rect x="49.0" y="34.0" width="0.8" height="2.8" fill="#6e4630" fill-opacity="0.28"/><rect x="55.3" y="34.0" width="0.8" height="2.8" fill="#6e4630" fill-opacity="0.47"/><rect x="59.2" y="34.0" width="0.8" height="2.8" fill="#6e4630" fill-opacity="0.39"/><rect x="0" y="39.9" width="62" height="1.0" fill="#5e3622" fill-opacity="0.55"/><rect x="0" y="37.4" width="62" height="0.8" fill="#cf9a70" fill-opacity="0.35"/><rect x="3.6" y="37.4" width="0.8" height="2.8" fill="#6e4630" fill-opacity="0.36"/><rect x="8.8" y="37.4" width="0.8" height="2.8" fill="#6e4630" fill-opacity="0.51"/><rect x="14.7" y="37.4" width="0.8" height="2.8" fill="#6e4630" fill-opacity="0.53"/><rect x="19.6" y="37.4" width="0.8" height="2.8" fill="#6e4630" fill-opacity="0.45"/><rect x="23.7" y="37.4" width="0.8" height="2.8" fill="#6e4630" fill-opacity="0.47"/><rect x="29.7" y="37.4" width="0.8" height="2.8" fill="#6e4630" fill-opacity="0.44"/><rect x="35.4" y="37.4" width="0.8" height="2.8" fill="#6e4630" fill-opacity="0.31"/><rect x="41.6" y="37.4" width="0.8" height="2.8" fill="#6e4630" fill-opacity="0.54"/><rect x="48.0" y="37.4" width="0.8" height="2.8" fill="#6e4630" fill-opacity="0.41"/><rect x="53.9" y="37.4" width="0.8" height="2.8" fill="#6e4630" fill-opacity="0.35"/><rect x="60.1" y="37.4" width="0.8" height="2.8" fill="#6e4630" fill-opacity="0.51"/><rect x="0" y="43.3" width="62" height="1.0" fill="#5e3622" fill-opacity="0.55"/><rect x="0" y="40.8" width="62" height="0.8" fill="#cf9a70" fill-opacity="0.35"/><rect x="0.3" y="40.8" width="0.8" height="2.8" fill="#6e4630" fill-opacity="0.38"/><rect x="5.5" y="40.8" width="0.8" height="2.8" fill="#6e4630" fill-opacity="0.48"/><rect x="10.4" y="40.8" width="0.8" height="2.8" fill="#6e4630" fill-opacity="0.26"/><rect x="16.4" y="40.8" width="0.8" height="2.8" fill="#6e4630" fill-opacity="0.27"/><rect x="22.3" y="40.8" width="0.8" height="2.8" fill="#6e4630" fill-opacity="0.30"/><rect x="26.8" y="40.8" width="0.8" height="2.8" fill="#6e4630" fill-opacity="0.49"/><rect x="30.7" y="40.8" width="0.8" height="2.8" fill="#6e4630" fill-opacity="0.29"/><rect x="35.7" y="40.8" width="0.8" height="2.8" fill="#6e4630" fill-opacity="0.47"/><rect x="41.8" y="40.8" width="0.8" height="2.8" fill="#6e4630" fill-opacity="0.46"/><rect x="48.1" y="40.8" width="0.8" height="2.8" fill="#6e4630" fill-opacity="0.40"/><rect x="54.5" y="40.8" width="0.8" height="2.8" fill="#6e4630" fill-opacity="0.28"/><rect x="58.6" y="40.8" width="0.8" height="2.8" fill="#6e4630" fill-opacity="0.41"/><rect x="0" y="46.7" width="62" height="1.0" fill="#5e3622" fill-opacity="0.55"/><rect x="0" y="44.2" width="62" height="0.8" fill="#cf9a70" fill-opacity="0.35"/><rect x="2.9" y="44.2" width="0.8" height="2.8" fill="#6e4630" fill-opacity="0.44"/><rect x="8.0" y="44.2" width="0.8" height="2.8" fill="#6e4630" fill-opacity="0.50"/><rect x="13.2" y="44.2" width="0.8" height="2.8" fill="#6e4630" fill-opacity="0.34"/><rect x="17.8" y="44.2" width="0.8" height="2.8" fill="#6e4630" fill-opacity="0.50"/><rect x="24.0" y="44.2" width="0.8" height="2.8" fill="#6e4630" fill-opacity="0.31"/><rect x="30.1" y="44.2" width="0.8" height="2.8" fill="#6e4630" fill-opacity="0.54"/><rect x="35.1" y="44.2" width="0.8" height="2.8" fill="#6e4630" fill-opacity="0.42"/><rect x="39.2" y="44.2" width="0.8" height="2.8" fill="#6e4630" fill-opacity="0.41"/><rect x="44.2" y="44.2" width="0.8" height="2.8" fill="#6e4630" fill-opacity="0.43"/><rect x="47.8" y="44.2" width="0.8" height="2.8" fill="#6e4630" fill-opacity="0.54"/><rect x="52.9" y="44.2" width="0.8" height="2.8" fill="#6e4630" fill-opacity="0.37"/><rect x="58.8" y="44.2" width="0.8" height="2.8" fill="#6e4630" fill-opacity="0.42"/><rect x="0" y="50.1" width="62" height="1.0" fill="#5e3622" fill-opacity="0.55"/><rect x="0" y="47.6" width="62" height="0.8" fill="#cf9a70" fill-opacity="0.35"/><rect x="2.8" y="47.6" width="0.8" height="2.8" fill="#6e4630" fill-opacity="0.27"/><rect x="7.9" y="47.6" width="0.8" height="2.8" fill="#6e4630" fill-opacity="0.37"/><rect x="14.3" y="47.6" width="0.8" height="2.8" fill="#6e4630" fill-opacity="0.53"/><rect x="18.6" y="47.6" width="0.8" height="2.8" fill="#6e4630" fill-opacity="0.39"/><rect x="22.4" y="47.6" width="0.8" height="2.8" fill="#6e4630" fill-opacity="0.38"/><rect x="28.4" y="47.6" width="0.8" height="2.8" fill="#6e4630" fill-opacity="0.52"/><rect x="33.3" y="47.6" width="0.8" height="2.8" fill="#6e4630" fill-opacity="0.35"/><rect x="37.4" y="47.6" width="0.8" height="2.8" fill="#6e4630" fill-opacity="0.44"/><rect x="43.7" y="47.6" width="0.8" height="2.8" fill="#6e4630" fill-opacity="0.29"/><rect x="49.5" y="47.6" width="0.8" height="2.8" fill="#6e4630" fill-opacity="0.26"/><rect x="53.6" y="47.6" width="0.8" height="2.8" fill="#6e4630" fill-opacity="0.32"/><rect x="59.1" y="47.6" width="0.8" height="2.8" fill="#6e4630" fill-opacity="0.35"/><rect x="0" y="53.5" width="62" height="1.0" fill="#5e3622" fill-opacity="0.55"/><rect x="0" y="51.0" width="62" height="0.8" fill="#cf9a70" fill-opacity="0.35"/><rect x="2.5" y="51.0" width="0.8" height="2.8" fill="#6e4630" fill-opacity="0.28"/><rect x="8.2" y="51.0" width="0.8" height="2.8" fill="#6e4630" fill-opacity="0.29"/><rect x="13.2" y="51.0" width="0.8" height="2.8" fill="#6e4630" fill-opacity="0.33"/><rect x="17.3" y="51.0" width="0.8" height="2.8" fill="#6e4630" fill-opacity="0.41"/><rect x="22.1" y="51.0" width="0.8" height="2.8" fill="#6e4630" fill-opacity="0.36"/><rect x="26.8" y="51.0" width="0.8" height="2.8" fill="#6e4630" fill-opacity="0.41"/><rect x="30.8" y="51.0" width="0.8" height="2.8" fill="#6e4630" fill-opacity="0.31"/><rect x="36.2" y="51.0" width="0.8" height="2.8" fill="#6e4630" fill-opacity="0.44"/><rect x="41.3" y="51.0" width="0.8" height="2.8" fill="#6e4630" fill-opacity="0.51"/><rect x="46.6" y="51.0" width="0.8" height="2.8" fill="#6e4630" fill-opacity="0.51"/><rect x="50.8" y="51.0" width="0.8" height="2.8" fill="#6e4630" fill-opacity="0.47"/><rect x="56.8" y="51.0" width="0.8" height="2.8" fill="#6e4630" fill-opacity="0.52"/><rect x="0" y="56.9" width="62" height="1.0" fill="#5e3622" fill-opacity="0.55"/><rect x="0" y="54.4" width="62" height="0.8" fill="#cf9a70" fill-opacity="0.35"/><rect x="1.3" y="54.4" width="0.8" height="2.8" fill="#6e4630" fill-opacity="0.53"/><rect x="5.4" y="54.4" width="0.8" height="2.8" fill="#6e4630" fill-opacity="0.55"/><rect x="11.6" y="54.4" width="0.8" height="2.8" fill="#6e4630" fill-opacity="0.29"/><rect x="15.8" y="54.4" width="0.8" height="2.8" fill="#6e4630" fill-opacity="0.47"/><rect x="20.1" y="54.4" width="0.8" height="2.8" fill="#6e4630" fill-opacity="0.28"/><rect x="26.1" y="54.4" width="0.8" height="2.8" fill="#6e4630" fill-opacity="0.38"/><rect x="31.9" y="54.4" width="0.8" height="2.8" fill="#6e4630" fill-opacity="0.29"/><rect x="36.6" y="54.4" width="0.8" height="2.8" fill="#6e4630" fill-opacity="0.46"/><rect x="40.2" y="54.4" width="0.8" height="2.8" fill="#6e4630" fill-opacity="0.31"/><rect x="45.7" y="54.4" width="0.8" height="2.8" fill="#6e4630" fill-opacity="0.52"/><rect x="52.2" y="54.4" width="0.8" height="2.8" fill="#6e4630" fill-opacity="0.28"/><rect x="57.2" y="54.4" width="0.8" height="2.8" fill="#6e4630" fill-opacity="0.48"/><rect x="0" y="60.3" width="62" height="1.0" fill="#5e3622" fill-opacity="0.55"/><rect x="0" y="57.8" width="62" height="0.8" fill="#cf9a70" fill-opacity="0.35"/><rect x="2.7" y="57.8" width="0.8" height="2.8" fill="#6e4630" fill-opacity="0.31"/><rect x="6.5" y="57.8" width="0.8" height="2.8" fill="#6e4630" fill-opacity="0.28"/><rect x="10.1" y="57.8" width="0.8" height="2.8" fill="#6e4630" fill-opacity="0.42"/><rect x="15.1" y="57.8" width="0.8" height="2.8" fill="#6e4630" fill-opacity="0.42"/><rect x="19.1" y="57.8" width="0.8" height="2.8" fill="#6e4630" fill-opacity="0.31"/><rect x="23.2" y="57.8" width="0.8" height="2.8" fill="#6e4630" fill-opacity="0.50"/><rect x="29.6" y="57.8" width="0.8" height="2.8" fill="#6e4630" fill-opacity="0.53"/><rect x="33.4" y="57.8" width="0.8" height="2.8" fill="#6e4630" fill-opacity="0.27"/><rect x="39.8" y="57.8" width="0.8" height="2.8" fill="#6e4630" fill-opacity="0.39"/><rect x="45.6" y="57.8" width="0.8" height="2.8" fill="#6e4630" fill-opacity="0.35"/><rect x="50.5" y="57.8" width="0.8" height="2.8" fill="#6e4630" fill-opacity="0.40"/><rect x="55.3" y="57.8" width="0.8" height="2.8" fill="#6e4630" fill-opacity="0.43"/><rect x="58.8" y="57.8" width="0.8" height="2.8" fill="#6e4630" fill-opacity="0.46"/><rect x="0" y="63.7" width="62" height="1.0" fill="#5e3622" fill-opacity="0.55"/><rect x="0" y="61.2" width="62" height="0.8" fill="#cf9a70" fill-opacity="0.35"/><rect x="0.7" y="61.2" width="0.8" height="2.8" fill="#6e4630" fill-opacity="0.39"/><rect x="6.4" y="61.2" width="0.8" height="2.8" fill="#6e4630" fill-opacity="0.37"/><rect x="10.5" y="61.2" width="0.8" height="2.8" fill="#6e4630" fill-opacity="0.30"/><rect x="15.6" y="61.2" width="0.8" height="2.8" fill="#6e4630" fill-opacity="0.25"/><rect x="21.7" y="61.2" width="0.8" height="2.8" fill="#6e4630" fill-opacity="0.49"/><rect x="27.4" y="61.2" width="0.8" height="2.8" fill="#6e4630" fill-opacity="0.51"/><rect x="32.7" y="61.2" width="0.8" height="2.8" fill="#6e4630" fill-opacity="0.37"/><rect x="38.0" y="61.2" width="0.8" height="2.8" fill="#6e4630" fill-opacity="0.40"/><rect x="44.5" y="61.2" width="0.8" height="2.8" fill="#6e4630" fill-opacity="0.49"/><rect x="48.8" y="61.2" width="0.8" height="2.8" fill="#6e4630" fill-opacity="0.52"/><rect x="54.5" y="61.2" width="0.8" height="2.8" fill="#6e4630" fill-opacity="0.48"/><rect x="60.4" y="61.2" width="0.8" height="2.8" fill="#6e4630" fill-opacity="0.37"/><rect x="53.7" y="42.4" width="2.5" height="0.9" fill="#7a5038" fill-opacity="0.50"/><rect x="44.1" y="4.3" width="1.5" height="0.9" fill="#dcae88" fill-opacity="0.35"/><rect x="54.2" y="60.4" width="2.9" height="0.9" fill="#6a3f28" fill-opacity="0.42"/><rect x="57.6" y="40.6" width="1.4" height="0.9" fill="#dcae88" fill-opacity="0.58"/><rect x="32.5" y="23.8" width="3.1" height="0.9" fill="#7a5038" fill-opacity="0.65"/><rect x="46.5" y="59.8" width="0.7" height="0.9" fill="#5e3a26" fill-opacity="0.35"/><rect x="14.5" y="27.1" width="1.9" height="0.9" fill="#7a5038" fill-opacity="0.62"/><rect x="0.7" y="15.8" width="1.3" height="0.9" fill="#d6a47c" fill-opacity="0.58"/><rect x="31.0" y="59.0" width="2.0" height="0.9" fill="#6a3f28" fill-opacity="0.62"/><rect x="49.4" y="4.6" width="2.1" height="0.9" fill="#6a3f28" fill-opacity="0.49"/><rect x="57.3" y="23.5" width="3.0" height="0.9" fill="#dcae88" fill-opacity="0.57"/><rect x="36.4" y="26.2" width="1.8" height="0.9" fill="#d6a47c" fill-opacity="0.56"/><rect x="36.5" y="22.3" width="1.3" height="0.9" fill="#d6a47c" fill-opacity="0.58"/><rect x="17.3" y="43.7" width="1.3" height="0.9" fill="#6a3f28" fill-opacity="0.69"/><rect x="35.7" y="38.6" width="1.6" height="0.9" fill="#dcae88" fill-opacity="0.33"/><rect x="19.2" y="24.3" width="2.1" height="0.9" fill="#d6a47c" fill-opacity="0.34"/><rect x="55.2" y="26.2" width="1.8" height="0.9" fill="#7a5038" fill-opacity="0.32"/><rect x="6.0" y="49.4" width="2.9" height="0.9" fill="#7a5038" fill-opacity="0.79"/><rect x="49.8" y="36.8" width="0.9" height="0.9" fill="#5e3a26" fill-opacity="0.51"/><rect x="7.2" y="52.5" width="1.5" height="0.9" fill="#7a5038" fill-opacity="0.36"/><rect x="27.0" y="40.7" width="1.7" height="0.9" fill="#d6a47c" fill-opacity="0.62"/><rect x="41.6" y="22.2" width="2.5" height="0.9" fill="#7a5038" fill-opacity="0.78"/><rect x="44.8" y="14.5" width="0.9" height="0.9" fill="#d6a47c" fill-opacity="0.69"/><rect x="38.1" y="21.9" width="1.3" height="0.9" fill="#5e3a26" fill-opacity="0.65"/><rect x="11.6" y="17.0" width="1.2" height="0.9" fill="#7a5038" fill-opacity="0.55"/><rect x="39.8" y="12.0" width="2.3" height="0.9" fill="#6a3f28" fill-opacity="0.30"/><rect x="15.8" y="1.6" width="0.7" height="0.9" fill="#7a5038" fill-opacity="0.57"/><rect x="4.4" y="5.3" width="2.3" height="0.9" fill="#5e3a26" fill-opacity="0.42"/><rect x="59.9" y="29.5" width="1.5" height="0.9" fill="#d6a47c" fill-opacity="0.47"/><rect x="45.4" y="51.2" width="0.8" height="0.9" fill="#6a3f28" fill-opacity="0.52"/><rect x="50.1" y="51.1" width="2.5" height="0.9" fill="#dcae88" fill-opacity="0.51"/><rect x="15.7" y="49.4" width="1.5" height="0.9" fill="#5e3a26" fill-opacity="0.46"/><rect x="33.5" y="45.5" width="2.9" height="0.9" fill="#dcae88" fill-opacity="0.63"/><rect x="35.4" y="28.2" width="1.4" height="0.9" fill="#5e3a26" fill-opacity="0.34"/><rect x="34.4" y="29.6" width="2.3" height="0.9" fill="#d6a47c" fill-opacity="0.71"/><rect x="0.6" y="18.9" width="2.9" height="0.9" fill="#5e3a26" fill-opacity="0.34"/><rect x="18.5" y="44.2" width="2.3" height="0.9" fill="#d6a47c" fill-opacity="0.74"/><rect x="13.3" y="40.1" width="1.4" height="0.9" fill="#6a3f28" fill-opacity="0.46"/><rect x="26.9" y="36.3" width="2.9" height="0.9" fill="#d6a47c" fill-opacity="0.52"/><rect x="49.0" y="18.6" width="1.4" height="0.9" fill="#dcae88" fill-opacity="0.78"/><rect x="44.5" y="31.5" width="0.8" height="0.9" fill="#d6a47c" fill-opacity="0.31"/><rect x="41.3" y="35.7" width="2.6" height="0.9" fill="#5e3a26" fill-opacity="0.48"/><rect x="23.8" y="9.4" width="2.1" height="0.9" fill="#7a5038" fill-opacity="0.39"/><rect x="46.3" y="53.7" width="1.3" height="0.9" fill="#6a3f28" fill-opacity="0.41"/><rect x="3.5" y="9.7" width="1.3" height="0.9" fill="#6a3f28" fill-opacity="0.63"/><rect x="49.1" y="3.9" width="2.0" height="0.9" fill="#5e3a26" fill-opacity="0.34"/><rect x="5.0" y="45.0" width="2.8" height="0.9" fill="#6a3f28" fill-opacity="0.31"/><rect x="39.9" y="5.9" width="2.6" height="0.9" fill="#dcae88" fill-opacity="0.42"/><rect x="13.4" y="46.7" width="1.9" height="0.9" fill="#dcae88" fill-opacity="0.50"/><rect x="20.6" y="59.1" width="2.3" height="0.9" fill="#dcae88" fill-opacity="0.54"/><rect x="49.1" y="4.4" width="2.1" height="0.9" fill="#6a3f28" fill-opacity="0.51"/><rect x="50.4" y="40.7" width="2.7" height="0.9" fill="#dcae88" fill-opacity="0.72"/><rect x="54.2" y="58.4" width="2.2" height="0.9" fill="#5e3a26" fill-opacity="0.48"/><rect x="0.6" y="6.7" width="2.9" height="0.9" fill="#7a5038" fill-opacity="0.42"/><rect x="9.9" y="38.7" width="2.3" height="0.9" fill="#d6a47c" fill-opacity="0.40"/><rect x="25.9" y="17.8" width="3.0" height="0.9" fill="#6a3f28" fill-opacity="0.54"/><rect x="44.6" y="18.5" width="1.0" height="0.9" fill="#7a5038" fill-opacity="0.76"/><rect x="45.9" y="1.0" width="1.8" height="0.9" fill="#6a3f28" fill-opacity="0.46"/><rect x="12.1" y="21.9" width="2.1" height="0.9" fill="#5e3a26" fill-opacity="0.66"/><rect x="36.3" y="13.7" width="1.1" height="0.9" fill="#d6a47c" fill-opacity="0.50"/><rect x="55.6" y="57.2" width="2.2" height="0.9" fill="#5e3a26" fill-opacity="0.54"/><rect x="15.9" y="54.1" width="2.9" height="0.9" fill="#d6a47c" fill-opacity="0.63"/><rect x="47.1" y="5.6" width="2.8" height="0.9" fill="#dcae88" fill-opacity="0.32"/><rect x="57.8" y="48.9" width="1.6" height="0.9" fill="#5e3a26" fill-opacity="0.70"/><rect x="47.2" y="48.0" width="0.7" height="0.9" fill="#7a5038" fill-opacity="0.75"/><rect x="53.3" y="55.2" width="1.7" height="0.9" fill="#7a5038" fill-opacity="0.66"/><rect x="37.0" y="9.6" width="1.0" height="0.9" fill="#d6a47c" fill-opacity="0.37"/><rect x="55.4" y="49.4" width="0.9" height="0.9" fill="#5e3a26" fill-opacity="0.43"/><rect x="32.6" y="9.2" width="2.5" height="0.9" fill="#6a3f28" fill-opacity="0.40"/><rect x="55.9" y="9.1" width="0.9" height="0.9" fill="#d6a47c" fill-opacity="0.43"/><rect x="43.7" y="5.9" width="1.8" height="0.9" fill="#dcae88" fill-opacity="0.34"/><rect x="45.7" y="33.1" width="1.9" height="0.9" fill="#6a3f28" fill-opacity="0.69"/><rect x="25.4" y="55.9" width="0.8" height="0.9" fill="#dcae88" fill-opacity="0.40"/><rect x="33.1" y="32.1" width="1.0" height="0.9" fill="#d6a47c" fill-opacity="0.46"/><rect x="24.7" y="33.9" width="3.1" height="0.9" fill="#6a3f28" fill-opacity="0.48"/><rect x="41.9" y="6.5" width="1.6" height="0.9" fill="#dcae88" fill-opacity="0.67"/><rect x="47.8" y="7.4" width="1.7" height="0.9" fill="#dcae88" fill-opacity="0.66"/><rect x="29.0" y="17.9" width="0.9" height="0.9" fill="#6a3f28" fill-opacity="0.73"/><rect x="51.5" y="43.9" width="2.9" height="0.9" fill="#7a5038" fill-opacity="0.45"/><rect x="22.9" y="32.9" width="1.3" height="0.9" fill="#d6a47c" fill-opacity="0.68"/><rect x="33.9" y="5.3" width="1.1" height="0.9" fill="#dcae88" fill-opacity="0.67"/><rect x="20.1" y="57.6" width="2.0" height="0.9" fill="#d6a47c" fill-opacity="0.52"/><rect x="23.3" y="6.2" width="2.2" height="0.9" fill="#7a5038" fill-opacity="0.64"/><rect x="43.2" y="11.0" width="1.6" height="0.9" fill="#dcae88" fill-opacity="0.60"/><rect x="5.5" y="13.8" width="1.0" height="0.9" fill="#6a3f28" fill-opacity="0.52"/><rect x="47.0" y="20.8" width="2.7" height="0.9" fill="#5e3a26" fill-opacity="0.37"/><rect x="12.5" y="9.0" width="2.3" height="0.9" fill="#dcae88" fill-opacity="0.47"/><rect x="25.1" y="0.9" width="1.6" height="0.9" fill="#d6a47c" fill-opacity="0.79"/><rect x="48.2" y="40.3" width="2.1" height="0.9" fill="#6a3f28" fill-opacity="0.43"/><rect x="11.5" y="18.7" width="1.7" height="0.9" fill="#5e3a26" fill-opacity="0.49"/><rect x="31.1" y="48.1" width="2.7" height="0.9" fill="#5e3a26" fill-opacity="0.66"/><rect x="15.5" y="32.9" width="1.3" height="0.9" fill="#7a5038" fill-opacity="0.48"/><rect x="30.5" y="8.6" width="2.4" height="0.9" fill="#5e3a26" fill-opacity="0.80"/><rect x="43.1" y="57.1" width="2.0" height="0.9" fill="#6a3f28" fill-opacity="0.61"/><rect x="12.1" y="5.1" width="1.2" height="0.9" fill="#5e3a26" fill-opacity="0.51"/><rect x="20.3" y="5.6" width="2.8" height="0.9" fill="#d6a47c" fill-opacity="0.53"/><rect x="7.6" y="59.4" width="0.9" height="0.9" fill="#5e3a26" fill-opacity="0.57"/><rect x="34.2" y="34.2" width="1.3" height="0.9" fill="#d6a47c" fill-opacity="0.60"/><rect x="7.5" y="50.3" width="1.3" height="0.9" fill="#d6a47c" fill-opacity="0.42"/><rect x="35.0" y="50.7" width="1.1" height="0.9" fill="#5e3a26" fill-opacity="0.71"/><rect x="27.7" y="24.6" width="2.6" height="0.9" fill="#7a5038" fill-opacity="0.45"/><rect x="40.9" y="45.0" width="1.6" height="0.9" fill="#5e3a26" fill-opacity="0.62"/><rect x="46.6" y="9.7" width="1.6" height="0.9" fill="#6a3f28" fill-opacity="0.37"/><rect x="23.6" y="34.7" width="1.0" height="0.9" fill="#5e3a26" fill-opacity="0.37"/><rect x="14.9" y="56.8" width="0.7" height="0.9" fill="#6a3f28" fill-opacity="0.66"/><rect x="48.0" y="24.6" width="1.8" height="0.9" fill="#6a3f28" fill-opacity="0.53"/><rect x="25.1" y="38.1" width="2.3" height="0.9" fill="#dcae88" fill-opacity="0.68"/><rect x="29.6" y="60.7" width="2.7" height="0.9" fill="#dcae88" fill-opacity="0.71"/><rect x="7.2" y="7.0" width="2.9" height="0.9" fill="#d6a47c" fill-opacity="0.56"/><rect x="26.4" y="55.2" width="1.4" height="0.9" fill="#6a3f28" fill-opacity="0.45"/><rect x="37.6" y="26.4" width="1.5" height="0.9" fill="#d6a47c" fill-opacity="0.68"/><rect x="18.6" y="36.2" width="0.8" height="0.9" fill="#6a3f28" fill-opacity="0.72"/><rect x="14.8" y="53.3" width="3.0" height="0.9" fill="#dcae88" fill-opacity="0.65"/><rect x="32.1" y="14.6" width="1.4" height="0.9" fill="#dcae88" fill-opacity="0.77"/><rect x="53.7" y="61.0" width="2.4" height="0.9" fill="#d6a47c" fill-opacity="0.73"/><rect x="25.7" y="49.1" width="1.2" height="0.9" fill="#dcae88" fill-opacity="0.58"/><rect x="55.1" y="6.0" width="2.6" height="0.9" fill="#6a3f28" fill-opacity="0.74"/><rect x="35.1" y="27.6" width="1.3" height="0.9" fill="#d6a47c" fill-opacity="0.31"/><rect x="10.5" y="26.9" width="1.7" height="0.9" fill="#5e3a26" fill-opacity="0.50"/><rect x="21.7" y="35.7" width="0.7" height="0.9" fill="#6a3f28" fill-opacity="0.53"/><rect x="19.1" y="19.8" width="1.0" height="0.9" fill="#dcae88" fill-opacity="0.74"/><rect x="12.4" y="52.4" width="2.3" height="0.9" fill="#6a3f28" fill-opacity="0.40"/><rect x="51.1" y="21.6" width="1.8" height="0.9" fill="#7a5038" fill-opacity="0.62"/><rect x="42.6" y="34.1" width="1.9" height="0.9" fill="#7a5038" fill-opacity="0.40"/><rect x="53.7" y="3.1" width="0.9" height="0.9" fill="#d6a47c" fill-opacity="0.78"/><rect x="16.7" y="25.6" width="2.8" height="0.9" fill="#d6a47c" fill-opacity="0.65"/><rect x="57.2" y="27.2" width="0.8" height="0.9" fill="#7a5038" fill-opacity="0.73"/><rect x="7.4" y="42.2" width="1.3" height="0.9" fill="#7a5038" fill-opacity="0.55"/><rect x="18.0" y="16.7" width="2.6" height="0.9" fill="#5e3a26" fill-opacity="0.74"/><rect x="36.0" y="14.0" width="1.4" height="0.9" fill="#7a5038" fill-opacity="0.63"/><rect x="16.9" y="39.0" width="0.8" height="0.9" fill="#6a3f28" fill-opacity="0.52"/><rect x="32.2" y="32.4" width="0.7" height="0.9" fill="#5e3a26" fill-opacity="0.59"/><rect x="32.8" y="25.8" width="2.0" height="0.9" fill="#7a5038" fill-opacity="0.44"/><rect x="46.1" y="15.0" width="1.3" height="0.9" fill="#5e3a26" fill-opacity="0.31"/><rect x="48.2" y="9.2" width="2.8" height="0.9" fill="#5e3a26" fill-opacity="0.53"/><rect x="45.8" y="23.5" width="2.9" height="0.9" fill="#dcae88" fill-opacity="0.33"/><rect x="3.9" y="47.4" width="2.9" height="0.9" fill="#d6a47c" fill-opacity="0.63"/><rect x="47.8" y="31.5" width="1.9" height="0.9" fill="#5e3a26" fill-opacity="0.67"/><rect x="32.4" y="36.2" width="2.5" height="0.9" fill="#6a3f28" fill-opacity="0.60"/><rect x="14.4" y="26.9" width="2.5" height="0.9" fill="#7a5038" fill-opacity="0.43"/><rect x="33.2" y="52.0" width="2.1" height="0.9" fill="#d6a47c" fill-opacity="0.32"/><rect x="36.4" y="43.6" width="2.0" height="0.9" fill="#7a5038" fill-opacity="0.46"/><rect x="37.1" y="37.1" width="2.6" height="0.9" fill="#5e3a26" fill-opacity="0.52"/><rect x="16.0" y="48.7" width="0.8" height="0.9" fill="#7a5038" fill-opacity="0.58"/><rect x="33.1" y="48.3" width="1.2" height="0.9" fill="#7a5038" fill-opacity="0.33"/><rect x="25.9" y="42.4" width="2.6" height="0.9" fill="#5e3a26" fill-opacity="0.69"/><rect x="46.7" y="30.4" width="2.2" height="0.9" fill="#5e3a26" fill-opacity="0.39"/><rect x="15.5" y="9.7" width="2.3" height="0.9" fill="#5e3a26" fill-opacity="0.69"/><rect x="3.7" y="25.0" width="1.5" height="0.9" fill="#7a5038" fill-opacity="0.65"/><rect x="58.4" y="7.8" width="2.5" height="0.9" fill="#5e3a26" fill-opacity="0.79"/><rect x="8.8" y="27.8" width="2.5" height="0.9" fill="#6a3f28" fill-opacity="0.30"/><rect x="25.0" y="32.1" width="0.8" height="0.9" fill="#5e3a26" fill-opacity="0.45"/><rect x="25.9" y="4.7" width="0.7" height="0.9" fill="#5e3a26" fill-opacity="0.41"/><rect x="15.4" y="33.7" width="1.2" height="0.9" fill="#dcae88" fill-opacity="0.34"/><rect x="13.9" y="18.8" width="3.0" height="0.9" fill="#5e3a26" fill-opacity="0.41"/><rect x="9.8" y="35.7" width="3.1" height="0.9" fill="#d6a47c" fill-opacity="0.58"/><rect x="55.6" y="53.9" width="2.9" height="0.9" fill="#7a5038" fill-opacity="0.53"/><rect x="24.0" y="51.4" width="1.6" height="0.9" fill="#6a3f28" fill-opacity="0.41"/><rect x="21.2" y="11.2" width="2.0" height="0.9" fill="#7a5038" fill-opacity="0.54"/><rect x="24.4" y="36.2" width="2.5" height="0.9" fill="#dcae88" fill-opacity="0.52"/><rect x="60.6" y="41.4" width="0.8" height="0.8" fill="#6080a0" fill-opacity="0.7"/><rect x="12.5" y="23.4" width="0.8" height="0.8" fill="#c02020" fill-opacity="0.7"/><rect x="2.9" y="16.9" width="0.8" height="0.8" fill="#d0d060" fill-opacity="0.7"/><rect x="37.9" y="31.7" width="0.8" height="0.8" fill="#d0d060" fill-opacity="0.7"/><rect x="31.2" y="34.6" width="0.8" height="0.8" fill="#80a040" fill-opacity="0.7"/><rect x="16.4" y="22.0" width="0.8" height="0.8" fill="#80a040" fill-opacity="0.7"/><rect x="44.4" y="47.4" width="0.8" height="0.8" fill="#80a040" fill-opacity="0.7"/><rect x="46.7" y="44.1" width="0.8" height="0.8" fill="#c02020" fill-opacity="0.7"/><rect x="1.2" y="19.6" width="0.8" height="0.8" fill="#6080a0" fill-opacity="0.7"/><rect x="27.4" y="52.1" width="0.8" height="0.8" fill="#6080a0" fill-opacity="0.7"/><rect x="19.8" y="47.0" width="0.8" height="0.8" fill="#c02020" fill-opacity="0.7"/><rect x="18.4" y="37.1" width="0.8" height="0.8" fill="#6080a0" fill-opacity="0.7"/><rect x="2.5" y="9.2" width="0.8" height="0.8" fill="#80a040" fill-opacity="0.7"/><rect x="1.9" y="19.0" width="0.8" height="0.8" fill="#6080a0" fill-opacity="0.7"/><rect x="29.2" y="42.3" width="0.8" height="0.8" fill="#d0d060" fill-opacity="0.7"/><rect x="19.1" y="27.6" width="0.8" height="0.8" fill="#6080a0" fill-opacity="0.7"/><rect x="9.0" y="12.5" width="0.8" height="0.8" fill="#d0d060" fill-opacity="0.7"/><rect x="32.6" y="27.4" width="0.8" height="0.8" fill="#80a040" fill-opacity="0.7"/><rect x="23.6" y="52.8" width="0.8" height="0.8" fill="#80a040" fill-opacity="0.7"/><rect x="6.3" y="22.6" width="0.8" height="0.8" fill="#80a040" fill-opacity="0.7"/><rect x="8.6" y="51.7" width="0.8" height="0.8" fill="#6080a0" fill-opacity="0.7"/><rect x="34.5" y="49.3" width="0.8" height="0.8" fill="#d0d060" fill-opacity="0.7"/><rect x="40.3" y="4.1" width="0.8" height="0.8" fill="#80a040" fill-opacity="0.7"/><rect x="34.0" y="21.6" width="0.8" height="0.8" fill="#c02020" fill-opacity="0.7"/><rect x="58.3" y="53.0" width="0.8" height="0.8" fill="#80a040" fill-opacity="0.7"/></pattern><pattern id="tn" patternUnits="userSpaceOnUse" width="61.2" height="61.2"><rect width="62" height="62" fill="#1a1ae6"/><rect x="0.0" y="0.5" width="3.6" height="1.6" fill="#48ccff" fill-opacity="0.96"/><rect x="3.9" y="0.2" width="3.4" height="1.6" fill="#48ccff" fill-opacity="0.93"/><rect x="7.6" y="0.2" width="5.2" height="1.6" fill="#48ccff" fill-opacity="0.86"/><rect x="14.4" y="0.2" width="5.7" height="1.6" fill="#48ccff" fill-opacity="0.79"/><rect x="21.8" y="0.7" width="6.9" height="1.6" fill="#48ccff" fill-opacity="0.94"/><rect x="30.6" y="0.7" width="6.8" height="1.6" fill="#48ccff" fill-opacity="0.87"/><rect x="38.9" y="0.3" width="5.4" height="1.6" fill="#48ccff" fill-opacity="0.86"/><rect x="44.9" y="0.6" width="2.7" height="1.6" fill="#48ccff" fill-opacity="1.00"/><rect x="49.0" y="0.1" width="5.3" height="1.6" fill="#48ccff" fill-opacity="0.92"/><rect x="55.2" y="0.4" width="3.1" height="1.6" fill="#48ccff" fill-opacity="0.81"/><rect x="59.1" y="0.1" width="5.6" height="1.6" fill="#48ccff" fill-opacity="0.87"/><rect x="0.0" y="3.3" width="3.4" height="1.6" fill="#48ccff" fill-opacity="0.77"/><rect x="4.7" y="3.6" width="7.7" height="1.6" fill="#48ccff" fill-opacity="0.98"/><rect x="12.5" y="3.7" width="2.9" height="1.6" fill="#48ccff" fill-opacity="0.91"/><rect x="21.9" y="3.7" width="6.8" height="1.6" fill="#48ccff" fill-opacity="0.84"/><rect x="34.2" y="3.5" width="6.3" height="1.6" fill="#48ccff" fill-opacity="0.90"/><rect x="41.7" y="3.3" width="4.2" height="1.6" fill="#48ccff" fill-opacity="0.82"/><rect x="46.2" y="3.2" width="6.1" height="1.6" fill="#48ccff" fill-opacity="0.77"/><rect x="53.6" y="3.0" width="5.3" height="1.6" fill="#48ccff" fill-opacity="0.86"/><rect x="59.6" y="3.8" width="2.6" height="1.6" fill="#48ccff" fill-opacity="0.78"/><rect x="0.0" y="6.1" width="3.6" height="1.6" fill="#48ccff" fill-opacity="0.87"/><rect x="4.3" y="6.3" width="7.0" height="1.6" fill="#48ccff" fill-opacity="0.87"/><rect x="13.3" y="6.5" width="5.1" height="1.6" fill="#48ccff" fill-opacity="0.82"/><rect x="24.9" y="6.7" width="3.5" height="1.6" fill="#48ccff" fill-opacity="0.81"/><rect x="29.7" y="6.2" width="4.1" height="1.6" fill="#48ccff" fill-opacity="0.80"/><rect x="34.5" y="6.1" width="2.2" height="1.6" fill="#48ccff" fill-opacity="0.94"/><rect x="37.9" y="6.2" width="2.0" height="1.6" fill="#48ccff" fill-opacity="0.87"/><rect x="41.1" y="6.3" width="4.0" height="1.6" fill="#48ccff" fill-opacity="0.78"/><rect x="46.8" y="6.2" width="2.7" height="1.6" fill="#48ccff" fill-opacity="0.83"/><rect x="50.2" y="6.3" width="2.2" height="1.6" fill="#48ccff" fill-opacity="0.86"/><rect x="54.2" y="6.4" width="7.9" height="1.6" fill="#48ccff" fill-opacity="0.78"/><rect x="5.0" y="9.2" width="2.8" height="1.6" fill="#48ccff" fill-opacity="0.97"/><rect x="8.1" y="9.3" width="4.9" height="1.6" fill="#48ccff" fill-opacity="0.95"/><rect x="13.4" y="9.7" width="6.3" height="1.6" fill="#48ccff" fill-opacity="0.88"/><rect x="21.5" y="9.5" width="4.6" height="1.6" fill="#48ccff" fill-opacity="0.96"/><rect x="28.0" y="9.4" width="2.7" height="1.6" fill="#48ccff" fill-opacity="0.95"/><rect x="36.1" y="9.0" width="2.5" height="1.6" fill="#48ccff" fill-opacity="0.93"/><rect x="47.2" y="9.5" width="6.9" height="1.6" fill="#48ccff" fill-opacity="0.96"/><rect x="55.4" y="9.1" width="3.7" height="1.6" fill="#48ccff" fill-opacity="0.83"/><rect x="0.0" y="12.6" width="4.8" height="1.6" fill="#48ccff" fill-opacity="0.86"/><rect x="4.8" y="12.3" width="2.2" height="1.6" fill="#48ccff" fill-opacity="0.98"/><rect x="15.4" y="12.4" width="8.0" height="1.6" fill="#48ccff" fill-opacity="0.82"/><rect x="24.3" y="12.2" width="7.4" height="1.6" fill="#48ccff" fill-opacity="0.84"/><rect x="32.7" y="12.0" width="3.1" height="1.6" fill="#48ccff" fill-opacity="0.96"/><rect x="36.2" y="12.2" width="2.6" height="1.6" fill="#48ccff" fill-opacity="0.97"/><rect x="39.8" y="12.2" width="5.1" height="1.6" fill="#48ccff" fill-opacity="0.94"/><rect x="50.8" y="12.7" width="7.2" height="1.6" fill="#48ccff" fill-opacity="0.79"/><rect x="0.0" y="15.2" width="4.9" height="1.6" fill="#48ccff" fill-opacity="0.88"/><rect x="4.9" y="15.3" width="4.7" height="1.6" fill="#48ccff" fill-opacity="0.81"/><rect x="9.7" y="15.7" width="6.2" height="1.6" fill="#48ccff" fill-opacity="0.94"/><rect x="25.3" y="15.6" width="7.0" height="1.6" fill="#48ccff" fill-opacity="0.92"/><rect x="33.4" y="15.6" width="3.5" height="1.6" fill="#48ccff" fill-opacity="0.90"/><rect x="37.1" y="15.4" width="5.9" height="1.6" fill="#48ccff" fill-opacity="0.94"/><rect x="44.7" y="15.4" width="4.3" height="1.6" fill="#48ccff" fill-opacity="0.89"/><rect x="49.8" y="15.8" width="7.6" height="1.6" fill="#48ccff" fill-opacity="0.83"/><rect x="58.7" y="15.3" width="7.5" height="1.6" fill="#48ccff" fill-opacity="0.77"/><rect x="0.0" y="18.6" width="4.5" height="1.6" fill="#48ccff" fill-opacity="1.00"/><rect x="5.4" y="18.6" width="4.5" height="1.6" fill="#48ccff" fill-opacity="0.77"/><rect x="10.3" y="18.2" width="2.9" height="1.6" fill="#48ccff" fill-opacity="0.99"/><rect x="13.6" y="18.2" width="7.6" height="1.6" fill="#48ccff" fill-opacity="0.99"/><rect x="21.3" y="18.1" width="2.7" height="1.6" fill="#48ccff" fill-opacity="0.85"/><rect x="24.4" y="18.6" width="3.0" height="1.6" fill="#48ccff" fill-opacity="0.76"/><rect x="34.6" y="18.6" width="6.3" height="1.6" fill="#48ccff" fill-opacity="0.96"/><rect x="41.1" y="18.4" width="2.3" height="1.6" fill="#48ccff" fill-opacity="0.88"/><rect x="45.0" y="18.3" width="3.0" height="1.6" fill="#48ccff" fill-opacity="0.86"/><rect x="48.6" y="18.4" width="3.7" height="1.6" fill="#48ccff" fill-opacity="0.98"/><rect x="52.8" y="18.5" width="6.3" height="1.6" fill="#48ccff" fill-opacity="0.79"/><rect x="60.8" y="18.6" width="7.8" height="1.6" fill="#48ccff" fill-opacity="0.80"/><rect x="0.0" y="21.1" width="2.6" height="1.6" fill="#48ccff" fill-opacity="0.93"/><rect x="3.8" y="21.2" width="4.5" height="1.6" fill="#48ccff" fill-opacity="0.83"/><rect x="11.2" y="21.7" width="2.6" height="1.6" fill="#48ccff" fill-opacity="0.86"/><rect x="14.7" y="21.4" width="2.8" height="1.6" fill="#48ccff" fill-opacity="0.81"/><rect x="17.8" y="21.3" width="7.4" height="1.6" fill="#48ccff" fill-opacity="0.94"/><rect x="26.7" y="21.5" width="2.6" height="1.6" fill="#48ccff" fill-opacity="0.91"/><rect x="31.2" y="21.6" width="6.8" height="1.6" fill="#48ccff" fill-opacity="0.87"/><rect x="39.1" y="21.3" width="6.9" height="1.6" fill="#48ccff" fill-opacity="0.76"/><rect x="47.6" y="21.2" width="4.0" height="1.6" fill="#48ccff" fill-opacity="0.89"/><rect x="52.5" y="21.4" width="7.0" height="1.6" fill="#48ccff" fill-opacity="0.95"/><rect x="60.4" y="21.6" width="5.2" height="1.6" fill="#48ccff" fill-opacity="0.94"/><rect x="0.0" y="24.2" width="5.3" height="1.6" fill="#48ccff" fill-opacity="0.81"/><rect x="11.3" y="24.4" width="4.1" height="1.6" fill="#48ccff" fill-opacity="0.96"/><rect x="15.7" y="24.5" width="6.6" height="1.6" fill="#48ccff" fill-opacity="0.76"/><rect x="23.1" y="24.5" width="6.8" height="1.6" fill="#48ccff" fill-opacity="0.86"/><rect x="30.0" y="24.6" width="6.2" height="1.6" fill="#48ccff" fill-opacity="0.90"/><rect x="37.0" y="24.8" width="7.2" height="1.6" fill="#48ccff" fill-opacity="0.77"/><rect x="46.2" y="24.7" width="5.5" height="1.6" fill="#48ccff" fill-opacity="0.88"/><rect x="52.8" y="24.5" width="2.4" height="1.6" fill="#48ccff" fill-opacity="0.81"/><rect x="0.0" y="27.7" width="4.8" height="1.6" fill="#48ccff" fill-opacity="0.80"/><rect x="11.5" y="27.0" width="6.8" height="1.6" fill="#48ccff" fill-opacity="0.89"/><rect x="26.4" y="27.2" width="5.0" height="1.6" fill="#48ccff" fill-opacity="0.87"/><rect x="31.6" y="27.4" width="6.3" height="1.6" fill="#48ccff" fill-opacity="0.79"/><rect x="39.0" y="27.5" width="2.3" height="1.6" fill="#48ccff" fill-opacity="0.93"/><rect x="49.5" y="27.1" width="5.8" height="1.6" fill="#48ccff" fill-opacity="0.78"/><rect x="55.8" y="27.6" width="5.1" height="1.6" fill="#48ccff" fill-opacity="0.89"/><rect x="0.0" y="30.1" width="6.3" height="1.6" fill="#48ccff" fill-opacity="0.90"/><rect x="6.8" y="30.6" width="3.9" height="1.6" fill="#48ccff" fill-opacity="0.78"/><rect x="11.6" y="30.7" width="3.4" height="1.6" fill="#48ccff" fill-opacity="0.82"/><rect x="16.4" y="30.2" width="4.8" height="1.6" fill="#48ccff" fill-opacity="0.88"/><rect x="22.8" y="30.6" width="5.6" height="1.6" fill="#48ccff" fill-opacity="0.90"/><rect x="29.3" y="30.6" width="3.4" height="1.6" fill="#48ccff" fill-opacity="0.82"/><rect x="33.0" y="30.1" width="7.3" height="1.6" fill="#48ccff" fill-opacity="0.97"/><rect x="40.5" y="30.5" width="4.2" height="1.6" fill="#48ccff" fill-opacity="0.97"/><rect x="51.4" y="30.6" width="6.3" height="1.6" fill="#48ccff" fill-opacity="0.99"/><rect x="58.3" y="30.7" width="6.4" height="1.6" fill="#48ccff" fill-opacity="0.94"/><rect x="0.0" y="33.8" width="7.2" height="1.6" fill="#48ccff" fill-opacity="0.79"/><rect x="8.4" y="33.5" width="2.4" height="1.6" fill="#48ccff" fill-opacity="0.82"/><rect x="12.5" y="33.2" width="4.5" height="1.6" fill="#48ccff" fill-opacity="0.89"/><rect x="17.7" y="33.8" width="2.3" height="1.6" fill="#48ccff" fill-opacity="0.87"/><rect x="21.4" y="33.5" width="4.6" height="1.6" fill="#48ccff" fill-opacity="0.80"/><rect x="26.2" y="33.0" width="5.7" height="1.6" fill="#48ccff" fill-opacity="0.99"/><rect x="31.9" y="33.6" width="3.0" height="1.6" fill="#48ccff" fill-opacity="0.94"/><rect x="41.3" y="33.1" width="7.8" height="1.6" fill="#48ccff" fill-opacity="0.94"/><rect x="50.6" y="33.7" width="6.0" height="1.6" fill="#48ccff" fill-opacity="0.88"/><rect x="59.7" y="33.7" width="3.3" height="1.6" fill="#48ccff" fill-opacity="0.96"/><rect x="0.0" y="36.6" width="5.8" height="1.6" fill="#48ccff" fill-opacity="0.80"/><rect x="7.7" y="36.6" width="7.8" height="1.6" fill="#48ccff" fill-opacity="0.81"/><rect x="15.7" y="36.2" width="7.2" height="1.6" fill="#48ccff" fill-opacity="0.89"/><rect x="23.1" y="36.7" width="4.5" height="1.6" fill="#48ccff" fill-opacity="0.78"/><rect x="29.4" y="36.3" width="2.6" height="1.6" fill="#48ccff" fill-opacity="0.79"/><rect x="32.2" y="36.2" width="5.9" height="1.6" fill="#48ccff" fill-opacity="0.88"/><rect x="45.4" y="36.3" width="4.5" height="1.6" fill="#48ccff" fill-opacity="0.85"/><rect x="50.3" y="36.4" width="3.8" height="1.6" fill="#48ccff" fill-opacity="0.77"/><rect x="54.4" y="36.7" width="7.0" height="1.6" fill="#48ccff" fill-opacity="0.90"/><rect x="0.0" y="39.3" width="4.1" height="1.6" fill="#48ccff" fill-opacity="0.88"/><rect x="6.0" y="39.7" width="2.6" height="1.6" fill="#48ccff" fill-opacity="0.98"/><rect x="10.3" y="39.6" width="7.2" height="1.6" fill="#48ccff" fill-opacity="0.78"/><rect x="19.2" y="39.4" width="4.4" height="1.6" fill="#48ccff" fill-opacity="0.80"/><rect x="24.7" y="39.4" width="7.2" height="1.6" fill="#48ccff" fill-opacity="0.84"/><rect x="32.2" y="39.8" width="3.7" height="1.6" fill="#48ccff" fill-opacity="0.84"/><rect x="41.0" y="39.1" width="3.1" height="1.6" fill="#48ccff" fill-opacity="0.79"/><rect x="51.0" y="39.0" width="3.8" height="1.6" fill="#48ccff" fill-opacity="0.77"/><rect x="55.9" y="39.3" width="4.8" height="1.6" fill="#48ccff" fill-opacity="0.75"/><rect x="0.0" y="42.1" width="3.1" height="1.6" fill="#48ccff" fill-opacity="0.95"/><rect x="3.1" y="42.2" width="4.5" height="1.6" fill="#48ccff" fill-opacity="0.94"/><rect x="9.5" y="42.4" width="7.8" height="1.6" fill="#48ccff" fill-opacity="0.86"/><rect x="17.5" y="42.3" width="4.5" height="1.6" fill="#48ccff" fill-opacity="0.95"/><rect x="32.3" y="42.7" width="5.6" height="1.6" fill="#48ccff" fill-opacity="0.93"/><rect x="38.8" y="42.7" width="4.2" height="1.6" fill="#48ccff" fill-opacity="0.90"/><rect x="44.7" y="42.3" width="5.2" height="1.6" fill="#48ccff" fill-opacity="0.82"/><rect x="50.2" y="42.1" width="7.5" height="1.6" fill="#48ccff" fill-opacity="0.80"/><rect x="0.0" y="45.8" width="3.8" height="1.6" fill="#48ccff" fill-opacity="0.85"/><rect x="5.1" y="45.4" width="2.3" height="1.6" fill="#48ccff" fill-opacity="0.98"/><rect x="9.3" y="45.7" width="6.5" height="1.6" fill="#48ccff" fill-opacity="0.98"/><rect x="15.9" y="45.2" width="4.5" height="1.6" fill="#48ccff" fill-opacity="0.81"/><rect x="22.1" y="45.0" width="3.3" height="1.6" fill="#48ccff" fill-opacity="0.87"/><rect x="27.2" y="45.7" width="2.0" height="1.6" fill="#48ccff" fill-opacity="0.98"/><rect x="30.3" y="45.6" width="3.8" height="1.6" fill="#48ccff" fill-opacity="0.90"/><rect x="34.9" y="45.3" width="6.1" height="1.6" fill="#48ccff" fill-opacity="0.97"/><rect x="42.9" y="45.7" width="4.9" height="1.6" fill="#48ccff" fill-opacity="0.88"/><rect x="48.1" y="45.3" width="2.6" height="1.6" fill="#48ccff" fill-opacity="0.88"/><rect x="50.8" y="45.5" width="7.7" height="1.6" fill="#48ccff" fill-opacity="0.91"/><rect x="59.2" y="45.3" width="3.3" height="1.6" fill="#48ccff" fill-opacity="0.77"/><rect x="2.6" y="48.8" width="7.5" height="1.6" fill="#48ccff" fill-opacity="0.87"/><rect x="10.7" y="48.6" width="2.5" height="1.6" fill="#48ccff" fill-opacity="0.92"/><rect x="15.0" y="48.6" width="2.6" height="1.6" fill="#48ccff" fill-opacity="0.99"/><rect x="18.1" y="48.5" width="7.6" height="1.6" fill="#48ccff" fill-opacity="0.83"/><rect x="26.7" y="48.3" width="3.0" height="1.6" fill="#48ccff" fill-opacity="0.87"/><rect x="30.6" y="48.4" width="3.3" height="1.6" fill="#48ccff" fill-opacity="1.00"/><rect x="35.6" y="48.1" width="2.9" height="1.6" fill="#48ccff" fill-opacity="0.83"/><rect x="40.5" y="48.4" width="4.0" height="1.6" fill="#48ccff" fill-opacity="0.90"/><rect x="45.5" y="48.3" width="7.7" height="1.6" fill="#48ccff" fill-opacity="0.80"/><rect x="54.4" y="48.3" width="6.5" height="1.6" fill="#48ccff" fill-opacity="0.81"/><rect x="0.0" y="51.6" width="8.0" height="1.6" fill="#48ccff" fill-opacity="0.83"/><rect x="8.3" y="51.7" width="2.3" height="1.6" fill="#48ccff" fill-opacity="0.92"/><rect x="12.0" y="51.3" width="7.2" height="1.6" fill="#48ccff" fill-opacity="0.82"/><rect x="20.8" y="51.6" width="6.1" height="1.6" fill="#48ccff" fill-opacity="0.98"/><rect x="27.0" y="51.6" width="3.3" height="1.6" fill="#48ccff" fill-opacity="0.81"/><rect x="31.2" y="51.5" width="6.0" height="1.6" fill="#48ccff" fill-opacity="0.77"/><rect x="44.9" y="51.5" width="6.0" height="1.6" fill="#48ccff" fill-opacity="0.86"/><rect x="55.8" y="51.3" width="5.9" height="1.6" fill="#48ccff" fill-opacity="0.79"/><rect x="0.0" y="54.7" width="4.8" height="1.6" fill="#48ccff" fill-opacity="0.85"/><rect x="22.8" y="54.8" width="5.3" height="1.6" fill="#48ccff" fill-opacity="0.81"/><rect x="28.2" y="54.4" width="7.8" height="1.6" fill="#48ccff" fill-opacity="0.86"/><rect x="36.5" y="54.2" width="2.2" height="1.6" fill="#48ccff" fill-opacity="0.87"/><rect x="40.7" y="54.3" width="7.9" height="1.6" fill="#48ccff" fill-opacity="0.78"/><rect x="49.8" y="54.7" width="3.1" height="1.6" fill="#48ccff" fill-opacity="0.89"/><rect x="54.6" y="54.5" width="3.3" height="1.6" fill="#48ccff" fill-opacity="0.92"/><rect x="58.3" y="54.4" width="5.0" height="1.6" fill="#48ccff" fill-opacity="0.83"/><rect x="0.0" y="57.0" width="2.7" height="1.6" fill="#48ccff" fill-opacity="0.96"/><rect x="3.2" y="57.7" width="6.0" height="1.6" fill="#48ccff" fill-opacity="0.76"/><rect x="17.8" y="57.2" width="2.1" height="1.6" fill="#48ccff" fill-opacity="0.76"/><rect x="21.6" y="57.8" width="2.9" height="1.6" fill="#48ccff" fill-opacity="0.93"/><rect x="26.4" y="57.8" width="5.9" height="1.6" fill="#48ccff" fill-opacity="0.80"/><rect x="33.4" y="57.2" width="4.5" height="1.6" fill="#48ccff" fill-opacity="0.99"/><rect x="39.9" y="57.8" width="6.2" height="1.6" fill="#48ccff" fill-opacity="0.99"/><rect x="46.2" y="57.1" width="7.3" height="1.6" fill="#48ccff" fill-opacity="0.81"/><rect x="59.5" y="57.1" width="5.9" height="1.6" fill="#48ccff" fill-opacity="1.00"/><rect x="12.3" y="60.4" width="4.2" height="1.6" fill="#48ccff" fill-opacity="0.89"/><rect x="17.0" y="60.2" width="5.5" height="1.6" fill="#48ccff" fill-opacity="0.87"/><rect x="23.4" y="60.2" width="6.2" height="1.6" fill="#48ccff" fill-opacity="0.93"/><rect x="30.2" y="60.3" width="2.9" height="1.6" fill="#48ccff" fill-opacity="0.90"/><rect x="35.1" y="60.8" width="7.8" height="1.6" fill="#48ccff" fill-opacity="0.95"/><rect x="43.6" y="60.2" width="7.6" height="1.6" fill="#48ccff" fill-opacity="0.88"/><rect x="51.5" y="60.2" width="5.6" height="1.6" fill="#48ccff" fill-opacity="0.94"/><rect x="57.3" y="60.8" width="4.9" height="1.6" fill="#48ccff" fill-opacity="0.79"/><rect x="43.5" y="18.5" width="1.1" height="2.7" fill="#d050f0" fill-opacity="0.60"/><rect x="4.6" y="0.8" width="1.1" height="2.2" fill="#d050f0" fill-opacity="0.77"/><rect x="32.7" y="28.8" width="1.1" height="2.8" fill="#d050f0" fill-opacity="0.65"/><rect x="8.9" y="15.1" width="1.1" height="2.7" fill="#d050f0" fill-opacity="0.92"/><rect x="6.9" y="0.1" width="1.1" height="3.0" fill="#d050f0" fill-opacity="0.99"/><rect x="16.8" y="32.4" width="1.1" height="1.3" fill="#d050f0" fill-opacity="0.78"/><rect x="10.5" y="41.6" width="1.1" height="1.5" fill="#d050f0" fill-opacity="0.80"/><rect x="20.1" y="29.4" width="1.1" height="2.9" fill="#d050f0" fill-opacity="0.79"/><rect x="59.5" y="44.0" width="1.1" height="1.6" fill="#d050f0" fill-opacity="0.66"/><rect x="49.9" y="47.4" width="1.1" height="1.5" fill="#d050f0" fill-opacity="0.91"/><rect x="18.2" y="34.6" width="1.1" height="2.8" fill="#d050f0" fill-opacity="0.96"/><rect x="10.6" y="8.7" width="1.1" height="1.7" fill="#d050f0" fill-opacity="0.82"/><rect x="58.9" y="39.8" width="1.1" height="2.6" fill="#d050f0" fill-opacity="0.92"/><rect x="29.0" y="22.9" width="1.1" height="2.6" fill="#d050f0" fill-opacity="0.83"/><rect x="53.9" y="60.8" width="1.1" height="2.0" fill="#d050f0" fill-opacity="0.70"/><rect x="7.8" y="35.7" width="1.1" height="1.8" fill="#d050f0" fill-opacity="0.69"/><rect x="30.9" y="44.4" width="1.1" height="2.4" fill="#d050f0" fill-opacity="0.76"/><rect x="39.7" y="38.3" width="1.1" height="2.8" fill="#d050f0" fill-opacity="0.86"/><rect x="51.8" y="14.7" width="1.1" height="2.7" fill="#d050f0" fill-opacity="0.55"/><rect x="49.7" y="0.9" width="1.1" height="2.3" fill="#d050f0" fill-opacity="0.67"/><rect x="9.9" y="45.3" width="1.1" height="1.4" fill="#d050f0" fill-opacity="0.86"/><rect x="5.0" y="12.7" width="1.1" height="1.9" fill="#d050f0" fill-opacity="0.81"/><rect x="40.2" y="21.9" width="1.1" height="2.8" fill="#d050f0" fill-opacity="0.56"/><rect x="11.8" y="24.0" width="1.1" height="2.3" fill="#d050f0" fill-opacity="0.84"/><rect x="54.1" y="21.4" width="1.1" height="2.4" fill="#d050f0" fill-opacity="0.86"/><rect x="9.8" y="22.4" width="1.1" height="2.0" fill="#d050f0" fill-opacity="0.82"/><rect x="32.3" y="8.4" width="1.1" height="1.6" fill="#d050f0" fill-opacity="0.70"/><rect x="5.3" y="47.0" width="1.1" height="2.8" fill="#d050f0" fill-opacity="0.88"/><rect x="13.4" y="35.9" width="1.1" height="1.3" fill="#d050f0" fill-opacity="0.65"/><rect x="15.5" y="36.5" width="1.1" height="2.2" fill="#d050f0" fill-opacity="0.79"/><rect x="9.8" y="30.6" width="1.1" height="2.5" fill="#d050f0" fill-opacity="0.94"/><rect x="22.5" y="27.4" width="1.1" height="2.8" fill="#d050f0" fill-opacity="0.57"/><rect x="36.8" y="6.2" width="1.1" height="2.6" fill="#d050f0" fill-opacity="0.85"/><rect x="4.4" y="2.7" width="1.1" height="2.9" fill="#d050f0" fill-opacity="0.69"/><rect x="35.5" y="35.4" width="1.1" height="1.9" fill="#d050f0" fill-opacity="0.59"/><rect x="44.2" y="20.4" width="1.1" height="2.0" fill="#d050f0" fill-opacity="0.91"/><rect x="57.2" y="17.5" width="1.1" height="1.8" fill="#d050f0" fill-opacity="0.90"/><rect x="27.5" y="54.5" width="1.1" height="1.9" fill="#d050f0" fill-opacity="0.57"/><rect x="17.4" y="54.8" width="1.1" height="2.2" fill="#d050f0" fill-opacity="0.99"/><rect x="50.1" y="41.5" width="1.1" height="1.5" fill="#d050f0" fill-opacity="0.74"/><rect x="1.2" y="20.4" width="1.1" height="1.6" fill="#d050f0" fill-opacity="0.97"/><rect x="9.5" y="21.1" width="1.1" height="1.2" fill="#d050f0" fill-opacity="0.62"/><rect x="42.5" y="24.6" width="1.1" height="2.1" fill="#d050f0" fill-opacity="0.92"/><rect x="42.4" y="12.9" width="1.1" height="2.5" fill="#d050f0" fill-opacity="0.86"/><rect x="35.9" y="30.6" width="1.1" height="2.8" fill="#d050f0" fill-opacity="0.82"/><rect x="3.7" y="51.2" width="1.1" height="2.4" fill="#d050f0" fill-opacity="0.67"/><rect x="47.1" y="56.8" width="1.1" height="2.5" fill="#d050f0" fill-opacity="0.76"/><rect x="50.5" y="4.9" width="1.1" height="1.3" fill="#d050f0" fill-opacity="0.73"/><rect x="31.6" y="39.2" width="1.1" height="2.4" fill="#d050f0" fill-opacity="0.78"/><rect x="22.7" y="44.7" width="1.1" height="2.2" fill="#d050f0" fill-opacity="0.64"/><rect x="35.2" y="28.0" width="1.1" height="2.6" fill="#d050f0" fill-opacity="0.87"/><rect x="60.1" y="46.6" width="1.1" height="2.1" fill="#d050f0" fill-opacity="0.85"/><rect x="17.9" y="33.8" width="1.1" height="3.0" fill="#d050f0" fill-opacity="0.60"/><rect x="25.9" y="26.3" width="1.1" height="2.5" fill="#d050f0" fill-opacity="0.64"/><rect x="41.7" y="6.9" width="1.1" height="2.9" fill="#d050f0" fill-opacity="0.59"/><rect x="39.4" y="45.7" width="1.1" height="2.2" fill="#d050f0" fill-opacity="0.67"/><rect x="22.1" y="54.5" width="1.1" height="2.0" fill="#d050f0" fill-opacity="0.80"/><rect x="58.3" y="29.5" width="1.1" height="2.7" fill="#d050f0" fill-opacity="0.82"/><rect x="50.6" y="38.0" width="1.1" height="1.4" fill="#d050f0" fill-opacity="0.65"/><rect x="16.9" y="13.5" width="1.1" height="2.3" fill="#d050f0" fill-opacity="0.74"/><rect x="22.3" y="1.2" width="1.1" height="3.0" fill="#d050f0" fill-opacity="0.77"/><rect x="12.7" y="40.4" width="1.1" height="1.4" fill="#d050f0" fill-opacity="0.62"/><rect x="57.5" y="40.7" width="1.1" height="1.8" fill="#d050f0" fill-opacity="0.61"/><rect x="44.3" y="14.7" width="1.1" height="1.8" fill="#d050f0" fill-opacity="0.68"/><rect x="38.4" y="14.8" width="1.1" height="1.3" fill="#d050f0" fill-opacity="0.93"/><rect x="32.3" y="7.7" width="1.1" height="1.3" fill="#d050f0" fill-opacity="0.96"/><rect x="31.1" y="33.5" width="1.1" height="2.8" fill="#d050f0" fill-opacity="0.56"/><rect x="6.5" y="12.6" width="1.1" height="2.5" fill="#d050f0" fill-opacity="0.60"/><rect x="34.3" y="48.4" width="1.1" height="1.9" fill="#d050f0" fill-opacity="0.85"/><rect x="2.6" y="29.4" width="1.1" height="1.9" fill="#d050f0" fill-opacity="0.85"/><rect x="23.9" y="40.3" width="1.1" height="2.8" fill="#d050f0" fill-opacity="0.97"/><rect x="49.6" y="43.1" width="1.1" height="2.9" fill="#d050f0" fill-opacity="0.74"/><rect x="1.3" y="49.1" width="1.1" height="1.8" fill="#d050f0" fill-opacity="0.70"/><rect x="57.9" y="24.4" width="1.1" height="1.4" fill="#d050f0" fill-opacity="0.96"/><rect x="0.2" y="3.2" width="1.1" height="2.5" fill="#d050f0" fill-opacity="0.63"/><rect x="44.0" y="0.2" width="1.1" height="1.7" fill="#d050f0" fill-opacity="0.73"/><rect x="38.2" y="45.4" width="1.1" height="2.4" fill="#d050f0" fill-opacity="0.64"/><rect x="52.1" y="3.3" width="1.1" height="2.0" fill="#d050f0" fill-opacity="0.57"/><rect x="46.9" y="28.8" width="1.1" height="2.0" fill="#d050f0" fill-opacity="0.97"/><rect x="14.8" y="39.9" width="1.1" height="2.5" fill="#d050f0" fill-opacity="0.58"/><rect x="47.0" y="20.8" width="1.1" height="2.5" fill="#d050f0" fill-opacity="0.89"/><rect x="20.4" y="24.1" width="1.1" height="1.9" fill="#d050f0" fill-opacity="0.60"/><rect x="34.6" y="44.2" width="1.1" height="2.9" fill="#d050f0" fill-opacity="0.75"/><rect x="33.4" y="39.0" width="1.1" height="2.6" fill="#d050f0" fill-opacity="0.85"/><rect x="58.4" y="51.3" width="1.1" height="2.9" fill="#d050f0" fill-opacity="0.75"/><rect x="33.4" y="10.2" width="1.1" height="2.1" fill="#d050f0" fill-opacity="0.78"/><rect x="21.7" y="56.9" width="1.1" height="2.8" fill="#d050f0" fill-opacity="0.92"/><rect x="18.2" y="35.4" width="1.1" height="2.7" fill="#d050f0" fill-opacity="0.73"/><rect x="35.7" y="11.7" width="1.1" height="2.9" fill="#d050f0" fill-opacity="0.81"/><rect x="27.4" y="52.4" width="1.1" height="1.7" fill="#d050f0" fill-opacity="0.79"/><rect x="25.0" y="54.7" width="1.1" height="2.1" fill="#d050f0" fill-opacity="0.98"/><rect x="50.1" y="6.8" width="1.1" height="2.3" fill="#d050f0" fill-opacity="0.77"/><rect x="9.3" y="53.5" width="1.1" height="2.7" fill="#d050f0" fill-opacity="0.99"/><rect x="29.8" y="8.8" width="1.1" height="2.4" fill="#d050f0" fill-opacity="0.93"/><rect x="16.5" y="46.3" width="1.1" height="2.1" fill="#d050f0" fill-opacity="0.72"/><rect x="60.0" y="42.6" width="1.1" height="2.9" fill="#d050f0" fill-opacity="0.90"/><rect x="50.6" y="12.9" width="1.1" height="2.5" fill="#d050f0" fill-opacity="0.59"/><rect x="46.8" y="42.0" width="1.1" height="1.9" fill="#d050f0" fill-opacity="0.81"/><rect x="58.7" y="41.7" width="1.1" height="1.7" fill="#d050f0" fill-opacity="0.98"/><rect x="47.7" y="18.4" width="1.1" height="2.0" fill="#d050f0" fill-opacity="0.70"/><rect x="27.0" y="51.1" width="1.1" height="1.9" fill="#d050f0" fill-opacity="0.97"/><rect x="18.7" y="21.6" width="1.1" height="1.7" fill="#d050f0" fill-opacity="0.90"/><rect x="6.7" y="9.6" width="1.1" height="2.7" fill="#d050f0" fill-opacity="0.89"/><rect x="9.4" y="25.8" width="1.1" height="1.3" fill="#d050f0" fill-opacity="0.93"/><rect x="53.5" y="2.4" width="1.1" height="2.6" fill="#d050f0" fill-opacity="0.66"/><rect x="60.0" y="9.3" width="1.1" height="2.9" fill="#d050f0" fill-opacity="0.68"/><rect x="33.8" y="33.5" width="1.1" height="2.6" fill="#d050f0" fill-opacity="0.71"/><rect x="47.7" y="48.8" width="1.1" height="2.4" fill="#d050f0" fill-opacity="0.57"/><rect x="27.5" y="13.4" width="1.1" height="3.0" fill="#d050f0" fill-opacity="0.74"/><rect x="53.8" y="25.5" width="1.1" height="1.7" fill="#d050f0" fill-opacity="0.64"/><rect x="43.7" y="6.2" width="1.1" height="2.1" fill="#d050f0" fill-opacity="0.79"/><rect x="58.2" y="50.9" width="1.1" height="1.3" fill="#d050f0" fill-opacity="0.71"/><rect x="26.1" y="47.3" width="1.1" height="1.4" fill="#d050f0" fill-opacity="0.86"/><rect x="17.7" y="37.0" width="1.1" height="1.9" fill="#d050f0" fill-opacity="0.63"/><rect x="52.0" y="51.2" width="1.1" height="1.8" fill="#d050f0" fill-opacity="0.72"/><rect x="12.9" y="21.3" width="1.1" height="1.9" fill="#d050f0" fill-opacity="0.60"/><rect x="56.0" y="27.2" width="1.1" height="1.7" fill="#d050f0" fill-opacity="0.67"/><rect x="9.8" y="28.9" width="1.1" height="1.9" fill="#d050f0" fill-opacity="0.91"/><rect x="19.8" y="13.1" width="1.1" height="1.5" fill="#d050f0" fill-opacity="0.87"/><rect x="9.7" y="9.3" width="1.1" height="1.4" fill="#d050f0" fill-opacity="0.79"/><rect x="20.2" y="45.5" width="1.1" height="1.9" fill="#d050f0" fill-opacity="0.93"/><rect x="14.9" y="23.2" width="1.1" height="2.6" fill="#d050f0" fill-opacity="0.94"/><rect x="49.3" y="41.5" width="1.1" height="2.1" fill="#d050f0" fill-opacity="0.74"/><rect x="56.6" y="20.4" width="1.1" height="1.9" fill="#d050f0" fill-opacity="0.86"/><rect x="33.2" y="55.3" width="1.1" height="1.8" fill="#d050f0" fill-opacity="0.92"/><rect x="45.5" y="8.3" width="1.1" height="2.8" fill="#d050f0" fill-opacity="0.86"/><rect x="56.7" y="32.0" width="1.1" height="2.8" fill="#d050f0" fill-opacity="0.79"/><rect x="54.8" y="48.9" width="1.1" height="1.6" fill="#d050f0" fill-opacity="0.95"/><rect x="9.9" y="31.1" width="1.1" height="1.8" fill="#d050f0" fill-opacity="0.75"/><rect x="17.4" y="18.6" width="1.1" height="2.5" fill="#d050f0" fill-opacity="0.73"/><rect x="31.5" y="9.1" width="1.1" height="1.5" fill="#d050f0" fill-opacity="0.86"/><rect x="24.8" y="34.6" width="1.1" height="2.8" fill="#d050f0" fill-opacity="0.59"/><rect x="15.8" y="51.5" width="1.1" height="2.4" fill="#d050f0" fill-opacity="0.91"/><rect x="9.3" y="26.2" width="1.1" height="2.7" fill="#d050f0" fill-opacity="0.99"/><rect x="43.4" y="59.1" width="1.1" height="1.8" fill="#d050f0" fill-opacity="0.85"/><rect x="56.9" y="10.0" width="1.1" height="2.3" fill="#d050f0" fill-opacity="0.69"/><rect x="32.0" y="53.7" width="1.1" height="2.0" fill="#d050f0" fill-opacity="0.60"/><rect x="31.2" y="35.8" width="1.1" height="1.7" fill="#d050f0" fill-opacity="0.91"/><rect x="18.1" y="29.1" width="1.1" height="2.2" fill="#d050f0" fill-opacity="0.56"/><rect x="54.8" y="38.1" width="1.1" height="1.7" fill="#d050f0" fill-opacity="0.96"/><rect x="46.8" y="36.3" width="1.1" height="2.1" fill="#d050f0" fill-opacity="0.86"/><rect x="13.7" y="27.8" width="1.1" height="1.2" fill="#d050f0" fill-opacity="0.57"/><rect x="36.6" y="32.2" width="1.1" height="2.7" fill="#d050f0" fill-opacity="0.84"/><rect x="45.2" y="40.9" width="1.1" height="1.9" fill="#d050f0" fill-opacity="0.88"/><rect x="10.7" y="59.2" width="1.1" height="2.3" fill="#d050f0" fill-opacity="0.75"/><rect x="41.3" y="26.9" width="1.1" height="1.7" fill="#d050f0" fill-opacity="0.83"/><rect x="58.9" y="35.9" width="1.1" height="2.8" fill="#d050f0" fill-opacity="0.73"/><rect x="58.5" y="56.6" width="1.1" height="2.6" fill="#d050f0" fill-opacity="0.59"/><rect x="55.4" y="34.5" width="1.1" height="2.0" fill="#d050f0" fill-opacity="0.92"/><rect x="35.4" y="50.7" width="1.1" height="2.2" fill="#d050f0" fill-opacity="0.63"/><rect x="57.2" y="13.4" width="1.1" height="2.1" fill="#d050f0" fill-opacity="0.65"/><rect x="4.3" y="30.2" width="1.1" height="1.9" fill="#d050f0" fill-opacity="0.60"/><rect x="50.9" y="34.3" width="1.1" height="2.3" fill="#d050f0" fill-opacity="0.62"/><rect x="21.2" y="45.2" width="1.1" height="2.3" fill="#d050f0" fill-opacity="0.73"/><rect x="20.5" y="55.2" width="1.1" height="2.1" fill="#d050f0" fill-opacity="0.64"/><rect x="41.0" y="39.0" width="1.1" height="2.5" fill="#d050f0" fill-opacity="0.67"/><rect x="28.0" y="21.1" width="1.1" height="1.3" fill="#d050f0" fill-opacity="0.77"/><rect x="39.2" y="30.5" width="1.1" height="2.8" fill="#d050f0" fill-opacity="0.69"/><rect x="42.2" y="50.0" width="1.1" height="2.5" fill="#d050f0" fill-opacity="0.62"/><rect x="59.2" y="11.2" width="1.1" height="1.3" fill="#d050f0" fill-opacity="0.82"/><rect x="18.0" y="20.5" width="1.1" height="1.5" fill="#d050f0" fill-opacity="0.91"/><rect x="2.2" y="19.6" width="1.1" height="3.0" fill="#d050f0" fill-opacity="0.61"/><rect x="42.7" y="38.6" width="1.1" height="1.8" fill="#d050f0" fill-opacity="0.83"/><rect x="10.0" y="50.7" width="1.1" height="2.7" fill="#d050f0" fill-opacity="0.86"/><rect x="2.3" y="19.9" width="1.1" height="1.5" fill="#d050f0" fill-opacity="0.99"/><rect x="0.9" y="46.8" width="1.1" height="2.9" fill="#d050f0" fill-opacity="0.97"/><rect x="13.8" y="53.5" width="1.1" height="1.4" fill="#d050f0" fill-opacity="0.74"/><rect x="45.5" y="27.0" width="1.1" height="1.6" fill="#d050f0" fill-opacity="0.83"/><rect x="23.8" y="51.5" width="1.1" height="2.7" fill="#d050f0" fill-opacity="0.59"/><rect x="50.2" y="13.0" width="1.1" height="1.6" fill="#d050f0" fill-opacity="0.99"/><rect x="57.6" y="35.0" width="1.1" height="2.8" fill="#d050f0" fill-opacity="0.82"/><rect x="15.4" y="31.3" width="1.1" height="2.4" fill="#d050f0" fill-opacity="0.60"/><rect x="20.0" y="46.5" width="1.1" height="2.4" fill="#d050f0" fill-opacity="0.58"/><rect x="8.2" y="59.5" width="1.1" height="1.4" fill="#d050f0" fill-opacity="0.95"/><rect x="45.1" y="17.8" width="1.1" height="1.7" fill="#d050f0" fill-opacity="0.72"/><rect x="7.8" y="11.5" width="1.1" height="3.0" fill="#d050f0" fill-opacity="0.77"/><rect x="51.2" y="48.6" width="1.1" height="1.6" fill="#d050f0" fill-opacity="0.89"/><rect x="49.5" y="5.0" width="1.1" height="1.8" fill="#d050f0" fill-opacity="0.73"/><rect x="34.0" y="34.1" width="1.1" height="2.0" fill="#d050f0" fill-opacity="0.95"/><rect x="59.7" y="28.8" width="1.1" height="2.8" fill="#d050f0" fill-opacity="0.66"/><rect x="55.5" y="2.8" width="1.1" height="2.5" fill="#d050f0" fill-opacity="0.81"/><rect x="42.1" y="18.1" width="1.1" height="2.4" fill="#d050f0" fill-opacity="0.76"/><rect x="13.7" y="26.5" width="1.1" height="2.4" fill="#d050f0" fill-opacity="1.00"/><rect x="53.2" y="42.4" width="1.1" height="2.0" fill="#d050f0" fill-opacity="0.86"/><rect x="14.4" y="22.4" width="1.1" height="2.7" fill="#d050f0" fill-opacity="0.70"/><rect x="3.4" y="3.2" width="1.1" height="1.3" fill="#d050f0" fill-opacity="0.87"/><rect x="3.3" y="50.0" width="1.1" height="2.0" fill="#d050f0" fill-opacity="0.78"/><rect x="22.8" y="45.7" width="1.1" height="2.5" fill="#d050f0" fill-opacity="0.84"/><rect x="33.5" y="16.4" width="1.1" height="2.2" fill="#d050f0" fill-opacity="0.75"/><rect x="31.0" y="59.2" width="1.1" height="2.2" fill="#d050f0" fill-opacity="0.92"/><rect x="29.1" y="26.2" width="1.1" height="2.8" fill="#d050f0" fill-opacity="0.66"/><rect x="46.9" y="44.2" width="1.1" height="1.6" fill="#d050f0" fill-opacity="0.63"/><rect x="53.2" y="55.2" width="1.1" height="2.0" fill="#d050f0" fill-opacity="0.63"/><rect x="12.8" y="34.4" width="1.1" height="1.6" fill="#d050f0" fill-opacity="0.58"/><rect x="39.6" y="54.1" width="1.1" height="1.3" fill="#d050f0" fill-opacity="0.97"/><rect x="2.2" y="12.5" width="1.1" height="1.4" fill="#d050f0" fill-opacity="0.76"/><rect x="18.4" y="29.6" width="1.1" height="1.6" fill="#d050f0" fill-opacity="0.78"/><rect x="43.4" y="22.3" width="1.1" height="1.6" fill="#d050f0" fill-opacity="0.87"/><rect x="43.2" y="45.6" width="1.1" height="3.0" fill="#d050f0" fill-opacity="0.71"/><rect x="36.1" y="35.7" width="1.1" height="1.9" fill="#d050f0" fill-opacity="0.75"/><rect x="26.6" y="24.0" width="1.1" height="2.0" fill="#d050f0" fill-opacity="0.90"/><rect x="38.4" y="54.6" width="1.1" height="2.8" fill="#d050f0" fill-opacity="0.69"/><rect x="14.9" y="32.1" width="1.1" height="2.8" fill="#d050f0" fill-opacity="0.61"/><rect x="22.8" y="30.1" width="1.1" height="1.4" fill="#d050f0" fill-opacity="0.94"/><rect x="52.1" y="19.6" width="1.1" height="2.6" fill="#d050f0" fill-opacity="0.64"/><rect x="6.8" y="39.1" width="1.1" height="1.8" fill="#d050f0" fill-opacity="0.72"/><rect x="49.8" y="46.1" width="1.1" height="2.4" fill="#d050f0" fill-opacity="0.94"/><rect x="19.6" y="51.8" width="1.1" height="2.7" fill="#d050f0" fill-opacity="0.81"/><rect x="15.8" y="27.8" width="1.1" height="2.6" fill="#d050f0" fill-opacity="0.97"/><rect x="19.3" y="39.8" width="1.1" height="2.8" fill="#d050f0" fill-opacity="0.97"/><rect x="10.2" y="29.3" width="1.1" height="1.5" fill="#d050f0" fill-opacity="0.90"/><rect x="47.0" y="57.1" width="1.1" height="2.0" fill="#d050f0" fill-opacity="0.87"/><rect x="1.5" y="13.5" width="1.1" height="2.0" fill="#d050f0" fill-opacity="0.79"/><rect x="31.0" y="34.5" width="1.1" height="2.2" fill="#d050f0" fill-opacity="0.85"/><rect x="2.8" y="48.7" width="1.1" height="1.3" fill="#d050f0" fill-opacity="0.56"/><rect x="36.5" y="0.1" width="1.1" height="2.5" fill="#d050f0" fill-opacity="0.72"/><rect x="33.3" y="55.0" width="1.1" height="2.4" fill="#d050f0" fill-opacity="0.90"/><rect x="12.8" y="25.7" width="1.1" height="1.9" fill="#d050f0" fill-opacity="0.65"/><rect x="27.2" y="21.9" width="1.1" height="1.9" fill="#d050f0" fill-opacity="0.56"/><rect x="30.8" y="22.7" width="1.1" height="1.6" fill="#d050f0" fill-opacity="0.94"/><rect x="41.8" y="14.2" width="1.1" height="2.8" fill="#d050f0" fill-opacity="0.91"/><rect x="3.7" y="4.9" width="1.1" height="1.3" fill="#d050f0" fill-opacity="0.96"/><rect x="44.1" y="33.6" width="1.1" height="2.3" fill="#d050f0" fill-opacity="0.99"/><rect x="31.4" y="2.2" width="1.1" height="1.6" fill="#d050f0" fill-opacity="0.66"/><rect x="37.2" y="16.6" width="1.1" height="2.4" fill="#d050f0" fill-opacity="0.57"/><rect x="46.3" y="7.9" width="1.1" height="1.5" fill="#d050f0" fill-opacity="0.89"/><rect x="0.9" y="6.4" width="1.1" height="2.3" fill="#d050f0" fill-opacity="0.93"/><rect x="0.1" y="8.5" width="1.1" height="2.3" fill="#d050f0" fill-opacity="0.68"/><rect x="48.3" y="19.5" width="1.1" height="1.7" fill="#d050f0" fill-opacity="0.85"/><rect x="1.7" y="54.5" width="1.1" height="1.5" fill="#d050f0" fill-opacity="0.88"/><rect x="51.3" y="51.2" width="1.1" height="2.3" fill="#d050f0" fill-opacity="0.59"/><rect x="25.0" y="11.4" width="1.1" height="2.5" fill="#d050f0" fill-opacity="0.55"/><rect x="10.4" y="42.1" width="1.1" height="2.3" fill="#d050f0" fill-opacity="0.93"/><rect x="46.7" y="52.8" width="1.1" height="2.2" fill="#d050f0" fill-opacity="0.73"/><rect x="52.5" y="9.0" width="1.1" height="1.3" fill="#d050f0" fill-opacity="0.67"/><rect x="55.0" y="23.3" width="1.1" height="1.7" fill="#d050f0" fill-opacity="0.63"/><rect x="46.4" y="15.2" width="1.1" height="1.5" fill="#d050f0" fill-opacity="0.87"/><rect x="43.4" y="17.5" width="1.1" height="2.6" fill="#d050f0" fill-opacity="0.85"/><rect x="27.6" y="56.6" width="1.1" height="2.4" fill="#d050f0" fill-opacity="0.58"/><rect x="1.9" y="43.4" width="1.1" height="2.3" fill="#d050f0" fill-opacity="0.60"/><rect x="52.8" y="7.6" width="1.1" height="1.5" fill="#d050f0" fill-opacity="0.68"/><rect x="38.0" y="42.0" width="1.1" height="2.9" fill="#d050f0" fill-opacity="0.67"/><rect x="2.3" y="11.4" width="1.1" height="1.5" fill="#d050f0" fill-opacity="0.93"/><rect x="24.7" y="25.4" width="1.1" height="2.1" fill="#d050f0" fill-opacity="0.96"/><rect x="6.5" y="23.2" width="1.1" height="1.6" fill="#d050f0" fill-opacity="0.66"/><rect x="55.6" y="6.3" width="1.1" height="1.8" fill="#d050f0" fill-opacity="0.94"/><rect x="56.1" y="42.5" width="1.1" height="1.9" fill="#d050f0" fill-opacity="0.77"/><rect x="41.5" y="61.0" width="1.1" height="2.8" fill="#d050f0" fill-opacity="0.82"/><rect x="57.6" y="25.8" width="1.1" height="2.1" fill="#d050f0" fill-opacity="0.93"/><rect x="52.7" y="49.9" width="1.1" height="2.3" fill="#d050f0" fill-opacity="0.57"/><rect x="31.9" y="46.7" width="1.1" height="2.1" fill="#d050f0" fill-opacity="0.82"/><rect x="49.8" y="15.8" width="1.1" height="2.1" fill="#d050f0" fill-opacity="0.94"/><rect x="59.2" y="55.0" width="1.1" height="1.2" fill="#d050f0" fill-opacity="0.83"/><rect x="42.4" y="50.7" width="1.1" height="2.8" fill="#d050f0" fill-opacity="0.77"/><rect x="25.5" y="5.7" width="1.1" height="2.7" fill="#d050f0" fill-opacity="0.89"/><rect x="52.5" y="21.9" width="1.1" height="1.7" fill="#d050f0" fill-opacity="0.70"/><rect x="41.0" y="14.4" width="1.1" height="1.2" fill="#d050f0" fill-opacity="0.75"/><rect x="21.2" y="34.6" width="1.1" height="2.1" fill="#d050f0" fill-opacity="1.00"/><rect x="8.7" y="56.0" width="1.1" height="3.0" fill="#d050f0" fill-opacity="0.85"/><rect x="31.2" y="19.8" width="1.1" height="2.9" fill="#d050f0" fill-opacity="0.77"/><rect x="55.2" y="38.2" width="1.1" height="1.4" fill="#d050f0" fill-opacity="0.77"/><rect x="22.0" y="24.5" width="1.1" height="1.4" fill="#d050f0" fill-opacity="0.75"/><rect x="18.1" y="15.3" width="1.1" height="2.6" fill="#d050f0" fill-opacity="0.69"/><rect x="27.0" y="8.0" width="1.1" height="1.5" fill="#d050f0" fill-opacity="0.98"/><rect x="2.9" y="37.1" width="1.1" height="1.5" fill="#d050f0" fill-opacity="0.80"/><rect x="47.1" y="36.0" width="1.1" height="2.5" fill="#d050f0" fill-opacity="0.78"/><rect x="57.6" y="27.0" width="1.1" height="1.7" fill="#d050f0" fill-opacity="0.68"/><rect x="55.0" y="43.8" width="1.1" height="2.5" fill="#d050f0" fill-opacity="0.85"/><rect x="40.3" y="17.3" width="1.1" height="2.8" fill="#d050f0" fill-opacity="0.93"/><rect x="39.4" y="59.3" width="1.1" height="2.6" fill="#d050f0" fill-opacity="0.62"/><rect x="56.3" y="41.8" width="1.1" height="2.8" fill="#d050f0" fill-opacity="0.76"/><rect x="1.6" y="19.3" width="1.1" height="2.3" fill="#d050f0" fill-opacity="0.61"/><rect x="2.5" y="58.0" width="1.1" height="1.8" fill="#d050f0" fill-opacity="0.85"/><rect x="13.6" y="12.5" width="1.1" height="2.6" fill="#d050f0" fill-opacity="0.66"/><rect x="33.9" y="27.5" width="1.1" height="1.8" fill="#d050f0" fill-opacity="0.93"/><rect x="60.0" y="36.8" width="1.1" height="1.8" fill="#d050f0" fill-opacity="0.58"/><rect x="47.6" y="56.4" width="1.1" height="2.9" fill="#d050f0" fill-opacity="0.58"/><rect x="45.2" y="8.9" width="1.1" height="1.8" fill="#d050f0" fill-opacity="0.90"/><rect x="46.4" y="12.1" width="1.1" height="2.3" fill="#d050f0" fill-opacity="0.80"/><rect x="18.9" y="56.3" width="1.1" height="2.6" fill="#d050f0" fill-opacity="0.59"/><rect x="3.4" y="36.6" width="1.1" height="1.8" fill="#d050f0" fill-opacity="0.81"/><rect x="46.7" y="30.8" width="1.1" height="2.4" fill="#d050f0" fill-opacity="0.97"/><rect x="45.7" y="26.9" width="1.1" height="2.5" fill="#d050f0" fill-opacity="1.00"/><rect x="30.1" y="48.0" width="1.1" height="2.2" fill="#d050f0" fill-opacity="0.59"/><rect x="44.2" y="8.9" width="1.1" height="2.8" fill="#d050f0" fill-opacity="0.93"/><rect x="40.5" y="58.7" width="1.1" height="1.3" fill="#d050f0" fill-opacity="0.90"/><rect x="56.6" y="17.2" width="1.1" height="1.9" fill="#d050f0" fill-opacity="0.58"/><rect x="44.4" y="1.1" width="1.1" height="2.4" fill="#d050f0" fill-opacity="0.79"/><rect x="41.0" y="44.0" width="1.1" height="3.0" fill="#d050f0" fill-opacity="0.85"/><rect x="54.1" y="5.2" width="1.1" height="2.1" fill="#d050f0" fill-opacity="0.85"/><rect x="59.5" y="17.3" width="1.1" height="2.8" fill="#d050f0" fill-opacity="0.80"/><rect x="55.6" y="22.5" width="1.1" height="1.8" fill="#d050f0" fill-opacity="0.93"/><rect x="37.1" y="39.7" width="1.1" height="2.3" fill="#d050f0" fill-opacity="0.92"/><rect x="21.8" y="3.7" width="1.1" height="2.8" fill="#d050f0" fill-opacity="0.83"/><rect x="4.1" y="58.5" width="1.1" height="2.9" fill="#d050f0" fill-opacity="0.80"/><rect x="19.3" y="45.5" width="1.1" height="2.6" fill="#d050f0" fill-opacity="0.93"/><rect x="35.1" y="48.1" width="1.1" height="2.9" fill="#d050f0" fill-opacity="0.87"/><rect x="25.6" y="8.8" width="1.1" height="1.7" fill="#d050f0" fill-opacity="0.80"/><rect x="58.0" y="6.7" width="1.1" height="2.3" fill="#d050f0" fill-opacity="0.93"/><rect x="23.2" y="26.5" width="1.1" height="2.6" fill="#d050f0" fill-opacity="0.72"/></pattern></defs>
<rect width="900" height="600" fill="#282828"/>
<rect x="2" y="0" width="1" height="600" fill="#383838"/>
<rect x="12" y="0" width="1" height="600" fill="#383838"/>
<rect x="22" y="0" width="1" height="600" fill="#383838"/>
<rect x="32" y="0" width="1" height="600" fill="#383838"/>
<rect x="52" y="0" width="1" height="600" fill="#383838"/>
<rect x="63" y="0" width="1" height="600" fill="#383838"/>
<rect x="73" y="0" width="1" height="600" fill="#383838"/>
<rect x="83" y="0" width="1" height="600" fill="#383838"/>
<rect x="93" y="0" width="1" height="600" fill="#383838"/>
<rect x="103" y="0" width="1" height="600" fill="#383838"/>
<rect x="114" y="0" width="1" height="600" fill="#383838"/>
<rect x="134" y="0" width="1" height="600" fill="#383838"/>
<rect x="144" y="0" width="1" height="600" fill="#383838"/>
<rect x="154" y="0" width="1" height="600" fill="#383838"/>
<rect x="164" y="0" width="1" height="600" fill="#383838"/>
<rect x="175" y="0" width="1" height="600" fill="#383838"/>
<rect x="185" y="0" width="1" height="600" fill="#383838"/>
<rect x="195" y="0" width="1" height="600" fill="#383838"/>
<rect x="215" y="0" width="1" height="600" fill="#383838"/>
<rect x="225" y="0" width="1" height="600" fill="#383838"/>
<rect x="236" y="0" width="1" height="600" fill="#383838"/>
<rect x="246" y="0" width="1" height="600" fill="#383838"/>
<rect x="256" y="0" width="1" height="600" fill="#383838"/>
<rect x="266" y="0" width="1" height="600" fill="#383838"/>
<rect x="276" y="0" width="1" height="600" fill="#383838"/>
<rect x="297" y="0" width="1" height="600" fill="#383838"/>
<rect x="307" y="0" width="1" height="600" fill="#383838"/>
<rect x="317" y="0" width="1" height="600" fill="#383838"/>
<rect x="327" y="0" width="1" height="600" fill="#383838"/>
<rect x="337" y="0" width="1" height="600" fill="#383838"/>
<rect x="348" y="0" width="1" height="600" fill="#383838"/>
<rect x="358" y="0" width="1" height="600" fill="#383838"/>
<rect x="378" y="0" width="1" height="600" fill="#383838"/>
<rect x="388" y="0" width="1" height="600" fill="#383838"/>
<rect x="399" y="0" width="1" height="600" fill="#383838"/>
<rect x="409" y="0" width="1" height="600" fill="#383838"/>
<rect x="419" y="0" width="1" height="600" fill="#383838"/>
<rect x="429" y="0" width="1" height="600" fill="#383838"/>
<rect x="439" y="0" width="1" height="600" fill="#383838"/>
<rect x="460" y="0" width="1" height="600" fill="#383838"/>
<rect x="470" y="0" width="1" height="600" fill="#383838"/>
<rect x="480" y="0" width="1" height="600" fill="#383838"/>
<rect x="490" y="0" width="1" height="600" fill="#383838"/>
<rect x="500" y="0" width="1" height="600" fill="#383838"/>
<rect x="511" y="0" width="1" height="600" fill="#383838"/>
<rect x="521" y="0" width="1" height="600" fill="#383838"/>
<rect x="541" y="0" width="1" height="600" fill="#383838"/>
<rect x="551" y="0" width="1" height="600" fill="#383838"/>
<rect x="561" y="0" width="1" height="600" fill="#383838"/>
<rect x="572" y="0" width="1" height="600" fill="#383838"/>
<rect x="582" y="0" width="1" height="600" fill="#383838"/>
<rect x="592" y="0" width="1" height="600" fill="#383838"/>
<rect x="602" y="0" width="1" height="600" fill="#383838"/>
<rect x="623" y="0" width="1" height="600" fill="#383838"/>
<rect x="633" y="0" width="1" height="600" fill="#383838"/>
<rect x="643" y="0" width="1" height="600" fill="#383838"/>
<rect x="653" y="0" width="1" height="600" fill="#383838"/>
<rect x="663" y="0" width="1" height="600" fill="#383838"/>
<rect x="673" y="0" width="1" height="600" fill="#383838"/>
<rect x="684" y="0" width="1" height="600" fill="#383838"/>
<rect x="704" y="0" width="1" height="600" fill="#383838"/>
<rect x="714" y="0" width="1" height="600" fill="#383838"/>
<rect x="724" y="0" width="1" height="600" fill="#383838"/>
<rect x="734" y="0" width="1" height="600" fill="#383838"/>
<rect x="745" y="0" width="1" height="600" fill="#383838"/>
<rect x="755" y="0" width="1" height="600" fill="#383838"/>
<rect x="765" y="0" width="1" height="600" fill="#383838"/>
<rect x="785" y="0" width="1" height="600" fill="#383838"/>
<rect x="796" y="0" width="1" height="600" fill="#383838"/>
<rect x="806" y="0" width="1" height="600" fill="#383838"/>
<rect x="816" y="0" width="1" height="600" fill="#383838"/>
<rect x="826" y="0" width="1" height="600" fill="#383838"/>
<rect x="836" y="0" width="1" height="600" fill="#383838"/>
<rect x="846" y="0" width="1" height="600" fill="#383838"/>
<rect x="867" y="0" width="1" height="600" fill="#383838"/>
<rect x="877" y="0" width="1" height="600" fill="#383838"/>
<rect x="887" y="0" width="1" height="600" fill="#383838"/>
<rect x="897" y="0" width="1" height="600" fill="#383838"/>
<rect x="0" y="3" width="900" height="1" fill="#383838"/>
<rect x="0" y="13" width="900" height="1" fill="#383838"/>
<rect x="0" y="24" width="900" height="1" fill="#383838"/>
<rect x="0" y="34" width="900" height="1" fill="#383838"/>
<rect x="0" y="54" width="900" height="1" fill="#383838"/>
<rect x="0" y="64" width="900" height="1" fill="#383838"/>
<rect x="0" y="74" width="900" height="1" fill="#383838"/>
<rect x="0" y="85" width="900" height="1" fill="#383838"/>
<rect x="0" y="95" width="900" height="1" fill="#383838"/>
<rect x="0" y="105" width="900" height="1" fill="#383838"/>
<rect x="0" y="115" width="900" height="1" fill="#383838"/>
<rect x="0" y="136" width="900" height="1" fill="#383838"/>
<rect x="0" y="146" width="900" height="1" fill="#383838"/>
<rect x="0" y="156" width="900" height="1" fill="#383838"/>
<rect x="0" y="166" width="900" height="1" fill="#383838"/>
<rect x="0" y="176" width="900" height="1" fill="#383838"/>
<rect x="0" y="186" width="900" height="1" fill="#383838"/>
<rect x="0" y="197" width="900" height="1" fill="#383838"/>
<rect x="0" y="217" width="900" height="1" fill="#383838"/>
<rect x="0" y="227" width="900" height="1" fill="#383838"/>
<rect x="0" y="237" width="900" height="1" fill="#383838"/>
<rect x="0" y="248" width="900" height="1" fill="#383838"/>
<rect x="0" y="258" width="900" height="1" fill="#383838"/>
<rect x="0" y="268" width="900" height="1" fill="#383838"/>
<rect x="0" y="278" width="900" height="1" fill="#383838"/>
<rect x="0" y="298" width="900" height="1" fill="#383838"/>
<rect x="0" y="309" width="900" height="1" fill="#383838"/>
<rect x="0" y="319" width="900" height="1" fill="#383838"/>
<rect x="0" y="329" width="900" height="1" fill="#383838"/>
<rect x="0" y="339" width="900" height="1" fill="#383838"/>
<rect x="0" y="349" width="900" height="1" fill="#383838"/>
<rect x="0" y="359" width="900" height="1" fill="#383838"/>
<rect x="0" y="380" width="900" height="1" fill="#383838"/>
<rect x="0" y="390" width="900" height="1" fill="#383838"/>
<rect x="0" y="400" width="900" height="1" fill="#383838"/>
<rect x="0" y="410" width="900" height="1" fill="#383838"/>
<rect x="0" y="421" width="900" height="1" fill="#383838"/>
<rect x="0" y="431" width="900" height="1" fill="#383838"/>
<rect x="0" y="441" width="900" height="1" fill="#383838"/>
<rect x="0" y="461" width="900" height="1" fill="#383838"/>
<rect x="0" y="471" width="900" height="1" fill="#383838"/>
<rect x="0" y="482" width="900" height="1" fill="#383838"/>
<rect x="0" y="492" width="900" height="1" fill="#383838"/>
<rect x="0" y="502" width="900" height="1" fill="#383838"/>
<rect x="0" y="512" width="900" height="1" fill="#383838"/>
<rect x="0" y="522" width="900" height="1" fill="#383838"/>
<rect x="0" y="543" width="900" height="1" fill="#383838"/>
<rect x="0" y="553" width="900" height="1" fill="#383838"/>
<rect x="0" y="563" width="900" height="1" fill="#383838"/>
<rect x="0" y="573" width="900" height="1" fill="#383838"/>
<rect x="0" y="583" width="900" height="1" fill="#383838"/>
<rect x="0" y="594" width="900" height="1" fill="#383838"/>
<rect x="42" y="0" width="1" height="600" fill="#1c1c1c"/>
<rect x="124" y="0" width="1" height="600" fill="#1c1c1c"/>
<rect x="205" y="0" width="1" height="600" fill="#1c1c1c"/>
<rect x="287" y="0" width="1" height="600" fill="#1c1c1c"/>
<rect x="368" y="0" width="1" height="600" fill="#1c1c1c"/>
<rect x="449" y="0" width="1" height="600" fill="#1c1c1c"/>
<rect x="531" y="0" width="1" height="600" fill="#1c1c1c"/>
<rect x="612" y="0" width="1" height="600" fill="#1c1c1c"/>
<rect x="694" y="0" width="1" height="600" fill="#1c1c1c"/>
<rect x="775" y="0" width="1" height="600" fill="#0e0e0e"/>
<rect x="857" y="0" width="1" height="600" fill="#1c1c1c"/>
<rect x="0" y="44" width="900" height="1" fill="#1c1c1c"/>
<rect x="0" y="125" width="900" height="1" fill="#1c1c1c"/>
<rect x="0" y="207" width="900" height="1" fill="#0e0e0e"/>
<rect x="0" y="288" width="900" height="1" fill="#1c1c1c"/>
<rect x="0" y="370" width="900" height="1" fill="#1c1c1c"/>
<rect x="0" y="451" width="900" height="1" fill="#1c1c1c"/>
<rect x="0" y="533" width="900" height="1" fill="#1c1c1c"/>
<path d="M172.50,193.40 C247.20,193.40 262.50,252.80 337.20,252.80" fill="none" stroke="#000" stroke-opacity="0.35" stroke-width="3.2"/>
<path d="M255.20,282.70 C287.13,282.70 305.27,268.90 337.20,268.90" fill="none" stroke="#000" stroke-opacity="0.35" stroke-width="3.2"/>
<path d="M183.60,354.00 C257.80,354.00 263.00,285.00 337.20,285.00" fill="none" stroke="#000" stroke-opacity="0.35" stroke-width="3.2"/>
<path d="M188.20,405.00 C272.50,405.00 252.90,301.10 337.20,301.10" fill="none" stroke="#000" stroke-opacity="0.35" stroke-width="3.2"/>
<path d="M103.80,303.30 C191.60,303.30 249.40,333.30 337.20,333.30" fill="none" stroke="#000" stroke-opacity="0.35" stroke-width="3.2"/>
<path d="M91.00,446.40 C178.53,446.40 249.67,430.00 337.20,430.00" fill="none" stroke="#000" stroke-opacity="0.35" stroke-width="3.2"/>
<path d="M168.40,497.10 C241.67,497.10 263.93,446.10 337.20,446.10" fill="none" stroke="#000" stroke-opacity="0.35" stroke-width="3.2"/>
<path d="M163.50,548.00 C250.00,548.00 250.70,462.20 337.20,462.20" fill="none" stroke="#000" stroke-opacity="0.35" stroke-width="3.2"/>
<path d="M601.80,252.80 C696.40,252.80 660.20,122.00 754.80,122.00" fill="none" stroke="#000" stroke-opacity="0.35" stroke-width="3.2"/>
<path d="M601.80,252.80 C696.47,252.80 751.93,213.60 846.60,213.60" fill="none" stroke="#000" stroke-opacity="0.35" stroke-width="3.2"/>
<path d="M601.80,252.80 C667.00,252.80 689.60,295.40 754.80,295.40" fill="none" stroke="#000" stroke-opacity="0.35" stroke-width="3.2"/>
<path d="M601.80,252.80 C714.73,252.80 683.07,397.40 796.00,397.40" fill="none" stroke="#000" stroke-opacity="0.35" stroke-width="3.2"/>
<path d="M601.80,252.80 C752.03,252.80 645.77,509.30 796.00,509.30" fill="none" stroke="#000" stroke-opacity="0.35" stroke-width="3.2"/>
<path d="M825.00,122.00 C909.67,122.00 910.33,206.00 995.00,206.00" fill="none" stroke="#000" stroke-opacity="0.35" stroke-width="3.2"/>
<path d="M825.00,295.40 C971.13,295.40 1053.87,232.00 1200.00,232.00" fill="none" stroke="#000" stroke-opacity="0.35" stroke-width="3.2"/>
<path d="M864.70,397.00 C1093.80,397.00 845.90,-80.00 1075.00,-80.00" fill="none" stroke="#000" stroke-opacity="0.35" stroke-width="3.2"/>
<path d="M864.70,509.30 C1093.90,509.30 845.80,32.00 1075.00,32.00" fill="none" stroke="#000" stroke-opacity="0.35" stroke-width="3.2"/>
<path d="M172.50,193.40 C247.20,193.40 262.50,252.80 337.20,252.80" fill="none" stroke="#e6e6e6" stroke-width="1.8"/>
<path d="M255.20,282.70 C287.13,282.70 305.27,268.90 337.20,268.90" fill="none" stroke="#e6e6e6" stroke-width="1.8"/>
<path d="M183.60,354.00 C257.80,354.00 263.00,285.00 337.20,285.00" fill="none" stroke="#e6e6e6" stroke-width="1.8"/>
<path d="M188.20,405.00 C272.50,405.00 252.90,301.10 337.20,301.10" fill="none" stroke="#e6e6e6" stroke-width="1.8"/>
<path d="M103.80,303.30 C191.60,303.30 249.40,333.30 337.20,333.30" fill="none" stroke="#e6e6e6" stroke-width="1.8"/>
<path d="M91.00,446.40 C178.53,446.40 249.67,430.00 337.20,430.00" fill="none" stroke="#e6e6e6" stroke-width="1.8"/>
<path d="M168.40,497.10 C241.67,497.10 263.93,446.10 337.20,446.10" fill="none" stroke="#e6e6e6" stroke-width="1.8"/>
<path d="M163.50,548.00 C250.00,548.00 250.70,462.20 337.20,462.20" fill="none" stroke="#e6e6e6" stroke-width="1.8"/>
<path d="M601.80,252.80 C696.40,252.80 660.20,122.00 754.80,122.00" fill="none" stroke="#e6e6e6" stroke-width="1.8"/>
<path d="M601.80,252.80 C696.47,252.80 751.93,213.60 846.60,213.60" fill="none" stroke="#e6e6e6" stroke-width="1.8"/>
<path d="M601.80,252.80 C667.00,252.80 689.60,295.40 754.80,295.40" fill="none" stroke="#e6e6e6" stroke-width="1.8"/>
<path d="M601.80,252.80 C714.73,252.80 683.07,397.40 796.00,397.40" fill="none" stroke="#e6e6e6" stroke-width="1.8"/>
<path d="M601.80,252.80 C752.03,252.80 645.77,509.30 796.00,509.30" fill="none" stroke="#e6e6e6" stroke-width="1.8"/>
<path d="M825.00,122.00 C909.67,122.00 910.33,206.00 995.00,206.00" fill="none" stroke="#e6e6e6" stroke-width="1.8"/>
<path d="M825.00,295.40 C971.13,295.40 1053.87,232.00 1200.00,232.00" fill="none" stroke="#e6e6e6" stroke-width="1.8"/>
<path d="M864.70,397.00 C1093.80,397.00 845.90,-80.00 1075.00,-80.00" fill="none" stroke="#e6e6e6" stroke-width="1.8"/>
<path d="M864.70,509.30 C1093.90,509.30 845.80,32.00 1075.00,32.00" fill="none" stroke="#e6e6e6" stroke-width="1.8"/>
<rect x="94.10" y="167.10" width="89.80" height="86.80" rx="4.4" fill="#000" fill-opacity="0.6"/>
<rect x="95.00" y="168.00" width="88.00" height="85.00" rx="3.5" fill="#151815" fill-opacity="0.72"/>
<path d="M95.00,183.00 V171.50 Q95.00,168.00 98.50,168.00 H179.50 Q183.00,168.00 183.00,171.50 V183.00 Z" fill="url(#gBlue)"/>
<path d="M95.00,183.00 V171.50 Q95.00,168.00 98.50,168.00 H179.50 Q183.00,168.00 183.00,171.50 V183.00 Z" fill="url(#gGloss)"/><text x="103.80" y="179.90" font-family="Liberation Sans, sans-serif" font-size="8.6" font-weight="700" fill="#000" fill-opacity="0.55" text-anchor="start" textLength="50.2" lengthAdjust="spacingAndGlyphs">Texture Object</text><text x="103.20" y="179.20" font-family="Liberation Sans, sans-serif" font-size="8.6" font-weight="700" fill="#eeeeee" text-anchor="start" textLength="50.2" lengthAdjust="spacingAndGlyphs" stroke="#eeeeee" stroke-width="0.08">Texture Object</text><path d="M172.00,177.95 L179.00,177.95 L175.50,173.45 Z" fill="#cfcfcf"/><rect x="98.00" y="188.00" width="61.20" height="61.20" fill="url(#tw)"/><path d="M176.20,191.30 L179.00,193.40 L176.20,195.50 Z" fill="#c4c4c4"/><circle cx="172.50" cy="193.40" r="4.0" fill="#000" fill-opacity="0.35"/><circle cx="172.50" cy="193.40" r="3.4" fill="#f0f0f0"/><rect x="195.60" y="249.10" width="71.80" height="43.80" rx="4.4" fill="#000" fill-opacity="0.6"/>
<rect x="196.50" y="250.00" width="70.00" height="42.00" rx="3.5" fill="#151815" fill-opacity="0.72"/>
<path d="M196.50,274.00 V253.50 Q196.50,250.00 200.00,250.00 H263.00 Q266.50,250.00 266.50,253.50 V274.00 Z" fill="url(#gGreen)"/>
<path d="M196.50,274.00 V253.50 Q196.50,250.00 200.00,250.00 H263.00 Q266.50,250.00 266.50,253.50 V274.00 Z" fill="url(#gGloss)"/>
<text x="205.60" y="261.00" font-family="Liberation Sans, sans-serif" font-size="8.8" font-weight="700" fill="#000" fill-opacity="0.55" text-anchor="start" textLength="40.0" lengthAdjust="spacingAndGlyphs">HeightRatio</text><text x="205.00" y="260.30" font-family="Liberation Sans, sans-serif" font-size="8.8" font-weight="700" fill="#eeeeee" text-anchor="start" textLength="40.0" lengthAdjust="spacingAndGlyphs" stroke="#eeeeee" stroke-width="0.05">HeightRatio</text>
<text x="204.80" y="270.20" font-family="Liberation Sans, sans-serif" font-size="8.5" font-weight="400" fill="#a8b890" text-anchor="start" font-style="italic" textLength="43.0" lengthAdjust="spacingAndGlyphs">Param (0.08)</text>
<path d="M255.50,258.00 L262.50,258.00 L259.00,263.00 Z" fill="#d6d6d6"/>
<path d="M258.90,280.60 L261.70,282.70 L258.90,284.80 Z" fill="#c4c4c4"/><circle cx="255.20" cy="282.70" r="4.0" fill="#000" fill-opacity="0.35"/><circle cx="255.20" cy="282.70" r="3.4" fill="#f0f0f0"/><rect x="22.80" y="268.80" width="93.10" height="109.10" rx="4.4" fill="#000" fill-opacity="0.6"/>
<rect x="23.70" y="269.70" width="91.30" height="107.30" rx="3.5" fill="#151815" fill-opacity="0.72"/>
<path d="M23.70,293.70 V273.20 Q23.70,269.70 27.20,269.70 H111.50 Q115.00,269.70 115.00,273.20 V293.70 Z" fill="url(#gGold)"/>
<path d="M23.70,293.70 V273.20 Q23.70,269.70 27.20,269.70 H111.50 Q115.00,269.70 115.00,273.20 V293.70 Z" fill="url(#gGloss)"/>
<text x="32.80" y="280.70" font-family="Liberation Sans, sans-serif" font-size="8.8" font-weight="700" fill="#000" fill-opacity="0.55" text-anchor="start" textLength="65.4" lengthAdjust="spacingAndGlyphs">HeightmapChannel</text><text x="32.20" y="280.00" font-family="Liberation Sans, sans-serif" font-size="8.8" font-weight="700" fill="#eeeeee" text-anchor="start" textLength="65.4" lengthAdjust="spacingAndGlyphs" stroke="#eeeeee" stroke-width="0.05">HeightmapChannel</text>
<text x="32.00" y="289.90" font-family="Liberation Sans, sans-serif" font-size="8.5" font-weight="400" fill="#a8945e" text-anchor="start" font-style="italic" textLength="48.0" lengthAdjust="spacingAndGlyphs">Param (1,0,0,0)</text>
<path d="M104.20,284.55 L111.20,284.55 L107.70,280.05 Z" fill="#cfcfcf"/><rect x="27.00" y="298.00" width="61.20" height="61.20" fill="url(#red)"/><rect x="27" y="298" width="61.2" height="61.2" fill="#fa0606"/><path d="M107.50,301.20 L110.30,303.30 L107.50,305.40 Z" fill="#c4c4c4"/><circle cx="103.80" cy="303.30" r="4.0" fill="#000" fill-opacity="0.35"/><circle cx="103.80" cy="303.30" r="3.4" fill="#f0f0f0"/><path d="M107.10,317.30 L109.70,319.10 L107.10,320.90 Z" fill="#e01818"/><circle cx="103.80" cy="319.10" r="2.9" fill="#0c0c0c" stroke="#e01818" stroke-width="1.3"/><path d="M107.10,334.00 L109.70,335.80 L107.10,337.60 Z" fill="#18d018"/><circle cx="103.80" cy="335.80" r="2.9" fill="#0c0c0c" stroke="#18d018" stroke-width="1.3"/><path d="M107.10,350.20 L109.70,352.00 L107.10,353.80 Z" fill="#1616d0"/><circle cx="103.80" cy="352.00" r="2.9" fill="#0c0c0c" stroke="#1616d0" stroke-width="1.3"/><path d="M107.10,366.10 L109.70,367.90 L107.10,369.70 Z" fill="#a8a8a8"/><circle cx="103.80" cy="367.90" r="2.9" fill="#0c0c0c" stroke="#a8a8a8" stroke-width="1.3"/><rect x="135.10" y="320.10" width="60.40" height="43.60" rx="4.4" fill="#000" fill-opacity="0.6"/>
<rect x="136.00" y="321.00" width="58.60" height="41.80" rx="3.5" fill="#151815" fill-opacity="0.72"/>
<path d="M136.00,345.00 V324.50 Q136.00,321.00 139.50,321.00 H191.10 Q194.60,321.00 194.60,324.50 V345.00 Z" fill="url(#gGreen)"/>
<path d="M136.00,345.00 V324.50 Q136.00,321.00 139.50,321.00 H191.10 Q194.60,321.00 194.60,324.50 V345.00 Z" fill="url(#gGloss)"/>
<text x="145.10" y="332.00" font-family="Liberation Sans, sans-serif" font-size="8.8" font-weight="700" fill="#000" fill-opacity="0.55" text-anchor="start" textLength="32.5" lengthAdjust="spacingAndGlyphs">MinSteps</text><text x="144.50" y="331.30" font-family="Liberation Sans, sans-serif" font-size="8.8" font-weight="700" fill="#eeeeee" text-anchor="start" textLength="32.5" lengthAdjust="spacingAndGlyphs" stroke="#eeeeee" stroke-width="0.05">MinSteps</text>
<text x="144.30" y="341.20" font-family="Liberation Sans, sans-serif" font-size="8.5" font-weight="400" fill="#a8b890" text-anchor="start" font-style="italic" textLength="32.5" lengthAdjust="spacingAndGlyphs">Param (8)</text>
<path d="M184.40,329.50 L191.40,329.50 L187.90,334.50 Z" fill="#d6d6d6"/>
<path d="M187.30,351.90 L190.10,354.00 L187.30,356.10 Z" fill="#c4c4c4"/><circle cx="183.60" cy="354.00" r="4.0" fill="#000" fill-opacity="0.35"/><circle cx="183.60" cy="354.00" r="3.4" fill="#f0f0f0"/><rect x="135.10" y="371.40" width="64.80" height="43.10" rx="4.4" fill="#000" fill-opacity="0.6"/>
<rect x="136.00" y="372.30" width="63.00" height="41.30" rx="3.5" fill="#151815" fill-opacity="0.72"/>
<path d="M136.00,396.30 V375.80 Q136.00,372.30 139.50,372.30 H195.50 Q199.00,372.30 199.00,375.80 V396.30 Z" fill="url(#gGreen)"/>
<path d="M136.00,396.30 V375.80 Q136.00,372.30 139.50,372.30 H195.50 Q199.00,372.30 199.00,375.80 V396.30 Z" fill="url(#gGloss)"/>
<text x="145.10" y="383.30" font-family="Liberation Sans, sans-serif" font-size="8.8" font-weight="700" fill="#000" fill-opacity="0.55" text-anchor="start" textLength="35.0" lengthAdjust="spacingAndGlyphs">MaxSteps</text><text x="144.50" y="382.60" font-family="Liberation Sans, sans-serif" font-size="8.8" font-weight="700" fill="#eeeeee" text-anchor="start" textLength="35.0" lengthAdjust="spacingAndGlyphs" stroke="#eeeeee" stroke-width="0.05">MaxSteps</text>
<text x="144.30" y="392.50" font-family="Liberation Sans, sans-serif" font-size="8.5" font-weight="400" fill="#a8b890" text-anchor="start" font-style="italic" textLength="36.7" lengthAdjust="spacingAndGlyphs">Param (32)</text>
<path d="M188.40,380.50 L195.40,380.50 L191.90,385.50 Z" fill="#d6d6d6"/>
<path d="M191.90,402.90 L194.70,405.00 L191.90,407.10 Z" fill="#c4c4c4"/><circle cx="188.20" cy="405.00" r="4.0" fill="#000" fill-opacity="0.35"/><circle cx="188.20" cy="405.00" r="3.4" fill="#f0f0f0"/><rect x="32.85" y="411.35" width="69.40" height="44.20" rx="4.4" fill="#000" fill-opacity="0.6"/>
<rect x="33.75" y="412.25" width="67.60" height="42.40" rx="3.5" fill="#151815" fill-opacity="0.72"/>
<path d="M33.75,436.25 V415.75 Q33.75,412.25 37.25,412.25 H97.85 Q101.35,412.25 101.35,415.75 V436.25 Z" fill="url(#gRed)"/>
<path d="M33.75,436.25 V415.75 Q33.75,412.25 37.25,412.25 H97.85 Q101.35,412.25 101.35,415.75 V436.25 Z" fill="url(#gGloss)"/>
<text x="42.85" y="423.25" font-family="Liberation Sans, sans-serif" font-size="8.8" font-weight="700" fill="#000" fill-opacity="0.55" text-anchor="start" textLength="41.0" lengthAdjust="spacingAndGlyphs">Light Vector</text><text x="42.25" y="422.55" font-family="Liberation Sans, sans-serif" font-size="8.8" font-weight="700" fill="#eeeeee" text-anchor="start" textLength="41.0" lengthAdjust="spacingAndGlyphs" stroke="#eeeeee" stroke-width="0.05">Light Vector</text>
<text x="42.05" y="432.45" font-family="Liberation Sans, sans-serif" font-size="8.5" font-weight="400" fill="#c99a86" text-anchor="start" font-style="italic" textLength="34.0" lengthAdjust="spacingAndGlyphs">Input Data</text>
<path d="M91.30,420.80 L98.30,420.80 L94.80,425.80 Z" fill="#d6d6d6"/>
<path d="M94.70,444.30 L97.50,446.40 L94.70,448.50 Z" fill="#c4c4c4"/><circle cx="91.00" cy="446.40" r="4.0" fill="#000" fill-opacity="0.35"/><circle cx="91.00" cy="446.40" r="3.4" fill="#f0f0f0"/><rect x="104.30" y="462.90" width="76.00" height="42.80" rx="4.4" fill="#000" fill-opacity="0.6"/>
<rect x="105.20" y="463.80" width="74.20" height="41.00" rx="3.5" fill="#151815" fill-opacity="0.72"/>
<path d="M105.20,487.80 V467.30 Q105.20,463.80 108.70,463.80 H175.90 Q179.40,463.80 179.40,467.30 V487.80 Z" fill="url(#gGreen)"/>
<path d="M105.20,487.80 V467.30 Q105.20,463.80 108.70,463.80 H175.90 Q179.40,463.80 179.40,467.30 V487.80 Z" fill="url(#gGloss)"/>
<text x="114.30" y="474.80" font-family="Liberation Sans, sans-serif" font-size="8.8" font-weight="700" fill="#000" fill-opacity="0.55" text-anchor="start" textLength="47.6" lengthAdjust="spacingAndGlyphs">ShadowSteps</text><text x="113.70" y="474.10" font-family="Liberation Sans, sans-serif" font-size="8.8" font-weight="700" fill="#eeeeee" text-anchor="start" textLength="47.6" lengthAdjust="spacingAndGlyphs" stroke="#eeeeee" stroke-width="0.05">ShadowSteps</text>
<text x="113.50" y="484.00" font-family="Liberation Sans, sans-serif" font-size="8.5" font-weight="400" fill="#a8b890" text-anchor="start" font-style="italic" textLength="37.0" lengthAdjust="spacingAndGlyphs">Param (16)</text>
<path d="M169.00,471.70 L176.00,471.70 L172.50,476.70 Z" fill="#d6d6d6"/>
<path d="M172.10,495.00 L174.90,497.10 L172.10,499.20 Z" fill="#c4c4c4"/><circle cx="168.40" cy="497.10" r="4.0" fill="#000" fill-opacity="0.35"/><circle cx="168.40" cy="497.10" r="3.4" fill="#f0f0f0"/><rect x="84.20" y="513.60" width="90.70" height="43.10" rx="4.4" fill="#000" fill-opacity="0.6"/>
<rect x="85.10" y="514.50" width="88.90" height="41.30" rx="3.5" fill="#151815" fill-opacity="0.72"/>
<path d="M85.10,538.50 V518.00 Q85.10,514.50 88.60,514.50 H170.50 Q174.00,514.50 174.00,518.00 V538.50 Z" fill="url(#gGreen)"/>
<path d="M85.10,538.50 V518.00 Q85.10,514.50 88.60,514.50 H170.50 Q174.00,514.50 174.00,518.00 V538.50 Z" fill="url(#gGloss)"/>
<text x="94.20" y="525.50" font-family="Liberation Sans, sans-serif" font-size="8.8" font-weight="700" fill="#000" fill-opacity="0.55" text-anchor="start" textLength="63.5" lengthAdjust="spacingAndGlyphs">ShadowPenumbra</text><text x="93.60" y="524.80" font-family="Liberation Sans, sans-serif" font-size="8.8" font-weight="700" fill="#eeeeee" text-anchor="start" textLength="63.5" lengthAdjust="spacingAndGlyphs" stroke="#eeeeee" stroke-width="0.05">ShadowPenumbra</text>
<text x="93.40" y="534.70" font-family="Liberation Sans, sans-serif" font-size="8.5" font-weight="400" fill="#a8b890" text-anchor="start" font-style="italic" textLength="33.0" lengthAdjust="spacingAndGlyphs">Param (1)</text>
<path d="M164.00,522.50 L171.00,522.50 L167.50,527.50 Z" fill="#d6d6d6"/>
<path d="M167.20,545.90 L170.00,548.00 L167.20,550.10 Z" fill="#c4c4c4"/><circle cx="163.50" cy="548.00" r="4.0" fill="#000" fill-opacity="0.35"/><circle cx="163.50" cy="548.00" r="3.4" fill="#f0f0f0"/><rect x="328.10" y="228.10" width="284.80" height="243.80" rx="4.4" fill="#000" fill-opacity="0.6"/>
<rect x="329.00" y="229.00" width="283.00" height="242.00" rx="3.5" fill="#151815" fill-opacity="0.72"/>
<path d="M329.00,244.00 V232.50 Q329.00,229.00 332.50,229.00 H608.50 Q612.00,229.00 612.00,232.50 V244.00 Z" fill="url(#gBlueWide)"/>
<path d="M329.00,244.00 V232.50 Q329.00,229.00 332.50,229.00 H608.50 Q612.00,229.00 612.00,232.50 V244.00 Z" fill="url(#gGloss)"/><text x="338.00" y="240.30" font-family="Liberation Sans, sans-serif" font-size="8.7" font-weight="700" fill="#000" fill-opacity="0.55" text-anchor="start" textLength="91.5" lengthAdjust="spacingAndGlyphs">ParallaxOcclusionMapping</text><text x="337.40" y="239.60" font-family="Liberation Sans, sans-serif" font-size="8.7" font-weight="700" fill="#f2f2f2" text-anchor="start" textLength="91.5" lengthAdjust="spacingAndGlyphs">ParallaxOcclusionMapping</text><path d="M340.90,250.70 L343.70,252.80 L340.90,254.90 Z" fill="#c4c4c4"/><circle cx="337.20" cy="252.80" r="4.0" fill="#000" fill-opacity="0.35"/><circle cx="337.20" cy="252.80" r="3.4" fill="#f0f0f0"/><text x="347.40" y="256.40" font-family="Liberation Sans, sans-serif" font-size="9.0" font-weight="400" fill="#000" fill-opacity="0.55" text-anchor="start" transform="translate(346.80,0) scale(0.8,1) translate(-346.80,0)">Heightmap Texture (T2d)</text><text x="346.80" y="255.70" font-family="Liberation Sans, sans-serif" font-size="9.0" font-weight="400" fill="#e2e2e2" text-anchor="start" transform="translate(346.80,0) scale(0.8,1) translate(-346.80,0)" stroke="#e2e2e2" stroke-width="0.08">Heightmap Texture (T2d)</text><path d="M340.75,266.90 L343.35,268.90 L340.75,270.90 Z" fill="#333333"/><circle cx="337.20" cy="268.90" r="3.35" fill="#3e3e3e"/><text x="347.40" y="272.50" font-family="Liberation Sans, sans-serif" font-size="9.0" font-weight="400" fill="#000" fill-opacity="0.55" text-anchor="start" transform="translate(346.80,0) scale(0.8,1) translate(-346.80,0)">Height Ratio (S)</text><text x="346.80" y="271.80" font-family="Liberation Sans, sans-serif" font-size="9.0" font-weight="400" fill="#e2e2e2" text-anchor="start" transform="translate(346.80,0) scale(0.8,1) translate(-346.80,0)" stroke="#e2e2e2" stroke-width="0.08">Height Ratio (S)</text><path d="M340.75,283.00 L343.35,285.00 L340.75,287.00 Z" fill="#333333"/><circle cx="337.20" cy="285.00" r="3.35" fill="#3e3e3e"/><text x="347.40" y="288.60" font-family="Liberation Sans, sans-serif" font-size="9.0" font-weight="400" fill="#000" fill-opacity="0.55" text-anchor="start" transform="translate(346.80,0) scale(0.8,1) translate(-346.80,0)">Min Steps (S)</text><text x="346.80" y="287.90" font-family="Liberation Sans, sans-serif" font-size="9.0" font-weight="400" fill="#e2e2e2" text-anchor="start" transform="translate(346.80,0) scale(0.8,1) translate(-346.80,0)" stroke="#e2e2e2" stroke-width="0.08">Min Steps (S)</text><path d="M340.75,299.10 L343.35,301.10 L340.75,303.10 Z" fill="#333333"/><circle cx="337.20" cy="301.10" r="3.35" fill="#3e3e3e"/><text x="347.40" y="304.70" font-family="Liberation Sans, sans-serif" font-size="9.0" font-weight="400" fill="#000" fill-opacity="0.55" text-anchor="start" transform="translate(346.80,0) scale(0.8,1) translate(-346.80,0)">Max Steps (S)</text><text x="346.80" y="304.00" font-family="Liberation Sans, sans-serif" font-size="9.0" font-weight="400" fill="#e2e2e2" text-anchor="start" transform="translate(346.80,0) scale(0.8,1) translate(-346.80,0)" stroke="#e2e2e2" stroke-width="0.08">Max Steps (S)</text><path d="M340.60,315.30 L343.20,317.20 L340.60,319.10 Z" fill="#333333"/><circle cx="337.20" cy="317.20" r="3.1" fill="#101010" stroke="#3a3a3a" stroke-width="1.1"/><text x="347.40" y="320.80" font-family="Liberation Sans, sans-serif" font-size="9.0" font-weight="400" fill="#000" fill-opacity="0.55" text-anchor="start" transform="translate(346.80,0) scale(0.8,1) translate(-346.80,0)">UVs (V2)</text><text x="346.80" y="320.10" font-family="Liberation Sans, sans-serif" font-size="9.0" font-weight="400" fill="#e2e2e2" text-anchor="start" transform="translate(346.80,0) scale(0.8,1) translate(-346.80,0)" stroke="#e2e2e2" stroke-width="0.08">UVs (V2)</text><path d="M340.75,331.30 L343.35,333.30 L340.75,335.30 Z" fill="#333333"/><circle cx="337.20" cy="333.30" r="3.35" fill="#3e3e3e"/><text x="347.40" y="336.90" font-family="Liberation Sans, sans-serif" font-size="9.0" font-weight="400" fill="#000" fill-opacity="0.55" text-anchor="start" transform="translate(346.80,0) scale(0.8,1) translate(-346.80,0)">Heightmap Channel (V4)</text><text x="346.80" y="336.20" font-family="Liberation Sans, sans-serif" font-size="9.0" font-weight="400" fill="#e2e2e2" text-anchor="start" transform="translate(346.80,0) scale(0.8,1) translate(-346.80,0)" stroke="#e2e2e2" stroke-width="0.08">Heightmap Channel (V4)</text><path d="M340.60,347.50 L343.20,349.40 L340.60,351.30 Z" fill="#333333"/><circle cx="337.20" cy="349.40" r="3.1" fill="#101010" stroke="#3a3a3a" stroke-width="1.1"/><text x="347.40" y="353.00" font-family="Liberation Sans, sans-serif" font-size="9.0" font-weight="400" fill="#000" fill-opacity="0.55" text-anchor="start" transform="translate(346.80,0) scale(0.8,1) translate(-346.80,0)">------------------------------ (B)</text><text x="346.80" y="352.30" font-family="Liberation Sans, sans-serif" font-size="9.0" font-weight="400" fill="#e2e2e2" text-anchor="start" transform="translate(346.80,0) scale(0.8,1) translate(-346.80,0)" stroke="#e2e2e2" stroke-width="0.08">------------------------------ (B)</text><path d="M340.60,363.60 L343.20,365.50 L340.60,367.40 Z" fill="#333333"/><circle cx="337.20" cy="365.50" r="3.1" fill="#101010" stroke="#3a3a3a" stroke-width="1.1"/><text x="347.40" y="369.10" font-family="Liberation Sans, sans-serif" font-size="9.0" font-weight="400" fill="#000" fill-opacity="0.55" text-anchor="start" transform="translate(346.80,0) scale(0.8,1) translate(-346.80,0)">Specify Manual Texture Size (B)</text><text x="346.80" y="368.40" font-family="Liberation Sans, sans-serif" font-size="9.0" font-weight="400" fill="#e2e2e2" text-anchor="start" transform="translate(346.80,0) scale(0.8,1) translate(-346.80,0)" stroke="#e2e2e2" stroke-width="0.08">Specify Manual Texture Size (B)</text><path d="M340.60,379.70 L343.20,381.60 L340.60,383.50 Z" fill="#333333"/><circle cx="337.20" cy="381.60" r="3.1" fill="#101010" stroke="#3a3a3a" stroke-width="1.1"/><text x="347.40" y="385.20" font-family="Liberation Sans, sans-serif" font-size="9.0" font-weight="400" fill="#000" fill-opacity="0.55" text-anchor="start" transform="translate(346.80,0) scale(0.8,1) translate(-346.80,0)">Manual Texture Size (S)</text><text x="346.80" y="384.50" font-family="Liberation Sans, sans-serif" font-size="9.0" font-weight="400" fill="#e2e2e2" text-anchor="start" transform="translate(346.80,0) scale(0.8,1) translate(-346.80,0)" stroke="#e2e2e2" stroke-width="0.08">Manual Texture Size (S)</text><path d="M340.60,395.80 L343.20,397.70 L340.60,399.60 Z" fill="#333333"/><circle cx="337.20" cy="397.70" r="3.1" fill="#101010" stroke="#3a3a3a" stroke-width="1.1"/><text x="347.40" y="401.30" font-family="Liberation Sans, sans-serif" font-size="9.0" font-weight="400" fill="#000" fill-opacity="0.55" text-anchor="start" transform="translate(346.80,0) scale(0.8,1) translate(-346.80,0)">------------------------------ (B)</text><text x="346.80" y="400.60" font-family="Liberation Sans, sans-serif" font-size="9.0" font-weight="400" fill="#e2e2e2" text-anchor="start" transform="translate(346.80,0) scale(0.8,1) translate(-346.80,0)" stroke="#e2e2e2" stroke-width="0.08">------------------------------ (B)</text><path d="M340.60,411.90 L343.20,413.80 L340.60,415.70 Z" fill="#333333"/><circle cx="337.20" cy="413.80" r="3.1" fill="#101010" stroke="#3a3a3a" stroke-width="1.1"/><text x="347.40" y="417.40" font-family="Liberation Sans, sans-serif" font-size="9.0" font-weight="400" fill="#000" fill-opacity="0.55" text-anchor="start" transform="translate(346.80,0) scale(0.8,1) translate(-346.80,0)">Render Shadows (Occlusion Mapping) (B)</text><text x="346.80" y="416.70" font-family="Liberation Sans, sans-serif" font-size="9.0" font-weight="400" fill="#e2e2e2" text-anchor="start" transform="translate(346.80,0) scale(0.8,1) translate(-346.80,0)" stroke="#e2e2e2" stroke-width="0.08">Render Shadows (Occlusion Mapping) (B)</text><path d="M340.75,427.90 L343.35,429.90 L340.75,431.90 Z" fill="#333333"/><circle cx="337.20" cy="429.90" r="3.35" fill="#3e3e3e"/><text x="347.40" y="433.50" font-family="Liberation Sans, sans-serif" font-size="9.0" font-weight="400" fill="#000" fill-opacity="0.55" text-anchor="start" transform="translate(346.80,0) scale(0.8,1) translate(-346.80,0)">Light Vector (V3)</text><text x="346.80" y="432.80" font-family="Liberation Sans, sans-serif" font-size="9.0" font-weight="400" fill="#e2e2e2" text-anchor="start" transform="translate(346.80,0) scale(0.8,1) translate(-346.80,0)" stroke="#e2e2e2" stroke-width="0.08">Light Vector (V3)</text><path d="M340.75,444.00 L343.35,446.00 L340.75,448.00 Z" fill="#333333"/><circle cx="337.20" cy="446.00" r="3.35" fill="#3e3e3e"/><text x="347.40" y="449.60" font-family="Liberation Sans, sans-serif" font-size="9.0" font-weight="400" fill="#000" fill-opacity="0.55" text-anchor="start" transform="translate(346.80,0) scale(0.8,1) translate(-346.80,0)">Shadow Steps (S)</text><text x="346.80" y="448.90" font-family="Liberation Sans, sans-serif" font-size="9.0" font-weight="400" fill="#e2e2e2" text-anchor="start" transform="translate(346.80,0) scale(0.8,1) translate(-346.80,0)" stroke="#e2e2e2" stroke-width="0.08">Shadow Steps (S)</text><path d="M340.75,460.10 L343.35,462.10 L340.75,464.10 Z" fill="#333333"/><circle cx="337.20" cy="462.10" r="3.35" fill="#3e3e3e"/><text x="347.40" y="465.70" font-family="Liberation Sans, sans-serif" font-size="9.0" font-weight="400" fill="#000" fill-opacity="0.55" text-anchor="start" transform="translate(346.80,0) scale(0.8,1) translate(-346.80,0)">Shadow Penumbra (S)</text><text x="346.80" y="465.00" font-family="Liberation Sans, sans-serif" font-size="9.0" font-weight="400" fill="#e2e2e2" text-anchor="start" transform="translate(346.80,0) scale(0.8,1) translate(-346.80,0)" stroke="#e2e2e2" stroke-width="0.08">Shadow Penumbra (S)</text><path d="M605.50,250.70 L608.30,252.80 L605.50,254.90 Z" fill="#c4c4c4"/><circle cx="601.80" cy="252.80" r="4.0" fill="#000" fill-opacity="0.35"/><circle cx="601.80" cy="252.80" r="3.4" fill="#f0f0f0"/><text x="595.00" y="256.40" font-family="Liberation Sans, sans-serif" font-size="9.0" font-weight="400" fill="#000" fill-opacity="0.55" text-anchor="end" transform="translate(594.40,0) scale(0.8,1) translate(-594.40,0)">Parallax UVs</text><text x="594.40" y="255.70" font-family="Liberation Sans, sans-serif" font-size="9.0" font-weight="400" fill="#e2e2e2" text-anchor="end" transform="translate(594.40,0) scale(0.8,1) translate(-594.40,0)" stroke="#e2e2e2" stroke-width="0.08">Parallax UVs</text><path d="M605.10,267.10 L607.70,268.90 L605.10,270.70 Z" fill="#dcdcdc"/><circle cx="601.80" cy="268.90" r="2.9" fill="#0c0c0c" stroke="#dcdcdc" stroke-width="1.3"/><text x="595.00" y="272.50" font-family="Liberation Sans, sans-serif" font-size="9.0" font-weight="400" fill="#000" fill-opacity="0.55" text-anchor="end" transform="translate(594.40,0) scale(0.8,1) translate(-594.40,0)">Offset Only</text><text x="594.40" y="271.80" font-family="Liberation Sans, sans-serif" font-size="9.0" font-weight="400" fill="#e2e2e2" text-anchor="end" transform="translate(594.40,0) scale(0.8,1) translate(-594.40,0)" stroke="#e2e2e2" stroke-width="0.08">Offset Only</text><path d="M605.10,283.20 L607.70,285.00 L605.10,286.80 Z" fill="#dcdcdc"/><circle cx="601.80" cy="285.00" r="2.9" fill="#0c0c0c" stroke="#dcdcdc" stroke-width="1.3"/><text x="595.00" y="288.60" font-family="Liberation Sans, sans-serif" font-size="9.0" font-weight="400" fill="#000" fill-opacity="0.55" text-anchor="end" transform="translate(594.40,0) scale(0.8,1) translate(-594.40,0)">Shadow</text><text x="594.40" y="287.90" font-family="Liberation Sans, sans-serif" font-size="9.0" font-weight="400" fill="#e2e2e2" text-anchor="end" transform="translate(594.40,0) scale(0.8,1) translate(-594.40,0)" stroke="#e2e2e2" stroke-width="0.08">Shadow</text><path d="M605.10,299.30 L607.70,301.10 L605.10,302.90 Z" fill="#dcdcdc"/><circle cx="601.80" cy="301.10" r="2.9" fill="#0c0c0c" stroke="#dcdcdc" stroke-width="1.3"/><text x="595.00" y="304.70" font-family="Liberation Sans, sans-serif" font-size="9.0" font-weight="400" fill="#000" fill-opacity="0.55" text-anchor="end" transform="translate(594.40,0) scale(0.8,1) translate(-594.40,0)">Pixel Depth Offset</text><text x="594.40" y="304.00" font-family="Liberation Sans, sans-serif" font-size="9.0" font-weight="400" fill="#e2e2e2" text-anchor="end" transform="translate(594.40,0) scale(0.8,1) translate(-594.40,0)" stroke="#e2e2e2" stroke-width="0.08">Pixel Depth Offset</text><path d="M605.10,315.40 L607.70,317.20 L605.10,319.00 Z" fill="#dcdcdc"/><circle cx="601.80" cy="317.20" r="2.9" fill="#0c0c0c" stroke="#dcdcdc" stroke-width="1.3"/><text x="595.00" y="320.80" font-family="Liberation Sans, sans-serif" font-size="9.0" font-weight="400" fill="#000" fill-opacity="0.55" text-anchor="end" transform="translate(594.40,0) scale(0.8,1) translate(-594.40,0)">Z Offset</text><text x="594.40" y="320.10" font-family="Liberation Sans, sans-serif" font-size="9.0" font-weight="400" fill="#e2e2e2" text-anchor="end" transform="translate(594.40,0) scale(0.8,1) translate(-594.40,0)" stroke="#e2e2e2" stroke-width="0.08">Z Offset</text><path d="M605.10,331.50 L607.70,333.30 L605.10,335.10 Z" fill="#dcdcdc"/><circle cx="601.80" cy="333.30" r="2.9" fill="#0c0c0c" stroke="#dcdcdc" stroke-width="1.3"/><text x="595.00" y="336.90" font-family="Liberation Sans, sans-serif" font-size="9.0" font-weight="400" fill="#000" fill-opacity="0.55" text-anchor="end" transform="translate(594.40,0) scale(0.8,1) translate(-594.40,0)">Tangent Light Vector</text><text x="594.40" y="336.20" font-family="Liberation Sans, sans-serif" font-size="9.0" font-weight="400" fill="#e2e2e2" text-anchor="end" transform="translate(594.40,0) scale(0.8,1) translate(-594.40,0)" stroke="#e2e2e2" stroke-width="0.08">Tangent Light Vector</text><path d="M605.10,347.60 L607.70,349.40 L605.10,351.20 Z" fill="#dcdcdc"/><circle cx="601.80" cy="349.40" r="2.9" fill="#0c0c0c" stroke="#dcdcdc" stroke-width="1.3"/><text x="595.00" y="353.00" font-family="Liberation Sans, sans-serif" font-size="9.0" font-weight="400" fill="#000" fill-opacity="0.55" text-anchor="end" transform="translate(594.40,0) scale(0.8,1) translate(-594.40,0)">Material Complexity - Steps Debug</text><text x="594.40" y="352.30" font-family="Liberation Sans, sans-serif" font-size="9.0" font-weight="400" fill="#e2e2e2" text-anchor="end" transform="translate(594.40,0) scale(0.8,1) translate(-594.40,0)" stroke="#e2e2e2" stroke-width="0.08">Material Complexity - Steps Debug</text><rect x="746.10" y="96.50" width="90.10" height="101.70" rx="4.4" fill="#000" fill-opacity="0.6"/>
<rect x="747.00" y="97.40" width="88.30" height="99.90" rx="3.5" fill="#151815" fill-opacity="0.72"/>
<path d="M747.00,112.00 V100.90 Q747.00,97.40 750.50,97.40 H831.80 Q835.30,97.40 835.30,100.90 V112.00 Z" fill="url(#gBlue)"/>
<path d="M747.00,112.00 V100.90 Q747.00,97.40 750.50,97.40 H831.80 Q835.30,97.40 835.30,100.90 V112.00 Z" fill="url(#gGloss)"/>
<text x="756.20" y="108.70" font-family="Liberation Sans, sans-serif" font-size="8.6" font-weight="700" fill="#000" fill-opacity="0.55" text-anchor="start" textLength="53.3" lengthAdjust="spacingAndGlyphs">Texture Sample</text><text x="755.60" y="108.00" font-family="Liberation Sans, sans-serif" font-size="8.6" font-weight="700" fill="#eeeeee" text-anchor="start" textLength="53.3" lengthAdjust="spacingAndGlyphs" stroke="#eeeeee" stroke-width="0.08">Texture Sample</text>
<path d="M824.20,108.05 L831.20,108.05 L827.70,103.55 Z" fill="#cfcfcf"/>
<path d="M758.55,120.00 L761.15,122.00 L758.55,124.00 Z" fill="#333333"/><circle cx="755.00" cy="122.00" r="3.35" fill="#3e3e3e"/>
<text x="764.60" y="125.60" font-family="Liberation Sans, sans-serif" font-size="9.0" font-weight="400" fill="#000" fill-opacity="0.55" text-anchor="start" transform="translate(764.00,0) scale(0.82,1) translate(-764.00,0)">UVs</text><text x="764.00" y="124.90" font-family="Liberation Sans, sans-serif" font-size="9.0" font-weight="400" fill="#e4e4e4" text-anchor="start" transform="translate(764.00,0) scale(0.82,1) translate(-764.00,0)" stroke="#e4e4e4" stroke-width="0.08">UVs</text>
<rect x="750.00" y="133.30" width="62.00" height="61.20" fill="url(#tb)"/>
<path d="M828.70,119.90 L831.50,122.00 L828.70,124.10 Z" fill="#c4c4c4"/><circle cx="825.00" cy="122.00" r="4.0" fill="#000" fill-opacity="0.35"/><circle cx="825.00" cy="122.00" r="3.4" fill="#f0f0f0"/>
<path d="M828.30,136.20 L830.90,138.00 L828.30,139.80 Z" fill="#e01818"/><circle cx="825.00" cy="138.00" r="2.9" fill="#0c0c0c" stroke="#e01818" stroke-width="1.3"/>
<path d="M828.30,152.40 L830.90,154.20 L828.30,156.00 Z" fill="#18d018"/><circle cx="825.00" cy="154.20" r="2.9" fill="#0c0c0c" stroke="#18d018" stroke-width="1.3"/>
<path d="M828.30,168.40 L830.90,170.20 L828.30,172.00 Z" fill="#1616d0"/><circle cx="825.00" cy="170.20" r="2.9" fill="#0c0c0c" stroke="#1616d0" stroke-width="1.3"/>
<path d="M828.30,184.60 L830.90,186.40 L828.30,188.20 Z" fill="#a8a8a8"/><circle cx="825.00" cy="186.40" r="2.9" fill="#0c0c0c" stroke="#a8a8a8" stroke-width="1.3"/><rect x="837.10" y="187.50" width="121.80" height="101.70" rx="4.4" fill="#000" fill-opacity="0.6"/>
<rect x="838.00" y="188.40" width="120.00" height="99.90" rx="3.5" fill="#151815" fill-opacity="0.72"/>
<path d="M838.00,203.00 V191.90 Q838.00,188.40 841.50,188.40 H954.50 Q958.00,188.40 958.00,191.90 V203.00 Z" fill="url(#gBlue)"/>
<path d="M838.00,203.00 V191.90 Q838.00,188.40 841.50,188.40 H954.50 Q958.00,188.40 958.00,191.90 V203.00 Z" fill="url(#gGloss)"/>
<text x="847.20" y="199.70" font-family="Liberation Sans, sans-serif" font-size="8.6" font-weight="700" fill="#000" fill-opacity="0.55" text-anchor="start" textLength="53.3" lengthAdjust="spacingAndGlyphs">Texture Sample</text><text x="846.60" y="199.00" font-family="Liberation Sans, sans-serif" font-size="8.6" font-weight="700" fill="#eeeeee" text-anchor="start" textLength="53.3" lengthAdjust="spacingAndGlyphs" stroke="#eeeeee" stroke-width="0.08">Texture Sample</text>
<path d="M915.20,199.05 L922.20,199.05 L918.70,194.55 Z" fill="#cfcfcf"/>
<path d="M849.55,211.00 L852.15,213.00 L849.55,215.00 Z" fill="#333333"/><circle cx="846.00" cy="213.00" r="3.35" fill="#3e3e3e"/>
<text x="855.60" y="216.60" font-family="Liberation Sans, sans-serif" font-size="9.0" font-weight="400" fill="#000" fill-opacity="0.55" text-anchor="start" transform="translate(855.00,0) scale(0.82,1) translate(-855.00,0)">UVs</text><text x="855.00" y="215.90" font-family="Liberation Sans, sans-serif" font-size="9.0" font-weight="400" fill="#e4e4e4" text-anchor="start" transform="translate(855.00,0) scale(0.82,1) translate(-855.00,0)" stroke="#e4e4e4" stroke-width="0.08">UVs</text>
<rect x="841.00" y="224.30" width="120.00" height="61.20" fill="url(#black)"/><rect x="841" y="224" width="70" height="62" fill="#000"/><rect x="746.10" y="269.50" width="90.10" height="101.70" rx="4.4" fill="#000" fill-opacity="0.6"/>
<rect x="747.00" y="270.40" width="88.30" height="99.90" rx="3.5" fill="#151815" fill-opacity="0.72"/>
<path d="M747.00,285.00 V273.90 Q747.00,270.40 750.50,270.40 H831.80 Q835.30,270.40 835.30,273.90 V285.00 Z" fill="url(#gBlue)"/>
<path d="M747.00,285.00 V273.90 Q747.00,270.40 750.50,270.40 H831.80 Q835.30,270.40 835.30,273.90 V285.00 Z" fill="url(#gGloss)"/>
<text x="756.20" y="281.70" font-family="Liberation Sans, sans-serif" font-size="8.6" font-weight="700" fill="#000" fill-opacity="0.55" text-anchor="start" textLength="53.3" lengthAdjust="spacingAndGlyphs">Texture Sample</text><text x="755.60" y="281.00" font-family="Liberation Sans, sans-serif" font-size="8.6" font-weight="700" fill="#eeeeee" text-anchor="start" textLength="53.3" lengthAdjust="spacingAndGlyphs" stroke="#eeeeee" stroke-width="0.08">Texture Sample</text>
<path d="M824.20,281.05 L831.20,281.05 L827.70,276.55 Z" fill="#cfcfcf"/>
<path d="M758.55,293.00 L761.15,295.00 L758.55,297.00 Z" fill="#333333"/><circle cx="755.00" cy="295.00" r="3.35" fill="#3e3e3e"/>
<text x="764.60" y="298.60" font-family="Liberation Sans, sans-serif" font-size="9.0" font-weight="400" fill="#000" fill-opacity="0.55" text-anchor="start" transform="translate(764.00,0) scale(0.82,1) translate(-764.00,0)">UVs</text><text x="764.00" y="297.90" font-family="Liberation Sans, sans-serif" font-size="9.0" font-weight="400" fill="#e4e4e4" text-anchor="start" transform="translate(764.00,0) scale(0.82,1) translate(-764.00,0)" stroke="#e4e4e4" stroke-width="0.08">UVs</text>
<rect x="750.00" y="306.30" width="62.00" height="61.20" fill="url(#tg)"/>
<path d="M828.70,292.90 L831.50,295.00 L828.70,297.10 Z" fill="#c4c4c4"/><circle cx="825.00" cy="295.00" r="4.0" fill="#000" fill-opacity="0.35"/><circle cx="825.00" cy="295.00" r="3.4" fill="#f0f0f0"/>
<path d="M828.30,309.20 L830.90,311.00 L828.30,312.80 Z" fill="#e01818"/><circle cx="825.00" cy="311.00" r="2.9" fill="#0c0c0c" stroke="#e01818" stroke-width="1.3"/>
<path d="M828.30,325.40 L830.90,327.20 L828.30,329.00 Z" fill="#18d018"/><circle cx="825.00" cy="327.20" r="2.9" fill="#0c0c0c" stroke="#18d018" stroke-width="1.3"/>
<path d="M828.30,341.40 L830.90,343.20 L828.30,345.00 Z" fill="#1616d0"/><circle cx="825.00" cy="343.20" r="2.9" fill="#0c0c0c" stroke="#1616d0" stroke-width="1.3"/>
<path d="M828.30,357.60 L830.90,359.40 L828.30,361.20 Z" fill="#a8a8a8"/><circle cx="825.00" cy="359.40" r="2.9" fill="#0c0c0c" stroke="#a8a8a8" stroke-width="1.3"/><rect x="786.60" y="371.10" width="90.10" height="101.70" rx="4.4" fill="#000" fill-opacity="0.6"/>
<rect x="787.50" y="372.00" width="88.30" height="99.90" rx="3.5" fill="#151815" fill-opacity="0.72"/>
<path d="M787.50,386.60 V375.50 Q787.50,372.00 791.00,372.00 H872.30 Q875.80,372.00 875.80,375.50 V386.60 Z" fill="url(#gBlue)"/>
<path d="M787.50,386.60 V375.50 Q787.50,372.00 791.00,372.00 H872.30 Q875.80,372.00 875.80,375.50 V386.60 Z" fill="url(#gGloss)"/>
<text x="796.70" y="383.30" font-family="Liberation Sans, sans-serif" font-size="8.6" font-weight="700" fill="#000" fill-opacity="0.55" text-anchor="start" textLength="53.3" lengthAdjust="spacingAndGlyphs">Texture Sample</text><text x="796.10" y="382.60" font-family="Liberation Sans, sans-serif" font-size="8.6" font-weight="700" fill="#eeeeee" text-anchor="start" textLength="53.3" lengthAdjust="spacingAndGlyphs" stroke="#eeeeee" stroke-width="0.08">Texture Sample</text>
<path d="M864.70,382.65 L871.70,382.65 L868.20,378.15 Z" fill="#cfcfcf"/>
<path d="M799.05,394.60 L801.65,396.60 L799.05,398.60 Z" fill="#333333"/><circle cx="795.50" cy="396.60" r="3.35" fill="#3e3e3e"/>
<text x="805.10" y="400.20" font-family="Liberation Sans, sans-serif" font-size="9.0" font-weight="400" fill="#000" fill-opacity="0.55" text-anchor="start" transform="translate(804.50,0) scale(0.82,1) translate(-804.50,0)">UVs</text><text x="804.50" y="399.50" font-family="Liberation Sans, sans-serif" font-size="9.0" font-weight="400" fill="#e4e4e4" text-anchor="start" transform="translate(804.50,0) scale(0.82,1) translate(-804.50,0)" stroke="#e4e4e4" stroke-width="0.08">UVs</text>
<rect x="790.50" y="407.90" width="62.00" height="61.20" fill="url(#tn)"/>
<path d="M869.20,394.50 L872.00,396.60 L869.20,398.70 Z" fill="#c4c4c4"/><circle cx="865.50" cy="396.60" r="4.0" fill="#000" fill-opacity="0.35"/><circle cx="865.50" cy="396.60" r="3.4" fill="#f0f0f0"/>
<path d="M868.80,410.80 L871.40,412.60 L868.80,414.40 Z" fill="#e01818"/><circle cx="865.50" cy="412.60" r="2.9" fill="#0c0c0c" stroke="#e01818" stroke-width="1.3"/>
<path d="M868.80,427.00 L871.40,428.80 L868.80,430.60 Z" fill="#18d018"/><circle cx="865.50" cy="428.80" r="2.9" fill="#0c0c0c" stroke="#18d018" stroke-width="1.3"/>
<path d="M868.80,443.00 L871.40,444.80 L868.80,446.60 Z" fill="#1616d0"/><circle cx="865.50" cy="444.80" r="2.9" fill="#0c0c0c" stroke="#1616d0" stroke-width="1.3"/>
<path d="M868.80,459.20 L871.40,461.00 L868.80,462.80 Z" fill="#a8a8a8"/><circle cx="865.50" cy="461.00" r="2.9" fill="#0c0c0c" stroke="#a8a8a8" stroke-width="1.3"/><rect x="786.60" y="483.40" width="90.10" height="101.70" rx="4.4" fill="#000" fill-opacity="0.6"/>
<rect x="787.50" y="484.30" width="88.30" height="99.90" rx="3.5" fill="#151815" fill-opacity="0.72"/>
<path d="M787.50,498.90 V487.80 Q787.50,484.30 791.00,484.30 H872.30 Q875.80,484.30 875.80,487.80 V498.90 Z" fill="url(#gBlue)"/>
<path d="M787.50,498.90 V487.80 Q787.50,484.30 791.00,484.30 H872.30 Q875.80,484.30 875.80,487.80 V498.90 Z" fill="url(#gGloss)"/>
<text x="796.70" y="495.60" font-family="Liberation Sans, sans-serif" font-size="8.6" font-weight="700" fill="#000" fill-opacity="0.55" text-anchor="start" textLength="53.3" lengthAdjust="spacingAndGlyphs">Texture Sample</text><text x="796.10" y="494.90" font-family="Liberation Sans, sans-serif" font-size="8.6" font-weight="700" fill="#eeeeee" text-anchor="start" textLength="53.3" lengthAdjust="spacingAndGlyphs" stroke="#eeeeee" stroke-width="0.08">Texture Sample</text>
<path d="M864.70,494.95 L871.70,494.95 L868.20,490.45 Z" fill="#cfcfcf"/>
<path d="M799.05,506.90 L801.65,508.90 L799.05,510.90 Z" fill="#333333"/><circle cx="795.50" cy="508.90" r="3.35" fill="#3e3e3e"/>
<text x="805.10" y="512.50" font-family="Liberation Sans, sans-serif" font-size="9.0" font-weight="400" fill="#000" fill-opacity="0.55" text-anchor="start" transform="translate(804.50,0) scale(0.82,1) translate(-804.50,0)">UVs</text><text x="804.50" y="511.80" font-family="Liberation Sans, sans-serif" font-size="9.0" font-weight="400" fill="#e4e4e4" text-anchor="start" transform="translate(804.50,0) scale(0.82,1) translate(-804.50,0)" stroke="#e4e4e4" stroke-width="0.08">UVs</text>
<rect x="790.50" y="520.20" width="62.00" height="61.20" fill="url(#tw2)"/>
<path d="M869.20,506.80 L872.00,508.90 L869.20,511.00 Z" fill="#c4c4c4"/><circle cx="865.50" cy="508.90" r="4.0" fill="#000" fill-opacity="0.35"/><circle cx="865.50" cy="508.90" r="3.4" fill="#f0f0f0"/>
<path d="M868.80,523.10 L871.40,524.90 L868.80,526.70 Z" fill="#e01818"/><circle cx="865.50" cy="524.90" r="2.9" fill="#0c0c0c" stroke="#e01818" stroke-width="1.3"/>
<path d="M868.80,539.30 L871.40,541.10 L868.80,542.90 Z" fill="#18d018"/><circle cx="865.50" cy="541.10" r="2.9" fill="#0c0c0c" stroke="#18d018" stroke-width="1.3"/>
<path d="M868.80,555.30 L871.40,557.10 L868.80,558.90 Z" fill="#1616d0"/><circle cx="865.50" cy="557.10" r="2.9" fill="#0c0c0c" stroke="#1616d0" stroke-width="1.3"/>
<path d="M868.80,571.50 L871.40,573.30 L868.80,575.10 Z" fill="#a8a8a8"/><circle cx="865.50" cy="573.30" r="2.9" fill="#0c0c0c" stroke="#a8a8a8" stroke-width="1.3"/>
</svg>
</body></html>
